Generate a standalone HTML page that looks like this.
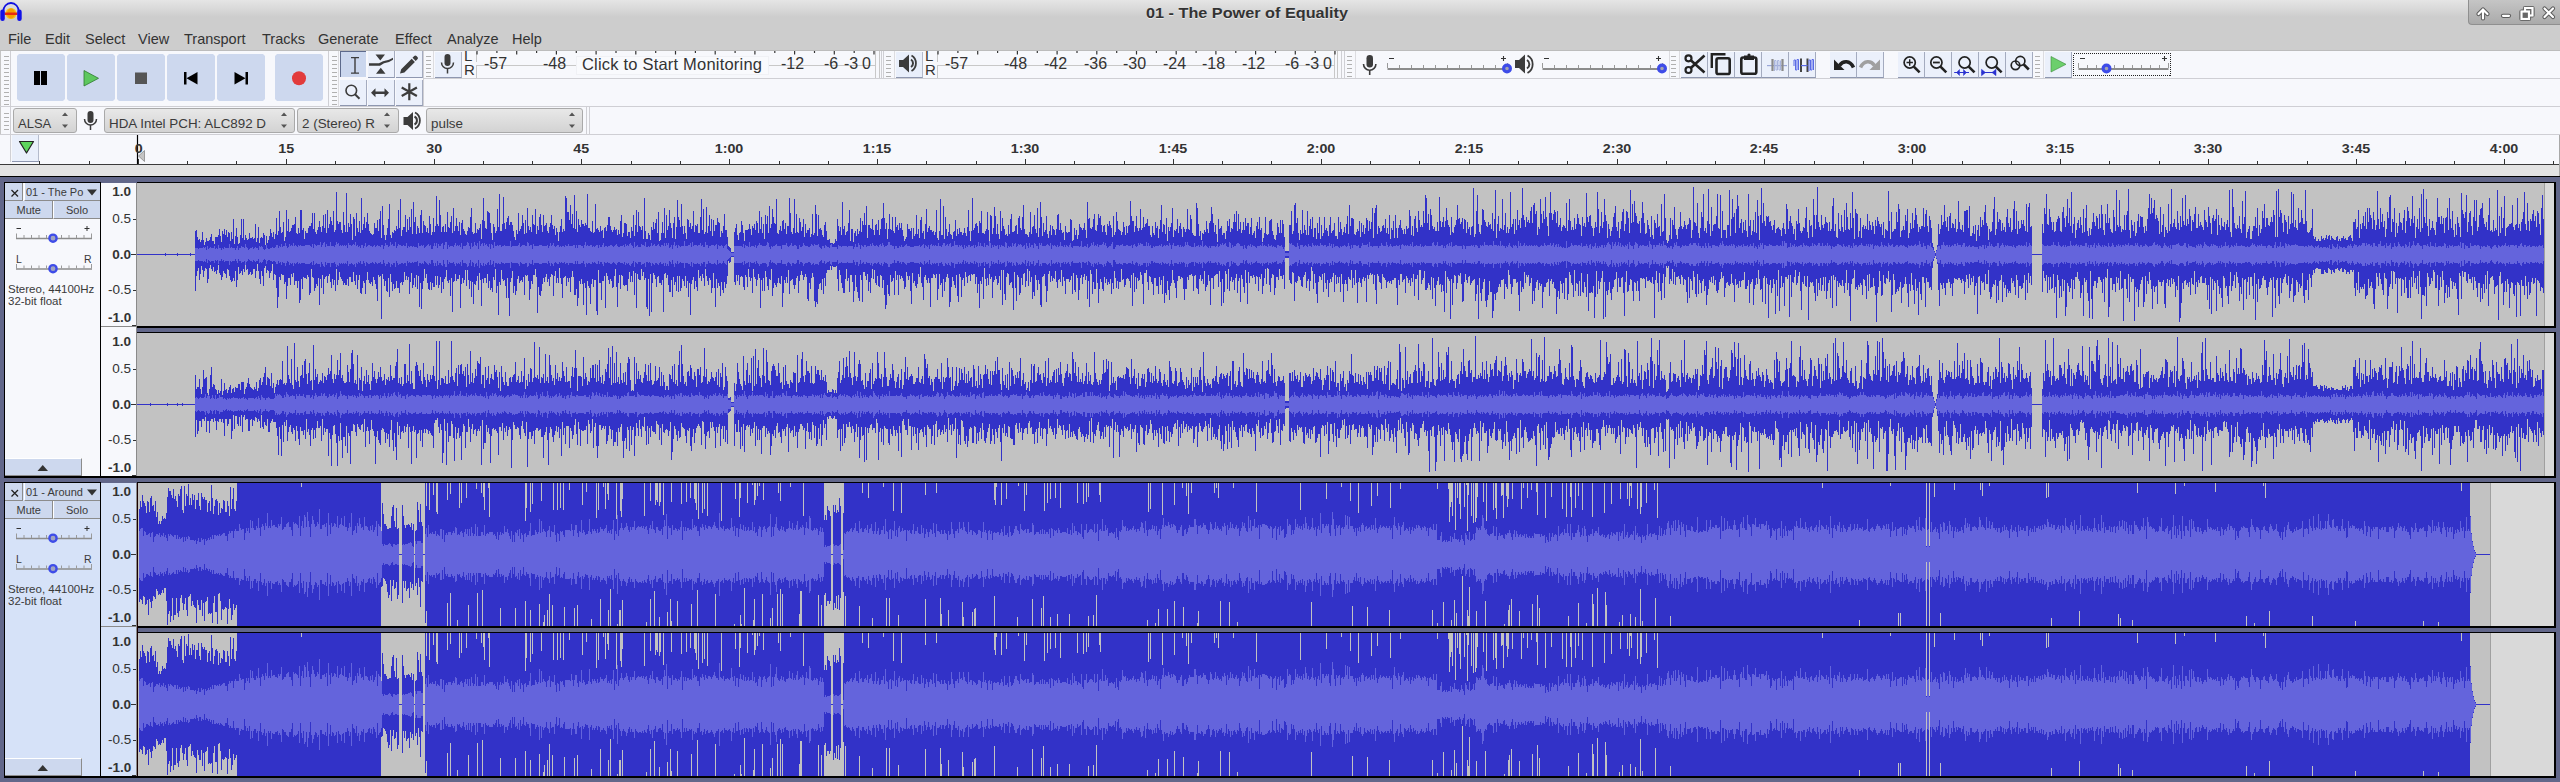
<!DOCTYPE html>
<html><head><meta charset="utf-8">
<style>
*{box-sizing:border-box;margin:0;padding:0}
html,body{width:2560px;height:782px;overflow:hidden;background:#f7f8fc;font-family:"Liberation Sans",sans-serif;color:#333}
.a{position:absolute}
.t{position:absolute;white-space:nowrap;line-height:1}
svg{position:absolute;overflow:visible}
.tb{background:#f7f8fc}
.grip{position:absolute;width:5px;background:repeating-linear-gradient(to bottom,transparent 0,transparent 3px,#b0b0b0 3px,#b0b0b0 4px)}
.btn{position:absolute;background:#cdd8ee;clip-path:polygon(2px 0,calc(100% - 2px) 0,100% 2px,100% calc(100% - 2px),calc(100% - 2px) 100%,2px 100%,0 calc(100% - 2px),0 2px)}
.tbtn{position:absolute;background:#ebf0fb;border-right:1px solid #a4abbf;border-bottom:1px solid #8e97b0}
.combo{position:absolute;height:25px;border:1px solid #a9a9a9;border-radius:3px;background:linear-gradient(#e8e8e8,#d3d3d3);font-size:14px;color:#3a3a3a}
.mi{position:absolute;top:32px;font-size:14.5px;color:#333;line-height:1}
.lbl{position:absolute;font-size:16px;color:#333;line-height:1;white-space:nowrap}
.rl{position:absolute;top:142px;font-size:13px;font-weight:bold;color:#333;line-height:1;white-space:nowrap}
.vr{position:absolute;font-size:12px;color:#333;line-height:1;white-space:nowrap}
.vrb{font-weight:bold}
</style></head><body>
<!-- title + menu -->
<div class="a" style="left:0;top:0;width:2560px;height:51px;background:linear-gradient(#e5e5e5 0px,#dadada 8px,#cdcdcd 17px,#cdcdcd 51px)"></div>
<div class="a" style="left:0;top:50px;width:2560px;height:1px;background:#bcbcbc"></div>
<!-- app icon -->
<svg style="left:0;top:0" width="24" height="24" viewBox="0 0 24 24">
 <circle cx="11" cy="13.5" r="5.5" fill="#f7c21a"/>
 <ellipse cx="11" cy="13.5" rx="4" ry="5" fill="#f5a000"/>
 <rect x="4.5" y="12.5" width="13" height="2.5" fill="#e82a10"/>
 <path d="M3.2 15 V11.5 A7.8 8.5 0 0 1 18.8 11.5 V15" fill="none" stroke="#1010e0" stroke-width="1.8"/>
 <rect x="0.3" y="9.5" width="4.5" height="11.5" rx="2.2" fill="#1212e8"/>
 <rect x="17.2" y="9.5" width="4.5" height="11.5" rx="2.2" fill="#1212e8"/>
</svg>
<div class="t" style="left:1146px;top:6px;font-size:14.4px;font-weight:bold;color:#333;transform:scaleX(1.128);transform-origin:0 0;text-shadow:0 1px 0 rgba(255,255,255,.6)">01 - The Power of Equality</div>
<!-- window controls -->
<div class="a" style="left:2468px;top:0;width:92px;height:25px;background:linear-gradient(#c5c5c5,#aaaaaa);border-left:1px solid #8f8f8f;border-bottom:1px solid #8f8f8f;border-bottom-left-radius:4px"></div>
<svg style="left:2470px;top:4px" width="90" height="18" viewBox="0 0 90 18">
 <g stroke="#5a5a5a" stroke-width="4.2" fill="none" stroke-linejoin="round" stroke-linecap="round">
  <path d="M13 14.5V5.5M8.5 10L13 5.5L17.5 10"/>
  <path d="M33 11.8h6"/>
  <rect x="55" y="4" width="7.5" height="7.5"/><rect x="51.5" y="7.5" width="7.5" height="7.5"/>
  <path d="M74.5 4.5L83 13M83 4.5L74.5 13"/>
 </g>
 <g stroke="#ffffff" stroke-width="2.2" fill="none" stroke-linecap="round">
  <path d="M13 14.5V5.5M8.5 10L13 5.5L17.5 10"/>
  <path d="M33 11.8h6"/>
  <rect x="55" y="4" width="7.5" height="7.5"/><rect x="51.5" y="7.5" width="7.5" height="7.5" fill="#666"/>
  <path d="M74.5 4.5L83 13M83 4.5L74.5 13"/>
 </g>
</svg>
<div class="mi" style="left:8px">File</div>
<div class="mi" style="left:45px">Edit</div>
<div class="mi" style="left:85px">Select</div>
<div class="mi" style="left:138px">View</div>
<div class="mi" style="left:184px">Transport</div>
<div class="mi" style="left:262px">Tracks</div>
<div class="mi" style="left:318px">Generate</div>
<div class="mi" style="left:395px">Effect</div>
<div class="mi" style="left:447px">Analyze</div>
<div class="mi" style="left:512px">Help</div>
<!-- toolbar rows -->
<div class="a" style="left:0;top:51px;width:2560px;height:84px;background:#f7f8fc"></div>
<div class="a" style="left:0;top:51px;width:1px;height:84px;background:#c4c4c4"></div>
<div class="a" style="left:0;top:106px;width:2560px;height:1px;background:#cfcfd4"></div>
<div class="a" style="left:0;top:134px;width:2560px;height:1px;background:#cfcfd4"></div>
<div class="a" style="left:423px;top:78px;width:2137px;height:1px;background:#cfcfd4"></div>
<!-- transport toolbar -->
<div class="a" style="left:10px;top:51px;width:1px;height:55px;background:#cfcfd4"></div>
<div class="grip" style="left:4px;top:53px;height:52px"></div>
<div class="btn" style="left:17px;top:54px;width:48px;height:47px"></div>
<div class="btn" style="left:67px;top:54px;width:48px;height:47px"></div>
<div class="btn" style="left:117px;top:54px;width:48px;height:47px"></div>
<div class="btn" style="left:167px;top:54px;width:48px;height:47px"></div>
<div class="btn" style="left:217px;top:54px;width:48px;height:47px"></div>
<div class="btn" style="left:275px;top:54px;width:48px;height:47px"></div>
<svg style="left:0;top:0" width="330" height="106">
 <rect x="34" y="71" width="6" height="14" fill="#000"/><rect x="41" y="71" width="6" height="14" fill="#000"/>
 <path d="M84 70.5L98.5 78.3L84 86Z" fill="#5ec85e" stroke="#2f7a2f" stroke-width="0.8"/>
 <rect x="135" y="72.5" width="12" height="11.5" fill="#555"/>
 <rect x="184" y="72" width="2.5" height="12.5" fill="#000"/><path d="M186.5 78.2L197.5 72V84.5Z" fill="#000"/>
 <rect x="245.5" y="72" width="2.5" height="12.5" fill="#000"/><path d="M245.5 78.2L234.5 72V84.5Z" fill="#000"/>
 <circle cx="299" cy="78.3" r="7" fill="#e23b3b"/>
</svg>
<div class="a" style="left:328px;top:51px;width:1px;height:55px;background:#cfcfd4"></div>
<!-- tools toolbar -->
<div class="grip" style="left:332px;top:53px;height:52px"></div>
<div class="a" style="left:338px;top:51px;width:1px;height:55px;background:#dcdce0"></div>
<div class="a" style="left:340px;top:51px;width:26px;height:26px;background:#cbd7ee;border-top:1px solid #5d6a8c;border-left:1px solid #5d6a8c"></div>
<div class="tbtn" style="left:368px;top:51px;width:27px;height:27px"></div>
<div class="tbtn" style="left:396px;top:51px;width:27px;height:27px"></div>
<div class="tbtn" style="left:340px;top:80px;width:27px;height:26px"></div>
<div class="tbtn" style="left:368px;top:80px;width:27px;height:26px"></div>
<div class="tbtn" style="left:396px;top:80px;width:27px;height:26px"></div>
<svg style="left:0;top:0" width="430" height="106">
 <g fill="#3c3c3c" stroke="none">
  <path d="M351 57h8v1.3h-3.3v14.2h3.3v1.3h-8v-1.3h3.3V58.3H351Z"/>
  <path d="M375.5 54.5h9.5l-4.7 6Z M376 73.7h9.5l-4.7-6Z M369 63.3h10l4-2 6-1.5 4-2v2l-4 2.3-5 1.2-4 2.5h-11Z"/>
  <path d="M400 73.5l1.2-4.3 10.5-10.5 3.2 3.2-10.5 10.5Z M412.5 57.8l1.7-1.7c.7-.7 1.6-.7 2.3 0l.9.9c.7.7.7 1.6 0 2.3l-1.7 1.7Z"/>
 </g>
 <g fill="none" stroke="#3c3c3c" stroke-width="1.6">
  <circle cx="351.3" cy="90.5" r="5.3"/><path d="M355 94.3l4.5 4.5" stroke-width="2"/>
 </g>
 <path d="M371 92.7l4.5-4.5v3.2h9v-3.2l4.5 4.5-4.5 4.5v-3.2h-9v3.2Z" fill="#3c3c3c"/>
 <path d="M409.3 83.3v17M401.7 87.5l15.2 8.5M401.7 96l15.2-8.5" stroke="#3c3c3c" stroke-width="2.2"/>
</svg>
<!-- record meter toolbar -->
<div class="grip" style="left:426px;top:53px;height:24px"></div>
<div class="a" style="left:433px;top:51px;width:1px;height:27px;background:#dcdce0"></div>
<div class="a" style="left:423px;top:51px;width:1px;height:55px;background:#cfcfd4"></div>
<div class="a" style="left:435px;top:52px;width:27px;height:26px;background:#e9effb;border-right:1px solid #b4bbcc;border-bottom:1px solid #8e97b0"></div>
<svg style="left:0;top:0" width="900" height="80">
 <rect x="444.5" y="54" width="6" height="12" rx="3" fill="#3c3c3c"/>
 <path d="M441.5 62.5a6 6 0 0 0 12 0" fill="none" stroke="#3c3c3c" stroke-width="1.5"/>
 <path d="M447.5 68.5v5" stroke="#3c3c3c" stroke-width="1.5"/>
</svg>
<div class="t" style="left:464px;top:49px;font-size:15px;color:#333;line-height:13.5px">L<br>R</div>
<div class="a" style="left:476px;top:52px;width:1px;height:10px;background:#c8c8c8"></div>
<div class="a" style="left:476px;top:65px;width:1px;height:13px;background:#c8c8c8"></div>
<div class="a" style="left:476px;top:65px;width:400px;height:1px;background:#c8c8c8"></div>
<div class="a" style="left:576px;top:56px;width:193px;height:19px;background:#f9fafd;border:1px solid #f0f1f5"></div>
<div class="lbl" style="left:484px;top:56px">-57</div>
<div class="lbl" style="left:543px;top:56px">-48</div>
<div class="lbl" style="left:582px;top:56px;font-size:16.5px;letter-spacing:0.2px">Click to Start Monitoring</div>
<div class="lbl" style="left:781px;top:56px">-12</div>
<div class="lbl" style="left:824px;top:56px">-6</div>
<div class="lbl" style="left:844px;top:56px">-3</div>
<div class="lbl" style="left:862px;top:56px">0</div>
<div class="a" style="left:875px;top:51px;width:1px;height:27px;background:#c8c8c8"></div>
<div class="a" style="left:879px;top:51px;width:1px;height:27px;background:#c8c8c8"></div>
<div class="a" style="left:881px;top:51px;width:3px;height:27px;border-left:1px solid #cfcfd4;border-right:1px solid #cfcfd4"></div>
<!-- play meter toolbar -->
<div class="grip" style="left:886px;top:53px;height:24px"></div>
<div class="a" style="left:894px;top:51px;width:1px;height:27px;background:#dcdce0"></div>
<div class="a" style="left:896px;top:52px;width:27px;height:26px;background:#e9effb;border-right:1px solid #b4bbcc;border-bottom:1px solid #8e97b0"></div>
<svg style="left:0;top:0" width="1400" height="80">
 <path d="M899 60h4l6-5.5v18l-6-5.5h-4Z" fill="#3c3c3c"/>
 <path d="M911 59.5a4.5 4.5 0 0 1 0 7.5" fill="none" stroke="#3c3c3c" stroke-width="2"/>
 <path d="M911.5 55.5a9 9 0 0 1 0 15.5" fill="none" stroke="#3c3c3c" stroke-width="1.8"/>
</svg>
<div class="t" style="left:925px;top:49px;font-size:15px;color:#333;line-height:13.5px">L<br>R</div>
<div class="a" style="left:937px;top:52px;width:1px;height:10px;background:#c8c8c8"></div>
<div class="a" style="left:937px;top:65px;width:1px;height:13px;background:#c8c8c8"></div>
<div class="a" style="left:937px;top:65px;width:397px;height:1px;background:#c8c8c8"></div>
<div class="lbl" style="left:945px;top:56px">-57</div>
<div class="lbl" style="left:1004px;top:56px">-48</div>
<div class="lbl" style="left:1044px;top:56px">-42</div>
<div class="lbl" style="left:1084px;top:56px">-36</div>
<div class="lbl" style="left:1123px;top:56px">-30</div>
<div class="lbl" style="left:1163px;top:56px">-24</div>
<div class="lbl" style="left:1202px;top:56px">-18</div>
<div class="lbl" style="left:1242px;top:56px">-12</div>
<div class="lbl" style="left:1285px;top:56px">-6</div>
<div class="lbl" style="left:1305px;top:56px">-3</div>
<div class="lbl" style="left:1323px;top:56px">0</div>
<div class="a" style="left:1334px;top:51px;width:1px;height:27px;background:#c8c8c8"></div>
<div class="a" style="left:1337px;top:51px;width:1px;height:27px;background:#c8c8c8"></div>
<div class="a" style="left:1341px;top:51px;width:4px;height:27px;border-left:1px solid #cfcfd4;border-right:1px solid #cfcfd4"></div>
<!-- mixer toolbar -->
<div class="grip" style="left:1347px;top:53px;height:24px"></div>
<div class="a" style="left:1355px;top:51px;width:1px;height:27px;background:#dcdce0"></div>
<svg style="left:0;top:0" width="2200" height="80">
 <rect x="1366.5" y="55" width="6.5" height="12.5" rx="3.2" fill="#3c3c3c"/>
 <path d="M1363.5 64a6.2 6.2 0 0 0 12.4 0" fill="none" stroke="#3c3c3c" stroke-width="1.6"/>
 <path d="M1369.7 70v5" stroke="#3c3c3c" stroke-width="1.6"/>
 <path d="M1515 60h4l6-5.5v19l-6-5.5h-4Z" fill="#3c3c3c"/>
 <path d="M1527 60a5 5 0 0 1 0 8.5" fill="none" stroke="#3c3c3c" stroke-width="2"/>
 <path d="M1527.5 55.5a10 10 0 0 1 0 17.5" fill="none" stroke="#3c3c3c" stroke-width="1.8"/>
<path d="M1387.5 69H1507.5" stroke="#8c8c8c" stroke-width="2"/><path d="M1387.5 65v3M1399.5 65v3M1411.5 65v3M1423.5 65v3M1435.5 65v3M1447.5 65v3M1459.5 65v3M1471.5 65v3M1483.5 65v3M1495.5 65v3M1507.5 65v3M1387.5 63v3M1507.5 63v3" stroke="#9a9a9a" stroke-width="1"/><path d="M1389.0 58.5h5M1501.0 58.5h5M1503.5 56v5" stroke="#333" stroke-width="1.1"/><circle cx="1507" cy="68.5" r="3.4" fill="#a4a4b0" stroke="#3e4ce8" stroke-width="3.2"/><path d="M1542.5 69H1662.5" stroke="#8c8c8c" stroke-width="2"/><path d="M1542.5 65v3M1554.5 65v3M1566.5 65v3M1578.5 65v3M1590.5 65v3M1602.5 65v3M1614.5 65v3M1626.5 65v3M1638.5 65v3M1650.5 65v3M1662.5 65v3M1542.5 63v3M1662.5 63v3" stroke="#9a9a9a" stroke-width="1"/><path d="M1544.0 58.5h5M1656.0 58.5h5M1658.5 56v5" stroke="#333" stroke-width="1.1"/><circle cx="1662" cy="68.5" r="3.4" fill="#a4a4b0" stroke="#3e4ce8" stroke-width="3.2"/>
</svg>
<div class="a" style="left:1669px;top:51px;width:1px;height:27px;background:#dcdce0"></div>
<!-- edit toolbar -->
<div class="grip" style="left:1671px;top:53px;height:24px"></div>
<div class="a" style="left:1679px;top:51px;width:1px;height:27px;background:#dcdce0"></div>
<div class="tbtn" style="left:1681px;top:52px;width:27px;height:26px"></div>
<div class="tbtn" style="left:1708px;top:52px;width:27px;height:26px"></div>
<div class="tbtn" style="left:1735px;top:52px;width:27px;height:26px"></div>
<div class="tbtn" style="left:1762px;top:52px;width:27px;height:26px"></div>
<div class="tbtn" style="left:1789px;top:52px;width:27px;height:26px"></div>
<div class="tbtn" style="left:1830px;top:52px;width:27px;height:26px"></div>
<div class="tbtn" style="left:1857px;top:52px;width:27px;height:26px"></div>
<div class="tbtn" style="left:1898px;top:52px;width:27px;height:26px"></div>
<div class="tbtn" style="left:1925px;top:52px;width:27px;height:26px"></div>
<div class="tbtn" style="left:1952px;top:52px;width:27px;height:26px"></div>
<div class="tbtn" style="left:1979px;top:52px;width:27px;height:26px"></div>
<div class="tbtn" style="left:2006px;top:52px;width:27px;height:26px"></div>
<svg style="left:0;top:0" width="2200" height="80">
 <g fill="none" stroke="#222">
  <circle cx="1688.5" cy="58.3" r="3" stroke-width="2.2"/><circle cx="1688.5" cy="70" r="3" stroke-width="2.2"/>
  <path d="M1690.8 60.3L1704.5 72.5M1690.8 68L1704.5 55.5" stroke-width="2.6"/>
  <path d="M1711.8 68V54.2H1725.5" stroke-width="2.4"/>
  <rect x="1716.5" y="58.2" width="13.2" height="15.8" rx="1.8" stroke-width="2.6"/>
  <rect x="1741.3" y="57.5" width="15" height="16.3" rx="1.8" stroke-width="2.6"/>
 </g>
 <path d="M1744 55.5h10v4.5h-10Z" fill="#222"/><circle cx="1749" cy="55" r="1.6" fill="#222"/>
 <g fill="none">
  <path d="M1767 65.6H1787" stroke="#9aa6d8" stroke-width="1.2"/>
  <path d="M1772.5 59v12M1782.5 59v12" stroke="#8a8a8a" stroke-width="2.2"/>
  <path d="M1774.5 71V60.5h1.5V70h1.5V60.5h1.5V70h1.5V60.5" stroke="#a9b4dc" stroke-width="1"/>
 </g>
 <g fill="none">
  <path d="M1794 66V60h1.5v10h1.5V59.5h1.5V70" stroke="#5a6ae6" stroke-width="1"/>
  <path d="M1801 58.5v13.5M1807.5 58.5v13.5" stroke="#444" stroke-width="2"/>
  <path d="M1801 65.6H1807.5" stroke="#5a6ae6" stroke-width="1.2"/>
  <path d="M1809 71V60h1.5v10h1.5V59.5h1.5V70" stroke="#5a6ae6" stroke-width="1"/>
 </g>
 <path d="M1839.5 65.5C1843 60.5 1850 60 1853.5 67.5" fill="none" stroke="#222" stroke-width="3.6"/>
 <path d="M1834 59.5V70H1844.5Z" fill="#222"/>
 <path d="M1874.5 65.5C1871 60.5 1864 60 1860.5 67.5" fill="none" stroke="#a0a0a0" stroke-width="3.6"/>
 <path d="M1880 59.5V70H1869.5Z" fill="#a0a0a0"/>
 <g fill="none" stroke="#222" stroke-width="1.7">
  <circle cx="1909.7" cy="62.5" r="5.6"/><path d="M1913.8 66.6l5.8 5.8" stroke-width="2.6"/><path d="M1906.5 62.5h6.4M1909.7 59.3v6.4" stroke-width="1.4"/>
  <circle cx="1936.4" cy="62.5" r="5.6"/><path d="M1940.5 66.6l5.8 5.8" stroke-width="2.6"/><path d="M1933 62.5h6.8" stroke-width="1.8"/>
  <circle cx="1964.6" cy="62.5" r="5.6"/><path d="M1968.7 66.6l5.8 5.8" stroke-width="2.6"/>
  <circle cx="1991.7" cy="62.5" r="5.6"/><path d="M1995.8 66.6l5.8 5.8" stroke-width="2.6"/>
  <circle cx="2020.3" cy="61" r="4.6"/><circle cx="2015.5" cy="65.3" r="4.3"/><path d="M2023.8 64.5l5 5" stroke-width="2.6"/>
 </g>
 <g fill="#2a32d0" stroke="#2a32d0">
  <path d="M1954.2 72.5H1969" stroke-width="1"/><path d="M1956.5 72.5l3-3v6Z M1966.5 72.5l-3-3v6Z" stroke-width="0.5"/>
  <path d="M1981.5 72.5H1996" stroke-width="1"/><path d="M1981.5 69.3V75.7L1985.5 72.5Z M1996 69.3V75.7L1992 72.5Z" stroke-width="0.5"/>
 </g>
</svg>
<div class="grip" style="left:2035px;top:53px;height:24px"></div>
<div class="a" style="left:2043px;top:51px;width:1px;height:27px;background:#dcdce0"></div>
<div class="tbtn" style="left:2045px;top:52px;width:27px;height:26px"></div>
<svg style="left:0;top:0" width="2200" height="80">
 <path d="M2051 56.5L2066 64.3L2051 72Z" fill="#6ccf6c" stroke="#3a8a3a" stroke-width="0.6"/>
 <rect x="2073.5" y="53.5" width="97" height="22" fill="none" stroke="#222" stroke-width="1" stroke-dasharray="1 1" shape-rendering="crispEdges"/>
<path d="M2078.5 69H2168.5" stroke="#8c8c8c" stroke-width="2"/><path d="M2078.5 65v3M2087.5 65v3M2096.5 65v3M2105.5 65v3M2114.5 65v3M2123.5 65v3M2132.5 65v3M2141.5 65v3M2150.5 65v3M2159.5 65v3M2168.5 65v3M2078.5 63v3M2168.5 63v3" stroke="#9a9a9a" stroke-width="1"/><path d="M2080.0 58.5h5M2162.0 58.5h5M2164.5 56v5" stroke="#333" stroke-width="1.1"/><circle cx="2106.5" cy="68.5" r="3.4" fill="#a4a4b0" stroke="#3e4ce8" stroke-width="3.2"/>
</svg>
<!-- device toolbar -->
<div class="grip" style="left:4px;top:110px;height:23px"></div>
<div class="a" style="left:10px;top:107px;width:1px;height:27px;background:#cfcfd4"></div>
<div class="combo" style="left:13px;top:108px;width:64px"><span class="t" style="left:4px;top:7.5px;font-size:13px">ALSA</span></div>
<div class="combo" style="left:104px;top:108px;width:191px"><span class="t" style="left:4px;top:7.5px;font-size:13.4px">HDA Intel PCH: ALC892 D</span></div>
<div class="combo" style="left:297px;top:108px;width:102px"><span class="t" style="left:4px;top:7.5px;font-size:13.4px">2 (Stereo) R</span></div>
<div class="combo" style="left:426px;top:108px;width:157px"><span class="t" style="left:4px;top:7.5px;font-size:13.4px">pulse</span></div>
<svg style="left:0;top:0" width="600" height="135">
 <g fill="#555">
  <path d="M62 116l3-3.5 3 3.5Z M62 124.5l3 3.5 3-3.5Z"/>
  <path d="M281 116l3-3.5 3 3.5Z M281 124.5l3 3.5 3-3.5Z"/>
  <path d="M384 116l3-3.5 3 3.5Z M384 124.5l3 3.5 3-3.5Z"/>
  <path d="M569 116l3-3.5 3 3.5Z M569 124.5l3 3.5 3-3.5Z"/>
 </g>
 <rect x="87.5" y="111" width="6" height="12" rx="3" fill="#3c3c3c"/>
 <path d="M84.5 119a6 6 0 0 0 12 0" fill="none" stroke="#3c3c3c" stroke-width="1.5"/>
 <path d="M90.5 125v5" stroke="#3c3c3c" stroke-width="1.5"/>
 <path d="M403.5 117h4l5.5-5v18l-5.5-5h-4Z" fill="#3c3c3c"/>
 <path d="M414.5 116.5a4.5 4.5 0 0 1 0 8" fill="none" stroke="#3c3c3c" stroke-width="2"/>
 <path d="M415 112.5a9 9 0 0 1 0 16" fill="none" stroke="#3c3c3c" stroke-width="1.8"/>
</svg>
<div class="a" style="left:586px;top:107px;width:4px;height:27px;border-left:1px solid #cfcfd4;border-right:1px solid #cfcfd4"></div>
<!-- ruler -->
<div class="a" style="left:0;top:135px;width:2560px;height:30px;background:#f7f8fc"></div>
<div class="a" style="left:10px;top:135px;width:1px;height:27px;background:#d0d0d4"></div>
<div class="a" style="left:12px;top:135px;width:27px;height:27px;background:#e9effb;border-right:1px solid #b4bbcc;border-bottom:1px solid #8e97b0"></div>
<svg style="left:0;top:0" width="200" height="170">
 <path d="M19.5 141.5h14l-7 11.5Z" fill="#5ed45e" stroke="#222" stroke-width="1.2" stroke-linejoin="round"/>
</svg>
<div class="a" style="left:0;top:164px;width:2560px;height:1px;background:#3a3a3a"></div>
<div class="a" style="left:2559px;top:135px;width:1px;height:42px;background:#a8a8a8"></div>
<div class="a" style="left:0;top:165px;width:2559px;height:11px;background:#e3e3e3"></div>
<div class="a" style="left:0;top:176px;width:2560px;height:1px;background:#000"></div>
<svg style="left:0;top:0" width="1400" height="60"><path d="M477.0 51v3.5M496.9 51v2M516.7 51v3.5M536.6 51v2M556.4 51v3.5M576.3 51v2M596.1 51v3.5M616.0 51v2M635.8 51v3.5M655.7 51v2M675.5 51v3.5M695.4 51v2M715.2 51v3.5M735.1 51v2M754.9 51v3.5M774.8 51v2M794.6 51v3.5M814.5 51v2M834.3 51v3.5M854.2 51v2M874.0 51v3.5M938.0 51v3.5M957.9 51v2M977.7 51v3.5M997.6 51v2M1017.4 51v3.5M1037.3 51v2M1057.1 51v3.5M1077.0 51v2M1096.8 51v3.5M1116.7 51v2M1136.5 51v3.5M1156.4 51v2M1176.2 51v3.5M1196.1 51v2M1215.9 51v3.5M1235.8 51v2M1255.6 51v3.5M1275.5 51v2M1295.3 51v3.5M1315.2 51v2M1335.0 51v3.5" stroke="#333" stroke-width="1.2" fill="none"/></svg><svg style="left:0;top:0" width="2560" height="170"><path d="M39.5 161v3M89.5 161v3M138.5 159v5M187.5 161v3M236.5 161v3M286.5 159v5M335.5 161v3M384.5 161v3M434.5 159v5M483.5 161v3M532.5 161v3M581.5 159v5M631.5 161v3M680.5 161v3M729.5 159v5M779.5 161v3M828.5 161v3M877.5 159v5M926.5 161v3M976.5 161v3M1025.5 159v5M1074.5 161v3M1124.5 161v3M1173.5 159v5M1222.5 161v3M1271.5 161v3M1321.5 159v5M1370.5 161v3M1419.5 161v3M1469.5 159v5M1518.5 161v3M1567.5 161v3M1617.5 159v5M1666.5 161v3M1715.5 161v3M1764.5 159v5M1814.5 161v3M1863.5 161v3M1912.5 159v5M1962.5 161v3M2011.5 161v3M2060.5 159v5M2109.5 161v3M2159.5 161v3M2208.5 159v5M2257.5 161v3M2307.5 161v3M2356.5 159v5M2405.5 161v3M2454.5 161v3M2504.5 159v5M2553.5 161v3" stroke="#333" stroke-width="1" fill="none"/><path d="M137.5 135V164" stroke="#000" stroke-width="1.2"/><path d="M144.5 150.5V161.5L138.5 156Z" fill="#c4c4c4" stroke="#8a8a8a" stroke-width="0.8"/></svg><div class="rl" style="left:78.5px;width:120px;text-align:center"><span style="display:inline-block;transform:scaleX(1.1)">0</span></div><div class="rl" style="left:226.5px;width:120px;text-align:center"><span style="display:inline-block;transform:scaleX(1.1)">15</span></div><div class="rl" style="left:374.5px;width:120px;text-align:center"><span style="display:inline-block;transform:scaleX(1.1)">30</span></div><div class="rl" style="left:521.5px;width:120px;text-align:center"><span style="display:inline-block;transform:scaleX(1.1)">45</span></div><div class="rl" style="left:669.5px;width:120px;text-align:center"><span style="display:inline-block;transform:scaleX(1.1)">1:00</span></div><div class="rl" style="left:817.5px;width:120px;text-align:center"><span style="display:inline-block;transform:scaleX(1.1)">1:15</span></div><div class="rl" style="left:965.5px;width:120px;text-align:center"><span style="display:inline-block;transform:scaleX(1.1)">1:30</span></div><div class="rl" style="left:1113.5px;width:120px;text-align:center"><span style="display:inline-block;transform:scaleX(1.1)">1:45</span></div><div class="rl" style="left:1261.5px;width:120px;text-align:center"><span style="display:inline-block;transform:scaleX(1.1)">2:00</span></div><div class="rl" style="left:1409.5px;width:120px;text-align:center"><span style="display:inline-block;transform:scaleX(1.1)">2:15</span></div><div class="rl" style="left:1557.5px;width:120px;text-align:center"><span style="display:inline-block;transform:scaleX(1.1)">2:30</span></div><div class="rl" style="left:1704.5px;width:120px;text-align:center"><span style="display:inline-block;transform:scaleX(1.1)">2:45</span></div><div class="rl" style="left:1852.5px;width:120px;text-align:center"><span style="display:inline-block;transform:scaleX(1.1)">3:00</span></div><div class="rl" style="left:2000.5px;width:120px;text-align:center"><span style="display:inline-block;transform:scaleX(1.1)">3:15</span></div><div class="rl" style="left:2148.5px;width:120px;text-align:center"><span style="display:inline-block;transform:scaleX(1.1)">3:30</span></div><div class="rl" style="left:2296.5px;width:120px;text-align:center"><span style="display:inline-block;transform:scaleX(1.1)">3:45</span></div><div class="rl" style="left:2444.5px;width:120px;text-align:center"><span style="display:inline-block;transform:scaleX(1.1)">4:00</span></div><div class="a" style="left:0;top:177px;width:2560px;height:605px;background:#62678a"></div><div class="a" style="left:4px;top:182px;width:97px;height:295px;background:#000"></div><div class="a" style="left:5px;top:183px;width:95px;height:293px;background:#f7f8fc"></div><div class="a" style="left:5px;top:183px;width:18px;height:18px;background:#cdd8ee;border-right:1px solid #8c8c8c;border-bottom:1px solid #8c8c8c"></div><svg style="left:0;top:182px" width="30" height="20"><path d="M11.5 8L18 14.5M18 8L11.5 14.5" stroke="#222" stroke-width="1.3"/></svg><div class="a" style="left:24px;top:183px;width:76px;height:18px;background:#cdd8ee;border-bottom:1px solid #8c8c8c;border-left:1px solid #fff"></div><div class="t" style="left:26px;top:187px;font-size:11px;color:#3a3a3a;width:62px;overflow:hidden">01 - The Po</div><svg style="left:0;top:182px" width="100" height="20"><path d="M87 7.5h10l-5 6Z" fill="#333"/></svg><div class="a" style="left:5px;top:201px;width:48px;height:18px;background:#cdd8ee;border-right:1px solid #8c8c8c;border-bottom:1px solid #8c8c8c"></div><div class="a" style="left:53px;top:201px;width:47px;height:18px;background:#cdd8ee;border-bottom:1px solid #8c8c8c;border-left:1px solid #fff"></div><div class="t" style="left:16.5px;top:205px;font-size:11px;color:#3a3a3a">Mute</div><div class="t" style="left:66px;top:205px;font-size:11px;color:#3a3a3a">Solo</div><svg style="left:0;top:0" width="100" height="800"><path d="M16.5 228.5h4.5M84.5 228.5h5M87 226v5" stroke="#333" stroke-width="1"/><path d="M16 238.5H92" stroke="#8c8c8c" stroke-width="1.6"/><path d="M16.5 235.0v3M24.0 235.0v3M31.5 235.0v3M39.0 235.0v3M46.5 235.0v3M54.0 235.0v3M61.5 235.0v3M69.0 235.0v3M76.5 235.0v3M84.0 235.0v3M91.5 235.0v3M16.5 233.5v2M91.5 233.5v2" stroke="#9a9a9a" stroke-width="1"/><circle cx="53" cy="238.2" r="3.6" fill="#a0a4c0" stroke="#3e4ce8" stroke-width="2.4"/><path d="M16 269H92" stroke="#8c8c8c" stroke-width="1.6"/><path d="M16.5 265.5v3M24.0 265.5v3M31.5 265.5v3M39.0 265.5v3M46.5 265.5v3M54.0 265.5v3M61.5 265.5v3M69.0 265.5v3M76.5 265.5v3M84.0 265.5v3M91.5 265.5v3M16.5 264v2M91.5 264v2" stroke="#9a9a9a" stroke-width="1"/><circle cx="53" cy="268.7" r="3.6" fill="#a0a4c0" stroke="#3e4ce8" stroke-width="2.4"/></svg><div class="t" style="left:16px;top:254px;font-size:10.5px;color:#3a3a3a">L</div><div class="t" style="left:84px;top:254px;font-size:10.5px;color:#3a3a3a">R</div><div class="t" style="left:8px;top:283px;font-size:11.5px;color:#3a3a3a;line-height:12px">Stereo, 44100Hz<br>32-bit float</div><div class="a" style="left:5px;top:458px;width:77px;height:18px;background:#cdd8ee;border-top:1px solid #fff;border-right:1px solid #8c8c8c;border-bottom:1px solid #8c8c8c"></div><svg style="left:0;top:458px" width="100" height="20"><path d="M37.5 13h10.5l-5.25-6Z" fill="#333"/></svg><div class="a" style="left:101px;top:183px;width:35px;height:293px;background:#f7f8fc"></div><div class="a" style="left:136px;top:183px;width:1px;height:293px;background:#8a8a8a"></div><div class="a" style="left:101px;top:183px;width:35px;height:143px;background:#f7f8fc"></div><div class="a" style="left:136px;top:183px;width:1px;height:143px;background:#8a8a8a"></div><div class="a" style="left:101px;top:326px;width:36px;height:1px;background:#8a8a8a"></div><div class="t" style="left:60px;width:71px;text-align:right;top:185.5px;font-size:12.3px;font-weight:bold;color:#333"><span style="display:inline-block;transform:scaleX(1.1);transform-origin:100% 0">1.0</span></div><div class="t" style="left:60px;width:71px;text-align:right;top:212.8px;font-size:12.3px;font-weight:normal;color:#333"><span style="display:inline-block;transform:scaleX(1.1);transform-origin:100% 0">0.5</span></div><div class="t" style="left:60px;width:71px;text-align:right;top:248.5px;font-size:12.3px;font-weight:bold;color:#333"><span style="display:inline-block;transform:scaleX(1.1);transform-origin:100% 0">0.0</span></div><div class="t" style="left:60px;width:71px;text-align:right;top:284.2px;font-size:12.3px;font-weight:normal;color:#333"><span style="display:inline-block;transform:scaleX(1.1);transform-origin:100% 0">-0.5</span></div><div class="t" style="left:60px;width:71px;text-align:right;top:312.0px;font-size:12.3px;font-weight:bold;color:#333"><span style="display:inline-block;transform:scaleX(1.1);transform-origin:100% 0">-1.0</span></div><svg style="left:0;top:0" width="140" height="800"><path d="M133 219.5H136M131 254.5H136M133 290.5H136M132 325.5h4" stroke="#333" stroke-width="1"/></svg><div class="a" style="left:101px;top:333px;width:35px;height:143px;background:#f7f8fc"></div><div class="a" style="left:136px;top:333px;width:1px;height:143px;background:#8a8a8a"></div><div class="a" style="left:101px;top:476px;width:36px;height:1px;background:#8a8a8a"></div><div class="t" style="left:60px;width:71px;text-align:right;top:335.5px;font-size:12.3px;font-weight:bold;color:#333"><span style="display:inline-block;transform:scaleX(1.1);transform-origin:100% 0">1.0</span></div><div class="t" style="left:60px;width:71px;text-align:right;top:362.8px;font-size:12.3px;font-weight:normal;color:#333"><span style="display:inline-block;transform:scaleX(1.1);transform-origin:100% 0">0.5</span></div><div class="t" style="left:60px;width:71px;text-align:right;top:398.5px;font-size:12.3px;font-weight:bold;color:#333"><span style="display:inline-block;transform:scaleX(1.1);transform-origin:100% 0">0.0</span></div><div class="t" style="left:60px;width:71px;text-align:right;top:434.2px;font-size:12.3px;font-weight:normal;color:#333"><span style="display:inline-block;transform:scaleX(1.1);transform-origin:100% 0">-0.5</span></div><div class="t" style="left:60px;width:71px;text-align:right;top:462.0px;font-size:12.3px;font-weight:bold;color:#333"><span style="display:inline-block;transform:scaleX(1.1);transform-origin:100% 0">-1.0</span></div><svg style="left:0;top:0" width="140" height="800"><path d="M133 369.5H136M131 404.5H136M133 440.5H136M132 475.5h4" stroke="#333" stroke-width="1"/></svg><div class="a" style="left:4px;top:482px;width:97px;height:295px;background:#000"></div><div class="a" style="left:5px;top:483px;width:95px;height:293px;background:#d6e2f8"></div><div class="a" style="left:5px;top:483px;width:18px;height:18px;background:#cdd8ee;border-right:1px solid #8c8c8c;border-bottom:1px solid #8c8c8c"></div><svg style="left:0;top:482px" width="30" height="20"><path d="M11.5 8L18 14.5M18 8L11.5 14.5" stroke="#222" stroke-width="1.3"/></svg><div class="a" style="left:24px;top:483px;width:76px;height:18px;background:#cdd8ee;border-bottom:1px solid #8c8c8c;border-left:1px solid #fff"></div><div class="t" style="left:26px;top:487px;font-size:11px;color:#3a3a3a;width:62px;overflow:hidden">01 - Around</div><svg style="left:0;top:482px" width="100" height="20"><path d="M87 7.5h10l-5 6Z" fill="#333"/></svg><div class="a" style="left:5px;top:501px;width:48px;height:18px;background:#cdd8ee;border-right:1px solid #8c8c8c;border-bottom:1px solid #8c8c8c"></div><div class="a" style="left:53px;top:501px;width:47px;height:18px;background:#cdd8ee;border-bottom:1px solid #8c8c8c;border-left:1px solid #fff"></div><div class="t" style="left:16.5px;top:505px;font-size:11px;color:#3a3a3a">Mute</div><div class="t" style="left:66px;top:505px;font-size:11px;color:#3a3a3a">Solo</div><svg style="left:0;top:0" width="100" height="800"><path d="M16.5 528.5h4.5M84.5 528.5h5M87 526v5" stroke="#333" stroke-width="1"/><path d="M16 538.5H92" stroke="#8c8c8c" stroke-width="1.6"/><path d="M16.5 535.0v3M24.0 535.0v3M31.5 535.0v3M39.0 535.0v3M46.5 535.0v3M54.0 535.0v3M61.5 535.0v3M69.0 535.0v3M76.5 535.0v3M84.0 535.0v3M91.5 535.0v3M16.5 533.5v2M91.5 533.5v2" stroke="#9a9a9a" stroke-width="1"/><circle cx="53" cy="538.2" r="3.6" fill="#a0a4c0" stroke="#3e4ce8" stroke-width="2.4"/><path d="M16 569H92" stroke="#8c8c8c" stroke-width="1.6"/><path d="M16.5 565.5v3M24.0 565.5v3M31.5 565.5v3M39.0 565.5v3M46.5 565.5v3M54.0 565.5v3M61.5 565.5v3M69.0 565.5v3M76.5 565.5v3M84.0 565.5v3M91.5 565.5v3M16.5 564v2M91.5 564v2" stroke="#9a9a9a" stroke-width="1"/><circle cx="53" cy="568.7" r="3.6" fill="#a0a4c0" stroke="#3e4ce8" stroke-width="2.4"/></svg><div class="t" style="left:16px;top:554px;font-size:10.5px;color:#3a3a3a">L</div><div class="t" style="left:84px;top:554px;font-size:10.5px;color:#3a3a3a">R</div><div class="t" style="left:8px;top:583px;font-size:11.5px;color:#3a3a3a;line-height:12px">Stereo, 44100Hz<br>32-bit float</div><div class="a" style="left:5px;top:758px;width:77px;height:18px;background:#cdd8ee;border-top:1px solid #fff;border-right:1px solid #8c8c8c;border-bottom:1px solid #8c8c8c"></div><svg style="left:0;top:758px" width="100" height="20"><path d="M37.5 13h10.5l-5.25-6Z" fill="#333"/></svg><div class="a" style="left:101px;top:483px;width:35px;height:293px;background:#d6e2f8"></div><div class="a" style="left:136px;top:483px;width:1px;height:293px;background:#8a8a8a"></div><div class="a" style="left:101px;top:483px;width:35px;height:143px;background:#d6e2f8"></div><div class="a" style="left:136px;top:483px;width:1px;height:143px;background:#8a8a8a"></div><div class="a" style="left:101px;top:626px;width:36px;height:1px;background:#8a8a8a"></div><div class="t" style="left:60px;width:71px;text-align:right;top:485.5px;font-size:12.3px;font-weight:bold;color:#333"><span style="display:inline-block;transform:scaleX(1.1);transform-origin:100% 0">1.0</span></div><div class="t" style="left:60px;width:71px;text-align:right;top:512.8px;font-size:12.3px;font-weight:normal;color:#333"><span style="display:inline-block;transform:scaleX(1.1);transform-origin:100% 0">0.5</span></div><div class="t" style="left:60px;width:71px;text-align:right;top:548.5px;font-size:12.3px;font-weight:bold;color:#333"><span style="display:inline-block;transform:scaleX(1.1);transform-origin:100% 0">0.0</span></div><div class="t" style="left:60px;width:71px;text-align:right;top:584.2px;font-size:12.3px;font-weight:normal;color:#333"><span style="display:inline-block;transform:scaleX(1.1);transform-origin:100% 0">-0.5</span></div><div class="t" style="left:60px;width:71px;text-align:right;top:612.0px;font-size:12.3px;font-weight:bold;color:#333"><span style="display:inline-block;transform:scaleX(1.1);transform-origin:100% 0">-1.0</span></div><svg style="left:0;top:0" width="140" height="800"><path d="M133 519.5H136M131 554.5H136M133 590.5H136M132 625.5h4" stroke="#333" stroke-width="1"/></svg><div class="a" style="left:101px;top:633px;width:35px;height:143px;background:#d6e2f8"></div><div class="a" style="left:136px;top:633px;width:1px;height:143px;background:#8a8a8a"></div><div class="a" style="left:101px;top:776px;width:36px;height:1px;background:#8a8a8a"></div><div class="t" style="left:60px;width:71px;text-align:right;top:635.5px;font-size:12.3px;font-weight:bold;color:#333"><span style="display:inline-block;transform:scaleX(1.1);transform-origin:100% 0">1.0</span></div><div class="t" style="left:60px;width:71px;text-align:right;top:662.8px;font-size:12.3px;font-weight:normal;color:#333"><span style="display:inline-block;transform:scaleX(1.1);transform-origin:100% 0">0.5</span></div><div class="t" style="left:60px;width:71px;text-align:right;top:698.5px;font-size:12.3px;font-weight:bold;color:#333"><span style="display:inline-block;transform:scaleX(1.1);transform-origin:100% 0">0.0</span></div><div class="t" style="left:60px;width:71px;text-align:right;top:734.2px;font-size:12.3px;font-weight:normal;color:#333"><span style="display:inline-block;transform:scaleX(1.1);transform-origin:100% 0">-0.5</span></div><div class="t" style="left:60px;width:71px;text-align:right;top:762.0px;font-size:12.3px;font-weight:bold;color:#333"><span style="display:inline-block;transform:scaleX(1.1);transform-origin:100% 0">-1.0</span></div><svg style="left:0;top:0" width="140" height="800"><path d="M133 669.5H136M131 704.5H136M133 740.5H136M132 775.5h4" stroke="#333" stroke-width="1"/></svg><div class="a" style="left:137px;top:182px;width:2419px;height:146px;background:#000"></div><div class="a" style="left:137px;top:183px;width:2417px;height:143px;background:#c2c2c2"></div><div class="a" style="left:137px;top:332px;width:2419px;height:146px;background:#000"></div><div class="a" style="left:137px;top:333px;width:2417px;height:143px;background:#c2c2c2"></div><div class="a" style="left:137px;top:482px;width:2419px;height:146px;background:#000"></div><div class="a" style="left:137px;top:483px;width:2417px;height:143px;background:#c2c2c2"></div><div class="a" style="left:137px;top:632px;width:2419px;height:146px;background:#000"></div><div class="a" style="left:137px;top:633px;width:2417px;height:143px;background:#c2c2c2"></div><div class="a" style="left:4px;top:476px;width:2552px;height:2px;background:#000"></div><div class="a" style="left:4px;top:776px;width:2552px;height:2px;background:#000"></div><svg style="left:0;top:0" width="200" height="800"><path d="M137.5 483V776" stroke="#1a0000" stroke-width="1"/></svg><svg style="left:0;top:0" width="2560" height="782" shape-rendering="crispEdges"><rect x="2545" y="183" width="9" height="143" fill="#d9d9d9"/><rect x="2544" y="183" width="1" height="143" fill="#a0a0a0"/><rect x="2545" y="333" width="9" height="143" fill="#d9d9d9"/><rect x="2544" y="333" width="1" height="143" fill="#a0a0a0"/><rect x="2491" y="483" width="63" height="143" fill="#d9d9d9"/><rect x="2490" y="483" width="1" height="143" fill="#a0a0a0"/><rect x="2491" y="633" width="63" height="143" fill="#d9d9d9"/><rect x="2490" y="633" width="1" height="143" fill="#a0a0a0"/><path d="M137.5 254v1m1 -1v1m1 -1v1m1 -1v1m1 -1v1m1 -1v1m1 -1v1m1 -1v1m1 -1v1m1 -1v1m1 -1v1m1 -1v1m1 -1v1m1 -1v1m1 -1v1m1 -1v1m1 -1v1m1 -1v1m1 -1v1m1 -1v1m1 -1v1m1 -1v1m1 -1v1m1 -1v1m1 -1v1m1 -1v1m1 -1v1m1 -1v1m1 -2v3m1 -2v1m1 -1v1m1 -1v1m1 -1v1m1 -1v1m1 -1v1m1 -1v1m1 -1v1m1 -1v1m1 -1v1m1 -1v1m1 -2v3m1 -2v1m1 -1v1m1 -1v1m1 -1v1m1 -1v1m1 -1v1m1 -1v1m1 -1v1m1 -1v1m1 -1v1m1 -1v1m1 -1v1m1 -2v3m1 -2v1m1 -1v1m1 -1v1m1 -1v1m1 -24v60m1 -61v46m1 -39v34m1 -31v28m1 -29v41m1 -38v32m1 -34v26m1 -34v38m1 -30v37m1 -32v26m1 -29v26m1 -30v31m1 -28v42m1 -42v38m1 -39v28m1 -31v28m1 -31v35m1 -28v30m1 -30v26m1 -23v28m1 -35v34m1 -34v37m1 -37v33m1 -35v30m1 -36v44m1 -37v39m1 -33v38m1 -49v46m1 -43v37m1 -42v44m1 -38v39m1 -44v48m1 -41v32m1 -37v38m1 -37v43m1 -35v39m1 -48v50m1 -43v42m1 -62v59m1 -34v37m1 -45v35m1 -43v59m1 -50v43m1 -36v23m1 -24v31m1 -39v38m1 -54v52m1 -33v37m1 -56v50m1 -29v32m1 -37v30m1 -27v32m1 -30v29m1 -30v36m1 -42v41m1 -36v34m1 -34v37m1 -38v37m1 -35v30m1 -31v31m1 -45v54m1 -36v29m1 -33v26m1 -37v44m1 -28v36m1 -41v46m1 -47v34m1 -33v38m1 -43v53m1 -51v33m1 -23v21m1 -30v37m1 -30v27m1 -30v31m1 -35v42m1 -49v44m1 -40v38m1 -34v27m1 -32v48m1 -41v35m1 -40v41m1 -57v70m1 -53v73m1 -77v66m1 -86v66m1 -50v53m1 -47v41m1 -42v43m1 -53v53m1 -34v43m1 -47v45m1 -72v89m1 -68v55m1 -67v59m1 -46v46m1 -47v54m1 -57v46m1 -49v52m1 -52v48m1 -49v61m1 -68v64m1 -48v48m1 -47v54m1 -60v53m1 -48v70m1 -93v90m1 -90v69m1 -49v59m1 -61v49m1 -38v39m1 -47v47m1 -45v46m1 -46v42m1 -47v49m1 -51v69m1 -69v67m1 -70v46m1 -56v64m1 -48v49m1 -65v78m1 -59v56m1 -54v50m1 -54v56m1 -59v51m1 -57v84m1 -78v52m1 -47v56m1 -62v49m1 -60v79m1 -66v51m1 -65v63m1 -44v43m1 -66v73m1 -55v48m1 -52v50m1 -57v65m1 -61v67m1 -63v54m1 -68v74m1 -53v48m1 -50v61m1 -99v77m1 -48v64m1 -61v56m1 -58v50m1 -50v55m1 -47v49m1 -46v48m1 -69v73m1 -60v58m1 -51v53m1 -92v92m1 -53v47m1 -56v63m1 -59v50m1 -63v63m1 -53v58m1 -42v42m1 -65v55m1 -53v62m1 -45v49m1 -72v62m1 -47v61m1 -57v48m1 -59v54m1 -42v60m1 -95v96m1 -64v58m1 -64v57m1 -64v66m1 -55v66m1 -72v58m1 -67v59m1 -48v56m1 -49v52m1 -50v51m1 -50v48m1 -47v51m1 -52v43m1 -54v57m1 -52v56m1 -56v61m1 -69v81m1 -70v44m1 -56v58m1 -66v65m1 -38v81m1 -113v68m1 -49v54m1 -44v51m1 -46v41m1 -46v56m1 -63v64m1 -73v59m1 -74v93m1 -62v39m1 -36v44m1 -50v59m1 -58v51m1 -54v59m1 -58v57m1 -62v55m1 -52v59m1 -78v78m1 -60v65m1 -94v84m1 -47v46m1 -52v55m1 -58v55m1 -55v45m1 -57v65m1 -48v44m1 -57v61m1 -50v47m1 -60v77m1 -67v55m1 -73v64m1 -39v54m1 -86v83m1 -63v56m1 -61v70m1 -53v41m1 -49v63m1 -61v48m1 -43v74m1 -92v68m1 -73v99m1 -76v56m1 -68v60m1 -56v44m1 -43v52m1 -46v42m1 -46v55m1 -50v56m1 -73v74m1 -66v58m1 -47v55m1 -58v51m1 -65v69m1 -55v55m1 -61v50m1 -80v89m1 -61v52m1 -50v62m1 -88v85m1 -70v62m1 -45v61m1 -66v55m1 -56v63m1 -57v47m1 -55v53m1 -45v38m1 -58v69m1 -54v56m1 -55v52m1 -58v74m1 -80v62m1 -45v79m1 -104v74m1 -51v50m1 -55v48m1 -56v63m1 -55v53m1 -48v48m1 -57v53m1 -40v73m1 -85v61m1 -64v58m1 -49v54m1 -52v49m1 -46v36m1 -35v51m1 -55v39m1 -43v53m1 -52v61m1 -72v64m1 -73v89m1 -65v50m1 -48v70m1 -71v51m1 -61v62m1 -52v48m1 -52v47m1 -46v60m1 -62v45m1 -49v56m1 -41v67m1 -86v59m1 -81v85m1 -62v57m1 -50v50m1 -49v54m1 -72v63m1 -62v76m1 -75v68m1 -58v67m1 -57v55m1 -48v52m1 -68v53m1 -50v53m1 -47v36m1 -38v62m1 -84v77m1 -59v88m1 -121v88m1 -51v54m1 -54v39m1 -46v55m1 -82v84m1 -58v57m1 -51v57m1 -64v76m1 -80v60m1 -62v82m1 -73v91m1 -94v60m1 -60v56m1 -53v46m1 -40v62m1 -56v49m1 -46v55m1 -65v61m1 -57v45m1 -66v63m1 -45v52m1 -54v52m1 -55v54m1 -65v67m1 -59v54m1 -43v61m1 -75v55m1 -42v43m1 -68v67m1 -49v55m1 -51v70m1 -73v62m1 -57v49m1 -66v69m1 -60v51m1 -50v50m1 -66v60m1 -35v43m1 -51v87m1 -83v57m1 -70v78m1 -81v82m1 -71v66m1 -59v52m1 -69v63m1 -52v56m1 -57v52m1 -54v51m1 -43v51m1 -49v46m1 -52v59m1 -63v54m1 -62v59m1 -49v50m1 -46v67m1 -70v50m1 -41v36m1 -43v55m1 -51v46m1 -37v42m1 -51v36m1 -42v52m1 -59v65m1 -52v66m1 -69v49m1 -47v46m1 -81v80m1 -78v88m1 -74v66m1 -66v70m1 -62v58m1 -73v87m1 -68v53m1 -63v57m1 -43v49m1 -82v100m1 -66v66m1 -84v78m1 -57v74m1 -87v79m1 -73v56m1 -54v57m1 -64v59m1 -55v60m1 -60v81m1 -79v57m1 -60v65m1 -63v90m1 -121v87m1 -53v58m1 -58v60m1 -57v73m1 -72v52m1 -63v58m1 -46v54m1 -55v48m1 -76v76m1 -51v82m1 -83v87m1 -85v40m1 -38v51m1 -57v57m1 -52v69m1 -70v51m1 -43v43m1 -53v48m1 -49v81m1 -77v42m1 -48v51m1 -59v63m1 -63v67m1 -58v53m1 -49v51m1 -49v56m1 -58v57m1 -60v49m1 -46v39m1 -40v58m1 -52v72m1 -77v53m1 -49v41m1 -54v68m1 -74v60m1 -38v39m1 -43v52m1 -62v63m1 -63v62m1 -61v61m1 -49v55m1 -59v47m1 -47v40m1 -34v44m1 -55v49m1 -45v51m1 -67v56m1 -35v59m1 -70v48m1 -63v98m1 -76v42m1 -62v67m1 -53v54m1 -53v53m1 -50v39m1 -43v50m1 -37v33m1 -74v82m1 -49v47m1 -39v68m1 -68v70m1 -76v46m1 -44v81m1 -76v34m1 -47v85m1 -82v53m1 -61v51m1 -44v46m1 -52v56m1 -60v68m1 -54v44m1 -65v64m1 -35v42m1 -43v43m1 -50v52m1 -63v58m1 -47v79m1 -104v66m1 -36v35m1 -58v63m1 -48v45m1 -49v59m1 -75v82m1 -69v69m1 -64v52m1 -42v59m1 -74v54m1 -60v68m1 -46v43m1 -55v64m1 -91v76m1 -59v75m1 -72v56m1 -49v64m1 -87v84m1 -62v53m1 -45v47m1 -55v60m1 -53v43m1 -37v49m1 -69v62m1 -61v77m1 -70v56m1 -60v92m1 -86v55m1 -58v54m1 -69v66m1 -45v57m1 -64v56m1 -55v61m1 -63v67m1 -58v37m1 -37v45m1 -61v59m1 -77v82m1 -51v44m1 -65v69m1 -44v52m1 -54v37m1 -62v69m1 -43v48m1 -55v59m1 -70v63m1 -47v49m1 -61v74m1 -57v52m1 -68v53m1 -42v57m1 -63v82m1 -82v54m1 -61v70m1 -66v61m1 -60v63m1 -49v59m1 -65v51m1 -49v57m1 -64v67m1 -79v68m1 -52v58m1 -58v54m1 -47v39m1 -30v15m1 -14v16m1 -15v14m1 -10v5m1 -5v5m1 -5v5m1 -25v50m1 -54v57m1 -61v51m1 -40v46m1 -41v35m1 -42v52m1 -53v45m1 -56v55m1 -51v52m1 -44v54m1 -46v49m1 -60v45m1 -45v47m1 -47v57m1 -58v40m1 -45v53m1 -48v52m1 -46v43m1 -52v67m1 -65v41m1 -45v53m1 -47v49m1 -58v65m1 -63v57m1 -47v41m1 -63v67m1 -49v79m1 -91v63m1 -47v58m1 -67v54m1 -39v52m1 -76v56m1 -47v53m1 -61v70m1 -53v57m1 -84v73m1 -51v52m1 -56v45m1 -60v87m1 -79v71m1 -65v60m1 -59v61m1 -86v88m1 -54v50m1 -49v44m1 -48v53m1 -57v58m1 -53v45m1 -55v86m1 -87v73m1 -64v51m1 -57v60m1 -49v43m1 -51v57m1 -57v44m1 -72v96m1 -81v68m1 -49v48m1 -46v45m1 -51v57m1 -86v90m1 -56v52m1 -71v64m1 -46v44m1 -43v60m1 -75v63m1 -59v53m1 -44v40m1 -44v48m1 -56v61m1 -43v40m1 -53v50m1 -41v44m1 -47v69m1 -69v71m1 -73v55m1 -46v52m1 -55v44m1 -64v59m1 -38v42m1 -44v68m1 -96v102m1 -93v88m1 -66v68m1 -89v74m1 -60v55m1 -56v55m1 -53v60m1 -55v44m1 -42v57m1 -69v53m1 -56v64m1 -55v42m1 -33v30m1 -30v30m1 -31v31m1 -27v23m1 -23v27m1 -27v23m1 -22v23m1 -24v24m1 -28v28m1 -26v25m1 -47v60m1 -53v65m1 -60v39m1 -43v48m1 -40v48m1 -81v86m1 -59v64m1 -67v67m1 -58v44m1 -47v37m1 -38v50m1 -58v55m1 -68v82m1 -51v34m1 -46v46m1 -46v53m1 -40v60m1 -69v58m1 -60v44m1 -39v51m1 -58v63m1 -58v64m1 -67v70m1 -83v57m1 -43v48m1 -59v81m1 -77v47m1 -59v59m1 -47v51m1 -70v74m1 -42v36m1 -49v66m1 -66v57m1 -54v65m1 -64v49m1 -59v50m1 -39v49m1 -44v35m1 -45v58m1 -59v61m1 -55v46m1 -56v66m1 -51v52m1 -58v46m1 -56v57m1 -58v70m1 -85v77m1 -62v77m1 -66v80m1 -86v82m1 -66v46m1 -56v65m1 -80v82m1 -67v46m1 -45v52m1 -65v64m1 -50v47m1 -45v62m1 -78v54m1 -44v53m1 -55v50m1 -45v65m1 -72v52m1 -47v51m1 -56v53m1 -46v48m1 -42v45m1 -40v48m1 -50v48m1 -50v35m1 -48v52m1 -47v51m1 -51v47m1 -45v60m1 -63v76m1 -65v34m1 -45v55m1 -47v45m1 -47v52m1 -71v73m1 -54v50m1 -55v45m1 -36v39m1 -57v47m1 -50v66m1 -50v54m1 -56v69m1 -61v38m1 -53v51m1 -66v71m1 -48v51m1 -55v50m1 -52v57m1 -53v77m1 -77v48m1 -46v46m1 -47v43m1 -39v40m1 -43v46m1 -68v64m1 -36v62m1 -60v49m1 -58v43m1 -75v86m1 -50v48m1 -48v62m1 -91v73m1 -40v52m1 -74v65m1 -53v48m1 -41v38m1 -42v46m1 -54v83m1 -73v68m1 -67v52m1 -48v38m1 -45v49m1 -50v54m1 -65v68m1 -52v39m1 -46v67m1 -62v68m1 -74v46m1 -42v45m1 -45v65m1 -62v45m1 -47v45m1 -50v58m1 -53v39m1 -36v41m1 -50v56m1 -73v66m1 -45v44m1 -34v40m1 -50v43m1 -76v77m1 -45v44m1 -46v46m1 -50v60m1 -61v54m1 -51v67m1 -60v51m1 -63v87m1 -85v58m1 -70v73m1 -51v44m1 -44v66m1 -65v34m1 -37v48m1 -50v57m1 -74v66m1 -48v55m1 -44v33m1 -59v64m1 -63v61m1 -43v64m1 -70v54m1 -75v73m1 -64v60m1 -42v45m1 -55v61m1 -51v49m1 -44v37m1 -65v79m1 -59v39m1 -52v87m1 -79v44m1 -41v65m1 -59v65m1 -66v43m1 -41v37m1 -48v49m1 -40v51m1 -66v64m1 -69v68m1 -50v56m1 -56v78m1 -79v41m1 -46v62m1 -63v76m1 -67v41m1 -57v59m1 -61v79m1 -67v65m1 -63v48m1 -61v68m1 -80v69m1 -45v44m1 -39v53m1 -53v47m1 -46v34m1 -32v49m1 -54v39m1 -59v70m1 -48v43m1 -50v72m1 -73v66m1 -77v81m1 -67v46m1 -42v47m1 -72v82m1 -53v43m1 -52v56m1 -82v103m1 -88v90m1 -71v41m1 -54v53m1 -44v42m1 -44v56m1 -70v86m1 -68v57m1 -53v36m1 -43v40m1 -46v57m1 -47v41m1 -50v55m1 -52v49m1 -48v49m1 -44v36m1 -42v53m1 -67v73m1 -74v66m1 -50v49m1 -56v59m1 -52v40m1 -37v53m1 -54v45m1 -37v41m1 -55v68m1 -62v47m1 -46v46m1 -47v47m1 -47v50m1 -63v61m1 -60v56m1 -35v53m1 -54v33m1 -45v62m1 -55v57m1 -62v45m1 -36v39m1 -43v65m1 -76v66m1 -63v51m1 -50v47m1 -45v54m1 -56v49m1 -54v51m1 -44v50m1 -42v38m1 -74v97m1 -80v62m1 -63v89m1 -79v42m1 -41v45m1 -47v67m1 -75v63m1 -68v75m1 -59v59m1 -58v38m1 -44v58m1 -69v89m1 -85v71m1 -73v63m1 -54v57m1 -50v57m1 -63v65m1 -66v52m1 -45v51m1 -48v44m1 -55v61m1 -59v56m1 -61v63m1 -59v54m1 -51v66m1 -57v46m1 -67v73m1 -54v36m1 -39v46m1 -66v76m1 -67v60m1 -52v60m1 -59v52m1 -51v51m1 -47v34m1 -37v48m1 -58v57m1 -52v60m1 -52v50m1 -59v53m1 -46v45m1 -52v53m1 -54v56m1 -80v87m1 -72v59m1 -54v85m1 -85v52m1 -41v60m1 -66v51m1 -61v73m1 -61v50m1 -47v50m1 -53v52m1 -71v63m1 -42v45m1 -47v56m1 -67v87m1 -77v46m1 -49v49m1 -50v47m1 -51v63m1 -56v64m1 -64v50m1 -41v42m1 -40v45m1 -56v58m1 -51v62m1 -60v43m1 -56v56m1 -50v58m1 -60v60m1 -48v56m1 -65v48m1 -57v65m1 -80v75m1 -48v62m1 -70v52m1 -51v78m1 -69v59m1 -75v77m1 -54v40m1 -54v63m1 -59v69m1 -73v59m1 -63v60m1 -75v62m1 -33v43m1 -50v53m1 -52v57m1 -59v69m1 -79v62m1 -48v43m1 -50v50m1 -53v56m1 -50v48m1 -40v41m1 -51v62m1 -60v71m1 -68v57m1 -60v60m1 -80v68m1 -48v51m1 -50v45m1 -60v60m1 -56v55m1 -41v43m1 -41v56m1 -55v40m1 -40v39m1 -72v85m1 -80v81m1 -65v70m1 -58v43m1 -48v44m1 -35v41m1 -48v46m1 -45v50m1 -54v41m1 -39v59m1 -70v66m1 -58v56m1 -52v42m1 -52v58m1 -60v84m1 -98v71m1 -64v64m1 -55v66m1 -57v44m1 -51v50m1 -41v40m1 -32v32m1 -55v68m1 -58v42m1 -43v54m1 -56v80m1 -71v44m1 -46v70m1 -70v59m1 -53v32m1 -40v43m1 -53v68m1 -63v43m1 -50v72m1 -59v49m1 -53v49m1 -48v53m1 -60v58m1 -66v76m1 -68v56m1 -67v63m1 -43v62m1 -79v67m1 -52v49m1 -56v80m1 -69v42m1 -45v49m1 -57v65m1 -57v63m1 -75v52m1 -44v57m1 -60v81m1 -81v49m1 -38v49m1 -56v49m1 -58v58m1 -41v43m1 -45v42m1 -44v46m1 -39v46m1 -58v50m1 -54v55m1 -48v62m1 -74v60m1 -47v49m1 -51v46m1 -32v52m1 -56v48m1 -53v45m1 -61v52m1 -35v50m1 -49v33m1 -34v35m1 -48v64m1 -65v72m1 -73v59m1 -47v43m1 -39v40m1 -36v56m1 -55v48m1 -53v42m1 -54v54m1 -50v53m1 -47v36m1 -49v56m1 -43v43m1 -56v59m1 -55v51m1 -38v52m1 -38v7m1 -7v7m1 -7v7m1 -7v7m1 -33v55m1 -55v58m1 -72v73m1 -50v38m1 -41v42m1 -68v96m1 -98v79m1 -59v60m1 -65v63m1 -48v43m1 -36v37m1 -47v50m1 -46v52m1 -76v77m1 -54v44m1 -52v50m1 -45v42m1 -37v53m1 -77v70m1 -46v44m1 -53v65m1 -72v62m1 -52v38m1 -50v54m1 -34v52m1 -61v46m1 -46v55m1 -44v55m1 -71v80m1 -70v49m1 -65v59m1 -37v38m1 -52v55m1 -44v38m1 -41v59m1 -75v56m1 -43v53m1 -55v61m1 -58v49m1 -44v61m1 -72v58m1 -66v62m1 -46v49m1 -51v46m1 -47v43m1 -50v69m1 -56v39m1 -39v48m1 -45v38m1 -60v66m1 -51v45m1 -55v70m1 -63v45m1 -39v49m1 -52v70m1 -75v57m1 -51v47m1 -56v60m1 -68v75m1 -57v43m1 -72v74m1 -53v54m1 -62v52m1 -52v70m1 -69v59m1 -44v51m1 -50v35m1 -38v51m1 -54v74m1 -72v51m1 -61v57m1 -41v46m1 -60v64m1 -55v47m1 -54v52m1 -43v47m1 -53v50m1 -60v84m1 -82v55m1 -44v48m1 -58v54m1 -46v44m1 -51v53m1 -67v66m1 -36v46m1 -71v62m1 -67v82m1 -85v99m1 -70v40m1 -48v50m1 -48v54m1 -50v51m1 -52v58m1 -63v48m1 -49v52m1 -49v50m1 -59v61m1 -47v55m1 -60v54m1 -48v47m1 -66v68m1 -44v42m1 -53v56m1 -54v50m1 -59v59m1 -42v40m1 -63v63m1 -50v60m1 -50v67m1 -77v52m1 -55v60m1 -65v54m1 -46v46m1 -44v52m1 -48v46m1 -51v50m1 -45v59m1 -67v50m1 -47v49m1 -50v55m1 -73v70m1 -64v70m1 -51v43m1 -52v56m1 -46v38m1 -55v77m1 -80v63m1 -51v51m1 -47v43m1 -64v89m1 -80v50m1 -43v43m1 -45v59m1 -57v53m1 -69v67m1 -55v48m1 -76v95m1 -92v92m1 -67v65m1 -74v69m1 -53v55m1 -76v81m1 -75v62m1 -51v73m1 -70v49m1 -51v61m1 -57v75m1 -75v54m1 -63v59m1 -50v46m1 -80v88m1 -64v63m1 -57v65m1 -70v63m1 -68v74m1 -64v85m1 -91v50m1 -63v85m1 -73v57m1 -52v54m1 -52v54m1 -46v84m1 -102v62m1 -47v73m1 -72v50m1 -56v48m1 -50v51m1 -56v69m1 -84v78m1 -64v56m1 -57v58m1 -52v49m1 -51v62m1 -66v84m1 -73v72m1 -82v63m1 -62v54m1 -41v47m1 -58v61m1 -54v48m1 -50v49m1 -41v50m1 -58v56m1 -57v55m1 -93v92m1 -43v42m1 -45v67m1 -90v83m1 -99v90m1 -61v95m1 -87v46m1 -44v59m1 -68v76m1 -92v80m1 -79v72m1 -62v59m1 -57v79m1 -75v81m1 -80v73m1 -78v73m1 -70v56m1 -57v68m1 -63v63m1 -79v105m1 -87v80m1 -92v75m1 -104v110m1 -62v55m1 -69v68m1 -76v71m1 -56v53m1 -56v59m1 -58v51m1 -81v81m1 -50v49m1 -54v74m1 -86v71m1 -51v54m1 -60v62m1 -56v37m1 -41v46m1 -83v92m1 -57v67m1 -70v63m1 -68v60m1 -45v45m1 -60v60m1 -49v53m1 -73v72m1 -57v70m1 -75v91m1 -83v53m1 -63v74m1 -104v99m1 -72v74m1 -69v52m1 -45v56m1 -66v58m1 -53v55m1 -57v55m1 -52v63m1 -75v72m1 -76v71m1 -55v81m1 -99v86m1 -88v98m1 -87v74m1 -77v71m1 -47v45m1 -53v63m1 -61v54m1 -84v87m1 -72v70m1 -61v85m1 -97v81m1 -73v68m1 -90v90m1 -70v66m1 -57v56m1 -46v43m1 -66v83m1 -104v89m1 -68v66m1 -59v64m1 -70v68m1 -72v78m1 -76v77m1 -66v91m1 -103v86m1 -70v64m1 -66v74m1 -81v63m1 -50v53m1 -57v66m1 -68v58m1 -57v73m1 -71v50m1 -75v75m1 -47v69m1 -80v74m1 -95v73m1 -51v54m1 -45v53m1 -56v58m1 -55v67m1 -79v52m1 -41v62m1 -67v59m1 -69v70m1 -66v78m1 -72v57m1 -56v71m1 -60v37m1 -56v75m1 -66v67m1 -70v59m1 -55v60m1 -94v104m1 -80v57m1 -52v89m1 -95v77m1 -78v78m1 -67v66m1 -64v65m1 -57v50m1 -58v90m1 -96v75m1 -70v44m1 -79v102m1 -85v72m1 -48v56m1 -63v56m1 -70v66m1 -50v43m1 -49v97m1 -120v83m1 -67v102m1 -96v70m1 -53v57m1 -71v66m1 -61v53m1 -46v57m1 -62v69m1 -73v62m1 -72v70m1 -74v67m1 -74v73m1 -52v45m1 -41v61m1 -70v56m1 -40v49m1 -58v58m1 -66v57m1 -66v65m1 -68v84m1 -62v85m1 -92v58m1 -71v60m1 -59v80m1 -74v73m1 -58v52m1 -95v89m1 -56v57m1 -76v87m1 -69v79m1 -100v81m1 -69v70m1 -67v75m1 -68v58m1 -57v67m1 -70v80m1 -68v45m1 -60v60m1 -76v77m1 -66v65m1 -55v56m1 -45v54m1 -55v44m1 -57v61m1 -56v56m1 -52v51m1 -43v45m1 -66v67m1 -48v42m1 -38v45m1 -64v98m1 -95v57m1 -52v43m1 -57v69m1 -56v65m1 -66v47m1 -37v55m1 -87v96m1 -68v51m1 -52v43m1 -80v104m1 -80v59m1 -37v26m1 -23v25m1 -27v25m1 -31v49m1 -66v61m1 -40v42m1 -61v49m1 -44v59m1 -77v65m1 -43v56m1 -50v42m1 -38v38m1 -48v47m1 -49v52m1 -67v72m1 -58v49m1 -46v48m1 -50v58m1 -64v58m1 -54v55m1 -51v63m1 -67v78m1 -79v53m1 -59v80m1 -78v59m1 -41v43m1 -51v60m1 -103v84m1 -49v55m1 -54v71m1 -68v71m1 -94v71m1 -41v61m1 -56v42m1 -52v55m1 -71v81m1 -76v64m1 -87v85m1 -48v60m1 -63v58m1 -53v72m1 -84v74m1 -106v100m1 -65v56m1 -44v46m1 -75v70m1 -46v52m1 -58v51m1 -52v61m1 -61v56m1 -64v75m1 -97v99m1 -65v62m1 -61v53m1 -87v84m1 -41v34m1 -61v67m1 -48v46m1 -46v67m1 -67v58m1 -50v45m1 -58v57m1 -57v60m1 -95v96m1 -50v48m1 -65v55m1 -75v84m1 -66v68m1 -72v89m1 -69v46m1 -70v76m1 -90v89m1 -78v82m1 -60v53m1 -58v64m1 -68v62m1 -48v47m1 -58v58m1 -50v42m1 -52v69m1 -58v58m1 -52v49m1 -92v86m1 -54v77m1 -83v64m1 -49v47m1 -51v48m1 -59v85m1 -73v57m1 -77v73m1 -52v45m1 -78v84m1 -68v54m1 -30v39m1 -64v75m1 -102v101m1 -66v79m1 -99v75m1 -57v55m1 -50v78m1 -88v62m1 -61v67m1 -68v102m1 -96v63m1 -64v59m1 -54v67m1 -63v58m1 -63v54m1 -59v64m1 -51v81m1 -85v51m1 -52v68m1 -69v43m1 -41v82m1 -81v58m1 -52v40m1 -48v59m1 -64v60m1 -54v77m1 -72v43m1 -73v73m1 -68v70m1 -50v46m1 -54v96m1 -101v59m1 -52v74m1 -71v56m1 -48v49m1 -54v48m1 -37v30m1 -49v64m1 -61v59m1 -74v67m1 -53v49m1 -41v60m1 -58v77m1 -79v51m1 -55v57m1 -56v48m1 -58v68m1 -79v80m1 -55v44m1 -38v82m1 -100v67m1 -61v56m1 -57v58m1 -46v45m1 -83v87m1 -71v78m1 -64v72m1 -86v64m1 -92v109m1 -74v61m1 -56v63m1 -60v48m1 -63v76m1 -66v60m1 -57v49m1 -53v67m1 -74v60m1 -55v77m1 -76v68m1 -60v52m1 -61v58m1 -49v67m1 -69v47m1 -70v102m1 -110v77m1 -44v49m1 -56v53m1 -40v69m1 -68v43m1 -68v74m1 -58v54m1 -52v54m1 -70v71m1 -59v53m1 -48v54m1 -76v83m1 -63v53m1 -80v67m1 -53v73m1 -61v54m1 -53v66m1 -83v108m1 -93v56m1 -92v87m1 -61v60m1 -39v31m1 -61v80m1 -76v74m1 -73v76m1 -53v48m1 -54v56m1 -69v65m1 -45v47m1 -58v68m1 -70v54m1 -50v51m1 -54v60m1 -57v70m1 -85v61m1 -45v61m1 -70v53m1 -49v63m1 -58v57m1 -65v65m1 -61v52m1 -44v52m1 -66v75m1 -69v96m1 -105v76m1 -72v66m1 -63v47m1 -44v54m1 -57v72m1 -61v60m1 -73v53m1 -37v45m1 -54v55m1 -54v48m1 -47v48m1 -88v80m1 -50v61m1 -43v41m1 -68v100m1 -80v63m1 -64v43m1 -45v51m1 -51v65m1 -82v80m1 -70v67m1 -85v87m1 -82v78m1 -50v45m1 -51v72m1 -73v58m1 -62v61m1 -57v54m1 -69v62m1 -56v63m1 -75v84m1 -55v69m1 -74v51m1 -61v68m1 -62v44m1 -60v72m1 -57v62m1 -70v84m1 -96v71m1 -64v76m1 -67v64m1 -56v83m1 -88v55m1 -53v65m1 -68v74m1 -74v51m1 -69v69m1 -50v56m1 -69v93m1 -97v68m1 -52v56m1 -50v50m1 -66v72m1 -68v67m1 -59v62m1 -47v25m1 -21v14m1 -10v7m1 -5v3m1 -6v9m1 -14v19m1 -40v66m1 -56v72m1 -77v54m1 -68v70m1 -60v64m1 -67v61m1 -78v83m1 -67v74m1 -68v56m1 -66v66m1 -52v48m1 -63v66m1 -69v75m1 -60v56m1 -61v73m1 -72v59m1 -55v50m1 -59v60m1 -47v47m1 -50v51m1 -79v77m1 -56v56m1 -49v51m1 -50v53m1 -58v54m1 -47v49m1 -70v83m1 -83v71m1 -72v65m1 -65v69m1 -51v60m1 -82v68m1 -38v49m1 -49v42m1 -45v49m1 -56v50m1 -42v61m1 -70v61m1 -45v42m1 -53v84m1 -89v52m1 -41v40m1 -59v78m1 -68v54m1 -61v63m1 -58v57m1 -70v78m1 -85v69m1 -51v61m1 -58v58m1 -44v30m1 -41v63m1 -60v67m1 -68v66m1 -75v65m1 -78v75m1 -87v88m1 -50v45m1 -51v74m1 -91v74m1 -64v78m1 -81v62m1 -61v60m1 -49v44m1 -52v79m1 -72v52m1 -55v61m1 -56v53m1 -68v80m1 -88v80m1 -66v70m1 -66v64m1 -73v75m1 -61v46m1 -48v53m1 -74v72m1 -80v86m1 -58v66m1 -84v64m1 -41v46m1 -59v77m1 -69v57m1 -58v58m1 -66v69m1 -65v64m1 -68v63m1 -57v49m1 -44v69m1 -96v76m1 -48v61m1 -86v66m1 -70v80m1 -56v49m1 -50v59m1 -31v1m1 -1v1m1 -1v1m1 -1v1m1 -1v1m1 -1v1m1 -1v1m1 -1v1m1 -1v1m1 -1v1m1 -31v68m1 -59v38m1 -63v70m1 -64v67m1 -87v81m1 -51v69m1 -68v52m1 -68v81m1 -73v60m1 -55v67m1 -59v58m1 -66v52m1 -42v61m1 -62v56m1 -65v96m1 -99v56m1 -59v64m1 -62v80m1 -67v55m1 -54v65m1 -85v67m1 -72v84m1 -73v62m1 -53v89m1 -100v91m1 -108v84m1 -60v63m1 -78v84m1 -66v62m1 -96v87m1 -46v66m1 -75v56m1 -63v72m1 -51v39m1 -47v47m1 -54v49m1 -52v59m1 -51v53m1 -64v81m1 -73v68m1 -60v52m1 -76v107m1 -84v46m1 -60v64m1 -77v75m1 -49v62m1 -57v65m1 -73v90m1 -83v36m1 -42v70m1 -77v97m1 -106v73m1 -64v59m1 -55v55m1 -65v72m1 -70v65m1 -54v48m1 -63v63m1 -49v52m1 -75v77m1 -68v79m1 -63v49m1 -44v67m1 -88v63m1 -54v55m1 -74v65m1 -46v94m1 -99v89m1 -78v49m1 -46v46m1 -45v57m1 -80v74m1 -67v67m1 -53v61m1 -102v87m1 -52v58m1 -56v51m1 -78v90m1 -64v45m1 -39v57m1 -60v59m1 -58v91m1 -106v64m1 -49v49m1 -64v74m1 -78v87m1 -109v85m1 -44v72m1 -64v39m1 -57v62m1 -57v54m1 -48v48m1 -57v99m1 -85v51m1 -54v59m1 -71v68m1 -75v93m1 -80v63m1 -74v68m1 -67v63m1 -63v60m1 -50v80m1 -74v69m1 -76v50m1 -45v63m1 -75v62m1 -73v76m1 -90v78m1 -58v66m1 -82v91m1 -76v96m1 -101v78m1 -86v92m1 -73v68m1 -72v71m1 -68v86m1 -83v59m1 -46v48m1 -75v75m1 -50v54m1 -61v57m1 -68v66m1 -43v67m1 -77v81m1 -78v53m1 -50v46m1 -75v82m1 -55v49m1 -56v63m1 -98v89m1 -51v57m1 -61v56m1 -60v63m1 -55v70m1 -68v57m1 -75v79m1 -67v53m1 -46v92m1 -106v102m1 -91v76m1 -105v85m1 -62v68m1 -64v56m1 -86v85m1 -54v59m1 -66v64m1 -59v63m1 -78v73m1 -66v79m1 -64v47m1 -58v64m1 -62v63m1 -71v57m1 -64v87m1 -66v54m1 -54v59m1 -73v66m1 -54v57m1 -61v55m1 -52v51m1 -49v56m1 -53v53m1 -73v73m1 -63v58m1 -56v63m1 -58v73m1 -93v78m1 -69v93m1 -86v54m1 -43v80m1 -96v61m1 -64v75m1 -69v60m1 -62v64m1 -74v102m1 -76v45m1 -65v71m1 -61v69m1 -64v58m1 -70v80m1 -72v81m1 -80v49m1 -54v56m1 -48v58m1 -64v62m1 -66v76m1 -69v77m1 -114v96m1 -54v40m1 -35v54m1 -102v97m1 -79v74m1 -58v52m1 -47v60m1 -59v43m1 -47v52m1 -49v55m1 -67v85m1 -72v58m1 -54v61m1 -93v77m1 -54v86m1 -93v63m1 -89v88m1 -41v61m1 -67v50m1 -53v48m1 -51v69m1 -56v38m1 -38v38m1 -46v55m1 -60v73m1 -73v47m1 -56v103m1 -92v56m1 -76v94m1 -66v43m1 -54v64m1 -56v55m1 -59v56m1 -74v67m1 -60v58m1 -72v76m1 -53v53m1 -62v70m1 -70v77m1 -70v62m1 -61v56m1 -60v56m1 -61v63m1 -58v95m1 -107v67m1 -62v73m1 -51v71m1 -117v89m1 -43v41m1 -89v107m1 -79v87m1 -94v68m1 -65v80m1 -70v60m1 -51v47m1 -64v62m1 -57v54m1 -52v61m1 -49v51m1 -69v60m1 -47v69m1 -74v67m1 -99v92m1 -61v55m1 -84v108m1 -75v69m1 -76v75m1 -67v52m1 -50v52m1 -74v84m1 -69v61m1 -62v66m1 -78v76m1 -68v55m1 -49v72m1 -72v79m1 -113v100m1 -69v69m1 -58v48m1 -47v67m1 -68v42m1 -44v48m1 -50v59m1 -78v66m1 -39v34m1 -31v34m1 -36v32m1 -28v27m1 -27v27m1 -29v30m1 -28v28m1 -28v28m1 -33v38m1 -35v35m1 -36v36m1 -34v30m1 -32v34m1 -37v38m1 -34v34m1 -37v32m1 -33v34m1 -29v30m1 -34v38m1 -36v32m1 -31v33m1 -32v33m1 -33v29m1 -32v32m1 -33v32m1 -27v29m1 -31v32m1 -30v28m1 -31v30m1 -30v34m1 -36v36m1 -33v30m1 -31v32m1 -30v34m1 -34v32m1 -35v35m1 -36v38m1 -39v35m1 -32v32m1 -29v31m1 -50v48m1 -48v66m1 -69v77m1 -67v54m1 -56v63m1 -80v62m1 -34v55m1 -69v63m1 -58v60m1 -66v64m1 -71v73m1 -63v58m1 -72v87m1 -70v67m1 -88v87m1 -73v57m1 -71v80m1 -73v71m1 -68v64m1 -53v59m1 -76v92m1 -84v89m1 -79v59m1 -64v48m1 -82v86m1 -58v67m1 -57v44m1 -65v71m1 -57v62m1 -70v76m1 -63v68m1 -74v52m1 -36v41m1 -49v50m1 -67v97m1 -91v78m1 -99v90m1 -92v89m1 -52v39m1 -52v70m1 -67v49m1 -63v64m1 -35v47m1 -61v55m1 -45v80m1 -87v52m1 -65v66m1 -57v56m1 -55v73m1 -66v49m1 -61v62m1 -70v83m1 -60v44m1 -56v67m1 -81v91m1 -87v87m1 -80v62m1 -54v72m1 -79v58m1 -81v91m1 -64v48m1 -55v67m1 -45v40m1 -51v62m1 -70v57m1 -47v65m1 -86v63m1 -39v55m1 -93v125m1 -91v67m1 -106v106m1 -78v79m1 -73v64m1 -88v107m1 -80v47m1 -37v41m1 -58v67m1 -56v54m1 -56v50m1 -57v60m1 -53v42m1 -40v42m1 -37v53m1 -66v66m1 -90v77m1 -58v89m1 -89v73m1 -66v53m1 -61v71m1 -63v47m1 -53v62m1 -47v70m1 -85v75m1 -76v68m1 -77v90m1 -68v57m1 -89v99m1 -78v59m1 -50v53m1 -70v78m1 -59v52m1 -45v49m1 -62v59m1 -48v54m1 -72v82m1 -76v92m1 -88v46m1 -36v39m1 -83v106m1 -89v61m1 -57v63m1 -59v54m1 -60v60m1 -77v86m1 -49v51m1 -61v52m1 -61v66m1 -68v68m1 -53v57m1 -48v42m1 -60v73m1 -90v77m1 -56v60m1 -81v88m1 -57v66m1 -70v56m1 -68v68m1 -74v93m1 -94v80m1 -85v96m1 -81v66m1 -60v69m1 -66v48m1 -53v67m1 -59v41m1 -56v91m1 -108v86m1 -53v47m1 -48v47m1 -45v44m1 -56v60m1 -49v63m1 -66v59m1 -57v56m1 -96v95m1 -49v84m1 -104v60m1 -43v39m1 -65v77m1 -56v55m1 -65v87m1 -109v96m1 -56v45m1 -53v64m1 -65v52m1 -53v58m1 -60v84m1 -84v64m1 -65v59m1 -77v78m1 -56v67m1 -64v66m1 -71v60m1 -61v93m1 -119v84m1 -54v55m1 -59v61m1 -54v85m1 -94v58m1 -61v67m1 -74v74m1 -94v103m1 -71v52m1 -46v56m1 -83v96m1 -78v61m1 -51v64m1 -76v74m1 -72v61m1 -68v64m1 -68v74m1 -63v62m1 -67v62m1 -51v89m1 -105v69m1 -67v68m1 -57v59m1 -48v56m1 -83v79m1 -92v93m1 -69v74" stroke="#3232c8" stroke-width="1" fill="none"/><path d="M195.5 248v13m1 -13v13m1 -13v13m1 -12v11m1 -12v13m1 -13v13m1 -13v13m1 -13v13m1 -14v15m1 -14v13m1 -14v15m1 -12v9m1 -13v17m1 -14v11m1 -12v13m1 -14v15m1 -14v13m1 -13v13m1 -13v13m1 -15v17m1 -14v11m1 -12v13m1 -12v11m1 -15v19m1 -16v13m1 -13v13m1 -11v9m1 -11v13m1 -12v11m1 -13v15m1 -14v13m1 -13v13m1 -13v13m1 -13v13m1 -17v21m1 -17v13m1 -14v15m1 -14v13m1 -13v13m1 -13v13m1 -11v9m1 -11v13m1 -15v17m1 -13v9m1 -11v13m1 -13v13m1 -15v17m1 -16v15m1 -15v15m1 -14v13m1 -17v21m1 -18v15m1 -14v13m1 -11v9m1 -10v11m1 -12v13m1 -13v13m1 -14v15m1 -13v11m1 -12v13m1 -14v15m1 -14v13m1 -13v13m1 -11v9m1 -13v17m1 -16v15m1 -16v17m1 -16v15m1 -13v11m1 -10v9m1 -10v11m1 -15v19m1 -16v13m1 -12v11m1 -11v11m1 -12v13m1 -13v13m1 -14v15m1 -14v13m1 -13v13m1 -14v15m1 -17v19m1 -19v19m1 -16v13m1 -15v17m1 -16v15m1 -18v21m1 -18v15m1 -16v17m1 -17v17m1 -20v23m1 -20v17m1 -15v13m1 -14v15m1 -18v21m1 -19v17m1 -18v19m1 -18v17m1 -20v23m1 -20v17m1 -18v19m1 -18v17m1 -16v15m1 -17v19m1 -18v17m1 -18v19m1 -18v17m1 -17v17m1 -17v17m1 -17v17m1 -18v19m1 -19v19m1 -19v19m1 -19v19m1 -19v19m1 -18v17m1 -16v15m1 -18v21m1 -17v13m1 -17v21m1 -20v19m1 -18v17m1 -18v19m1 -19v19m1 -19v19m1 -22v25m1 -20v15m1 -17v19m1 -21v23m1 -24v25m1 -20v15m1 -18v21m1 -19v17m1 -17v17m1 -17v17m1 -21v25m1 -21v17m1 -17v17m1 -17v17m1 -16v15m1 -17v19m1 -22v25m1 -23v21m1 -22v23m1 -20v17m1 -18v19m1 -18v17m1 -18v19m1 -18v17m1 -18v19m1 -18v17m1 -18v19m1 -16v13m1 -18v23m1 -21v19m1 -19v19m1 -18v17m1 -18v19m1 -20v21m1 -20v19m1 -22v25m1 -21v17m1 -18v19m1 -17v15m1 -16v17m1 -15v13m1 -16v19m1 -19v19m1 -16v13m1 -15v17m1 -20v23m1 -19v15m1 -16v17m1 -18v19m1 -19v19m1 -18v17m1 -17v17m1 -16v15m1 -16v17m1 -18v19m1 -17v15m1 -16v17m1 -18v19m1 -18v17m1 -17v17m1 -16v15m1 -17v19m1 -19v19m1 -15v11m1 -14v17m1 -20v23m1 -21v19m1 -19v19m1 -17v15m1 -16v17m1 -21v25m1 -22v19m1 -20v21m1 -19v17m1 -17v17m1 -21v25m1 -19v13m1 -15v17m1 -19v21m1 -20v19m1 -19v19m1 -18v17m1 -17v17m1 -18v19m1 -18v17m1 -17v17m1 -20v23m1 -18v13m1 -15v17m1 -16v15m1 -16v17m1 -17v17m1 -16v15m1 -16v17m1 -16v15m1 -15v15m1 -15v15m1 -14v13m1 -18v23m1 -20v17m1 -17v17m1 -18v19m1 -18v17m1 -18v19m1 -16v13m1 -14v15m1 -16v17m1 -18v19m1 -20v21m1 -19v17m1 -18v19m1 -15v11m1 -11v11m1 -14v17m1 -20v23m1 -20v17m1 -20v23m1 -18v13m1 -17v21m1 -19v17m1 -17v17m1 -19v21m1 -22v23m1 -17v11m1 -15v19m1 -22v25m1 -25v25m1 -18v11m1 -15v19m1 -17v15m1 -16v17m1 -17v17m1 -17v17m1 -16v15m1 -17v19m1 -21v23m1 -20v17m1 -18v19m1 -18v17m1 -18v19m1 -17v15m1 -19v23m1 -17v11m1 -14v17m1 -17v17m1 -17v17m1 -18v19m1 -22v25m1 -24v23m1 -20v17m1 -14v11m1 -17v23m1 -19v15m1 -16v17m1 -21v25m1 -22v19m1 -18v17m1 -20v23m1 -17v11m1 -19v27m1 -22v17m1 -19v21m1 -22v23m1 -20v17m1 -20v23m1 -21v19m1 -20v21m1 -19v17m1 -16v15m1 -18v21m1 -16v11m1 -16v21m1 -20v19m1 -16v13m1 -19v25m1 -21v17m1 -17v17m1 -18v19m1 -18v17m1 -18v19m1 -19v19m1 -17v15m1 -16v17m1 -17v17m1 -18v19m1 -18v17m1 -17v17m1 -17v17m1 -17v17m1 -17v17m1 -22v27m1 -21v15m1 -16v17m1 -17v17m1 -17v17m1 -17v17m1 -17v17m1 -17v17m1 -18v19m1 -21v23m1 -19v15m1 -16v17m1 -18v19m1 -19v19m1 -19v19m1 -18v17m1 -17v17m1 -21v25m1 -24v23m1 -20v17m1 -18v19m1 -19v19m1 -15v11m1 -16v21m1 -19v17m1 -17v17m1 -17v17m1 -17v17m1 -17v17m1 -18v19m1 -19v19m1 -19v19m1 -18v17m1 -17v17m1 -17v17m1 -17v17m1 -17v17m1 -18v19m1 -16v13m1 -15v17m1 -20v23m1 -20v17m1 -18v19m1 -21v23m1 -20v17m1 -16v15m1 -16v17m1 -18v19m1 -19v19m1 -17v15m1 -16v17m1 -16v15m1 -16v17m1 -17v17m1 -16v15m1 -17v19m1 -18v17m1 -17v17m1 -19v21m1 -19v17m1 -17v17m1 -17v17m1 -17v17m1 -18v19m1 -19v19m1 -16v13m1 -16v19m1 -16v13m1 -16v19m1 -19v19m1 -19v19m1 -18v17m1 -17v17m1 -15v13m1 -16v19m1 -22v25m1 -21v17m1 -18v19m1 -18v17m1 -17v17m1 -18v19m1 -19v19m1 -17v15m1 -16v17m1 -16v15m1 -16v17m1 -18v19m1 -19v19m1 -16v13m1 -16v19m1 -17v15m1 -15v15m1 -17v19m1 -21v23m1 -19v15m1 -16v17m1 -17v17m1 -16v15m1 -16v17m1 -17v17m1 -18v19m1 -19v19m1 -18v17m1 -16v15m1 -16v17m1 -18v19m1 -20v21m1 -19v17m1 -16v15m1 -15v15m1 -16v17m1 -17v17m1 -17v17m1 -18v19m1 -17v15m1 -18v21m1 -19v17m1 -18v19m1 -18v17m1 -19v21m1 -22v23m1 -21v19m1 -18v17m1 -15v13m1 -19v25m1 -20v15m1 -16v17m1 -18v19m1 -17v15m1 -15v15m1 -15v15m1 -18v21m1 -20v19m1 -19v19m1 -18v17m1 -21v25m1 -20v15m1 -15v15m1 -16v17m1 -16v15m1 -16v17m1 -20v23m1 -20v17m1 -18v19m1 -20v21m1 -19v17m1 -17v17m1 -18v19m1 -20v21m1 -19v17m1 -16v15m1 -17v19m1 -19v19m1 -18v17m1 -20v23m1 -20v17m1 -20v23m1 -21v19m1 -21v23m1 -18v13m1 -14v15m1 -17v19m1 -15v11m1 -15v19m1 -22v25m1 -21v17m1 -18v19m1 -16v13m1 -16v19m1 -18v17m1 -16v15m1 -16v17m1 -17v17m1 -17v17m1 -22v27m1 -22v17m1 -17v17m1 -17v17m1 -18v19m1 -19v19m1 -21v23m1 -19v15m1 -20v25m1 -21v17m1 -18v19m1 -19v19m1 -19v19m1 -18v17m1 -18v19m1 -19v19m1 -21v23m1 -20v17m1 -18v19m1 -17v15m1 -15v15m1 -20v25m1 -22v19m1 -19v19m1 -16v13m1 -15v17m1 -17v17m1 -18v19m1 -19v19m1 -19v19m1 -18v17m1 -18v19m1 -20v21m1 -16v11m1 -15v19m1 -18v17m1 -17v17m1 -18v19m1 -18v17m1 -15v13m1 -15v17m1 -18v19m1 -20v21m1 -16v11m1 -10v9m1 -8v7m1 -6v5m1 -4v3m1 -3v3m1 -3v3m1 -10v17m1 -17v17m1 -17v17m1 -17v17m1 -17v17m1 -17v17m1 -17v17m1 -17v17m1 -16v15m1 -18v21m1 -17v13m1 -16v19m1 -18v17m1 -17v17m1 -16v15m1 -20v25m1 -20v15m1 -16v17m1 -17v17m1 -17v17m1 -16v15m1 -17v19m1 -16v13m1 -15v17m1 -18v19m1 -21v23m1 -21v19m1 -19v19m1 -18v17m1 -17v17m1 -17v17m1 -17v17m1 -18v19m1 -22v25m1 -24v23m1 -19v15m1 -13v11m1 -14v17m1 -16v15m1 -16v17m1 -17v17m1 -18v19m1 -20v21m1 -19v17m1 -17v17m1 -17v17m1 -17v17m1 -14v11m1 -15v19m1 -19v19m1 -19v19m1 -19v19m1 -21v23m1 -20v17m1 -16v15m1 -16v17m1 -18v19m1 -21v23m1 -20v17m1 -17v17m1 -18v19m1 -19v19m1 -18v17m1 -14v11m1 -11v11m1 -15v19m1 -17v15m1 -15v15m1 -16v17m1 -20v23m1 -21v19m1 -18v17m1 -17v17m1 -17v17m1 -16v15m1 -15v15m1 -16v17m1 -19v21m1 -20v19m1 -18v17m1 -19v21m1 -20v19m1 -19v19m1 -19v19m1 -20v21m1 -18v15m1 -14v13m1 -12v11m1 -14v17m1 -17v17m1 -15v13m1 -16v19m1 -18v17m1 -16v15m1 -15v15m1 -14v13m1 -16v19m1 -20v21m1 -18v15m1 -15v15m1 -15v15m1 -15v15m1 -15v15m1 -13v11m1 -15v19m1 -18v17m1 -17v17m1 -16v15m1 -16v17m1 -17v17m1 -17v17m1 -17v17m1 -17v17m1 -16v15m1 -16v17m1 -17v17m1 -17v17m1 -17v17m1 -17v17m1 -14v11m1 -13v15m1 -18v21m1 -18v15m1 -15v15m1 -19v23m1 -21v19m1 -15v11m1 -15v19m1 -18v17m1 -16v15m1 -17v19m1 -19v19m1 -17v15m1 -16v17m1 -17v17m1 -17v17m1 -19v21m1 -19v17m1 -20v23m1 -21v19m1 -18v17m1 -17v17m1 -18v19m1 -18v17m1 -16v15m1 -17v19m1 -20v21m1 -19v17m1 -20v23m1 -21v19m1 -17v15m1 -16v17m1 -17v17m1 -18v19m1 -22v25m1 -25v25m1 -22v19m1 -19v19m1 -18v17m1 -17v17m1 -14v11m1 -14v17m1 -17v17m1 -15v13m1 -13v13m1 -15v17m1 -16v15m1 -17v19m1 -17v15m1 -15v15m1 -16v17m1 -18v19m1 -20v21m1 -19v17m1 -17v17m1 -17v17m1 -16v15m1 -15v15m1 -15v15m1 -15v15m1 -16v17m1 -17v17m1 -17v17m1 -17v17m1 -17v17m1 -18v19m1 -17v15m1 -16v17m1 -18v19m1 -20v21m1 -17v13m1 -16v19m1 -18v17m1 -16v15m1 -17v19m1 -15v11m1 -15v19m1 -20v21m1 -19v17m1 -18v19m1 -18v17m1 -18v19m1 -18v17m1 -17v17m1 -20v23m1 -20v17m1 -17v17m1 -16v15m1 -17v19m1 -21v23m1 -23v23m1 -20v17m1 -18v19m1 -20v21m1 -19v17m1 -19v21m1 -22v23m1 -19v15m1 -16v17m1 -17v17m1 -22v27m1 -23v19m1 -19v19m1 -19v19m1 -17v15m1 -17v19m1 -18v17m1 -18v19m1 -17v15m1 -13v11m1 -15v19m1 -16v13m1 -15v17m1 -16v15m1 -17v19m1 -19v19m1 -17v15m1 -16v17m1 -17v17m1 -18v19m1 -16v13m1 -16v19m1 -17v15m1 -16v17m1 -21v25m1 -21v17m1 -20v23m1 -20v17m1 -17v17m1 -16v15m1 -19v23m1 -19v15m1 -17v19m1 -19v19m1 -18v17m1 -22v27m1 -25v23m1 -18v13m1 -16v19m1 -17v15m1 -17v19m1 -18v17m1 -17v17m1 -18v19m1 -15v11m1 -15v19m1 -17v15m1 -17v19m1 -18v17m1 -17v17m1 -16v15m1 -20v25m1 -24v23m1 -18v13m1 -15v17m1 -16v15m1 -16v17m1 -16v15m1 -19v23m1 -20v17m1 -19v21m1 -22v23m1 -19v15m1 -16v17m1 -19v21m1 -20v19m1 -20v21m1 -20v19m1 -17v15m1 -16v17m1 -18v19m1 -15v11m1 -17v23m1 -20v17m1 -15v13m1 -18v23m1 -19v15m1 -17v19m1 -19v19m1 -16v13m1 -18v23m1 -22v21m1 -19v17m1 -17v17m1 -14v11m1 -17v23m1 -21v19m1 -21v23m1 -20v17m1 -17v17m1 -17v17m1 -17v17m1 -18v19m1 -20v21m1 -20v19m1 -18v17m1 -20v23m1 -17v11m1 -15v19m1 -18v17m1 -18v19m1 -18v17m1 -16v15m1 -17v19m1 -17v15m1 -16v17m1 -21v25m1 -21v17m1 -17v17m1 -16v15m1 -17v19m1 -17v15m1 -17v19m1 -18v17m1 -16v15m1 -17v19m1 -21v23m1 -19v15m1 -14v13m1 -15v17m1 -17v17m1 -17v17m1 -17v17m1 -17v17m1 -17v17m1 -16v15m1 -16v17m1 -22v27m1 -21v15m1 -15v15m1 -16v17m1 -17v17m1 -16v15m1 -18v21m1 -17v13m1 -14v15m1 -16v17m1 -20v23m1 -21v19m1 -22v25m1 -21v17m1 -18v19m1 -18v17m1 -19v21m1 -18v15m1 -17v19m1 -19v19m1 -19v19m1 -20v21m1 -23v25m1 -22v19m1 -21v23m1 -20v17m1 -15v13m1 -14v15m1 -16v17m1 -17v17m1 -19v21m1 -23v25m1 -18v11m1 -11v11m1 -13v15m1 -17v19m1 -19v19m1 -19v19m1 -18v17m1 -18v19m1 -19v19m1 -20v21m1 -19v17m1 -17v17m1 -17v17m1 -18v19m1 -19v19m1 -18v17m1 -17v17m1 -17v17m1 -18v19m1 -16v13m1 -16v19m1 -20v21m1 -19v17m1 -16v15m1 -16v17m1 -20v23m1 -21v19m1 -21v23m1 -22v21m1 -21v21m1 -19v17m1 -17v17m1 -17v17m1 -21v25m1 -21v17m1 -20v23m1 -20v17m1 -18v19m1 -16v13m1 -13v13m1 -15v17m1 -16v15m1 -16v17m1 -17v17m1 -17v17m1 -17v17m1 -18v19m1 -18v17m1 -19v21m1 -18v15m1 -16v17m1 -18v19m1 -18v17m1 -18v19m1 -19v19m1 -18v17m1 -20v23m1 -21v19m1 -15v11m1 -15v19m1 -21v23m1 -20v17m1 -17v17m1 -17v17m1 -18v19m1 -19v19m1 -17v15m1 -17v19m1 -17v15m1 -16v17m1 -16v15m1 -16v17m1 -21v25m1 -22v19m1 -22v25m1 -22v19m1 -18v17m1 -17v17m1 -16v15m1 -15v15m1 -15v15m1 -19v23m1 -19v15m1 -16v17m1 -17v17m1 -18v19m1 -17v15m1 -17v19m1 -18v17m1 -22v27m1 -21v15m1 -16v17m1 -18v19m1 -18v17m1 -16v15m1 -14v13m1 -15v17m1 -15v13m1 -15v17m1 -17v17m1 -17v17m1 -17v17m1 -16v15m1 -16v17m1 -19v21m1 -18v15m1 -16v17m1 -19v21m1 -20v19m1 -21v23m1 -21v19m1 -20v21m1 -22v23m1 -20v17m1 -16v15m1 -15v15m1 -20v25m1 -24v23m1 -18v13m1 -16v19m1 -17v15m1 -16v17m1 -17v17m1 -19v21m1 -22v23m1 -23v23m1 -22v21m1 -19v17m1 -17v17m1 -17v17m1 -14v11m1 -15v19m1 -16v13m1 -12v11m1 -14v17m1 -18v19m1 -18v17m1 -19v21m1 -18v15m1 -17v19m1 -18v17m1 -17v17m1 -16v15m1 -14v13m1 -15v17m1 -17v17m1 -17v17m1 -18v19m1 -18v17m1 -20v23m1 -20v17m1 -18v19m1 -18v17m1 -17v17m1 -16v15m1 -18v21m1 -19v17m1 -17v17m1 -18v19m1 -17v15m1 -16v17m1 -16v15m1 -15v15m1 -14v13m1 -16v19m1 -19v19m1 -18v17m1 -17v17m1 -18v19m1 -17v15m1 -13v11m1 -13v15m1 -9v3m1 -3v3m1 -3v3m1 -3v3m1 -13v23m1 -22v21m1 -22v23m1 -21v19m1 -19v19m1 -18v17m1 -16v15m1 -15v15m1 -19v23m1 -20v17m1 -14v11m1 -15v19m1 -19v19m1 -19v19m1 -17v15m1 -16v17m1 -18v19m1 -18v17m1 -16v15m1 -18v21m1 -19v17m1 -17v17m1 -16v15m1 -19v23m1 -21v19m1 -18v17m1 -18v19m1 -18v17m1 -18v19m1 -18v17m1 -17v17m1 -20v23m1 -21v19m1 -19v19m1 -18v17m1 -18v19m1 -19v19m1 -17v15m1 -16v17m1 -17v17m1 -20v23m1 -20v17m1 -19v21m1 -17v13m1 -17v21m1 -18v15m1 -16v17m1 -17v17m1 -17v17m1 -16v15m1 -14v13m1 -15v17m1 -16v15m1 -16v17m1 -17v17m1 -18v19m1 -18v17m1 -16v15m1 -16v17m1 -20v23m1 -20v17m1 -14v11m1 -15v19m1 -16v13m1 -16v19m1 -19v19m1 -19v19m1 -18v17m1 -17v17m1 -18v19m1 -16v13m1 -13v13m1 -15v17m1 -20v23m1 -21v19m1 -19v19m1 -19v19m1 -19v19m1 -20v21m1 -18v15m1 -20v25m1 -21v17m1 -17v17m1 -16v15m1 -16v17m1 -17v17m1 -17v17m1 -17v17m1 -17v17m1 -15v13m1 -15v17m1 -17v17m1 -20v23m1 -21v19m1 -18v17m1 -17v17m1 -17v17m1 -21v25m1 -22v19m1 -17v15m1 -16v17m1 -19v21m1 -19v17m1 -16v15m1 -16v17m1 -17v17m1 -17v17m1 -18v19m1 -18v17m1 -17v17m1 -18v19m1 -15v11m1 -15v19m1 -20v21m1 -20v19m1 -18v17m1 -18v19m1 -18v17m1 -18v19m1 -18v17m1 -17v17m1 -19v21m1 -19v17m1 -21v25m1 -20v15m1 -16v17m1 -17v17m1 -18v19m1 -18v17m1 -17v17m1 -17v17m1 -19v21m1 -18v15m1 -16v17m1 -16v15m1 -16v17m1 -18v19m1 -18v17m1 -17v17m1 -17v17m1 -17v17m1 -17v17m1 -17v17m1 -20v23m1 -24v25m1 -22v19m1 -18v17m1 -18v19m1 -22v25m1 -21v17m1 -17v17m1 -17v17m1 -18v19m1 -19v19m1 -16v13m1 -15v17m1 -15v13m1 -16v19m1 -20v21m1 -19v17m1 -20v23m1 -20v17m1 -21v25m1 -20v15m1 -16v17m1 -17v17m1 -18v19m1 -19v19m1 -18v17m1 -17v17m1 -17v17m1 -17v17m1 -17v17m1 -14v11m1 -15v19m1 -18v17m1 -14v11m1 -14v17m1 -17v17m1 -17v17m1 -17v17m1 -17v17m1 -18v19m1 -18v17m1 -18v19m1 -17v15m1 -17v19m1 -19v19m1 -18v17m1 -15v13m1 -13v13m1 -16v19m1 -18v17m1 -18v19m1 -18v17m1 -21v25m1 -22v19m1 -19v19m1 -19v19m1 -18v17m1 -18v19m1 -19v19m1 -19v19m1 -18v17m1 -22v27m1 -23v19m1 -19v19m1 -19v19m1 -18v17m1 -18v19m1 -18v17m1 -22v27m1 -22v17m1 -18v19m1 -18v17m1 -17v17m1 -15v13m1 -15v17m1 -16v15m1 -17v19m1 -21v23m1 -20v17m1 -16v15m1 -14v13m1 -16v19m1 -18v17m1 -18v19m1 -18v17m1 -15v13m1 -20v27m1 -22v17m1 -20v23m1 -20v17m1 -17v17m1 -18v19m1 -21v23m1 -20v17m1 -18v19m1 -18v17m1 -17v17m1 -18v19m1 -18v17m1 -18v19m1 -18v17m1 -17v17m1 -18v19m1 -18v17m1 -18v19m1 -18v17m1 -16v15m1 -15v15m1 -16v17m1 -18v19m1 -18v17m1 -17v17m1 -20v23m1 -21v19m1 -18v17m1 -18v19m1 -19v19m1 -19v19m1 -21v23m1 -20v17m1 -18v19m1 -21v23m1 -19v15m1 -17v19m1 -20v21m1 -18v15m1 -18v21m1 -18v15m1 -16v17m1 -16v15m1 -14v13m1 -14v15m1 -14v13m1 -13v13m1 -20v27m1 -20v13m1 -14v15m1 -15v15m1 -16v17m1 -20v23m1 -21v19m1 -18v17m1 -18v19m1 -19v19m1 -19v19m1 -18v17m1 -18v19m1 -19v19m1 -18v17m1 -20v23m1 -19v15m1 -16v17m1 -17v17m1 -17v17m1 -19v21m1 -19v17m1 -15v13m1 -16v19m1 -20v21m1 -16v11m1 -14v17m1 -16v15m1 -16v17m1 -20v23m1 -18v13m1 -15v17m1 -15v13m1 -15v17m1 -16v15m1 -17v19m1 -19v19m1 -16v13m1 -16v19m1 -17v15m1 -17v19m1 -21v23m1 -24v25m1 -23v21m1 -20v19m1 -15v11m1 -18v25m1 -21v17m1 -19v21m1 -23v25m1 -21v17m1 -18v19m1 -22v25m1 -21v17m1 -20v23m1 -19v15m1 -17v19m1 -18v17m1 -16v15m1 -17v19m1 -18v17m1 -19v21m1 -16v11m1 -18v25m1 -22v19m1 -18v17m1 -17v17m1 -14v11m1 -15v19m1 -22v25m1 -24v23m1 -22v21m1 -17v13m1 -15v17m1 -18v19m1 -18v17m1 -18v19m1 -19v19m1 -18v17m1 -17v17m1 -17v17m1 -18v19m1 -17v15m1 -21v27m1 -24v21m1 -20v19m1 -15v11m1 -15v19m1 -19v19m1 -17v15m1 -17v19m1 -19v19m1 -19v19m1 -21v23m1 -20v17m1 -19v21m1 -19v17m1 -22v27m1 -23v19m1 -19v19m1 -18v17m1 -15v13m1 -14v15m1 -14v13m1 -15v17m1 -17v17m1 -14v11m1 -13v15m1 -19v23m1 -21v19m1 -22v25m1 -21v17m1 -17v17m1 -17v17m1 -15v13m1 -14v15m1 -17v19m1 -18v17m1 -17v17m1 -18v19m1 -18v17m1 -17v17m1 -17v17m1 -19v21m1 -22v23m1 -21v19m1 -19v19m1 -21v23m1 -23v23m1 -23v23m1 -21v19m1 -18v17m1 -20v23m1 -20v17m1 -17v17m1 -15v13m1 -15v17m1 -17v17m1 -15v13m1 -18v23m1 -20v17m1 -15v13m1 -18v23m1 -20v17m1 -17v17m1 -15v13m1 -16v19m1 -19v19m1 -19v19m1 -18v17m1 -17v17m1 -17v17m1 -16v15m1 -17v19m1 -21v23m1 -21v19m1 -23v27m1 -24v21m1 -19v17m1 -17v17m1 -18v19m1 -18v17m1 -17v17m1 -18v19m1 -18v17m1 -19v21m1 -19v17m1 -19v21m1 -20v19m1 -16v13m1 -15v17m1 -16v15m1 -17v19m1 -18v17m1 -17v17m1 -18v19m1 -17v15m1 -18v21m1 -19v17m1 -17v17m1 -17v17m1 -18v19m1 -17v15m1 -16v17m1 -19v21m1 -19v17m1 -17v17m1 -20v23m1 -18v13m1 -15v17m1 -16v15m1 -13v11m1 -15v19m1 -17v15m1 -19v23m1 -21v19m1 -21v23m1 -17v11m1 -15v19m1 -19v19m1 -18v17m1 -17v17m1 -17v17m1 -19v21m1 -20v19m1 -19v19m1 -18v17m1 -17v17m1 -17v17m1 -17v17m1 -18v19m1 -19v19m1 -18v17m1 -17v17m1 -18v19m1 -18v17m1 -22v27m1 -22v17m1 -22v27m1 -25v23m1 -23v23m1 -18v13m1 -14v15m1 -15v15m1 -19v23m1 -19v15m1 -17v19m1 -18v17m1 -19v21m1 -18v15m1 -16v17m1 -16v15m1 -16v17m1 -17v17m1 -18v19m1 -19v19m1 -17v15m1 -19v23m1 -21v19m1 -18v17m1 -18v19m1 -18v17m1 -17v17m1 -16v15m1 -16v17m1 -17v17m1 -20v23m1 -20v17m1 -19v21m1 -20v19m1 -18v17m1 -18v19m1 -21v23m1 -23v23m1 -20v17m1 -17v17m1 -20v23m1 -20v17m1 -17v17m1 -18v19m1 -18v17m1 -20v23m1 -20v17m1 -18v19m1 -18v17m1 -14v11m1 -14v17m1 -16v15m1 -15v15m1 -16v17m1 -17v17m1 -19v21m1 -21v21m1 -20v19m1 -19v19m1 -18v17m1 -16v15m1 -18v21m1 -19v17m1 -16v15m1 -16v17m1 -16v15m1 -17v19m1 -19v19m1 -16v13m1 -15v17m1 -15v13m1 -18v23m1 -20v17m1 -18v19m1 -19v19m1 -17v15m1 -16v17m1 -18v19m1 -19v19m1 -21v23m1 -21v19m1 -18v17m1 -17v17m1 -17v17m1 -19v21m1 -19v17m1 -19v21m1 -18v15m1 -18v21m1 -20v19m1 -20v21m1 -16v11m1 -14v17m1 -18v19m1 -18v17m1 -18v19m1 -18v17m1 -16v15m1 -16v17m1 -21v25m1 -22v19m1 -17v15m1 -17v19m1 -18v17m1 -17v17m1 -16v15m1 -19v23m1 -21v19m1 -18v17m1 -18v19m1 -20v21m1 -18v15m1 -15v15m1 -16v17m1 -18v19m1 -19v19m1 -17v15m1 -16v17m1 -18v19m1 -19v19m1 -18v17m1 -18v19m1 -18v17m1 -16v15m1 -15v15m1 -14v13m1 -16v19m1 -18v17m1 -17v17m1 -18v19m1 -18v17m1 -17v17m1 -18v19m1 -20v21m1 -19v17m1 -18v19m1 -19v19m1 -23v27m1 -24v21m1 -18v15m1 -15v15m1 -19v23m1 -20v17m1 -17v17m1 -14v11m1 -15v19m1 -19v19m1 -18v17m1 -20v23m1 -19v15m1 -14v13m1 -11v9m1 -7v5m2 -6v7m1 -11v15m1 -16v17m1 -17v17m1 -14v11m1 -15v19m1 -19v19m1 -22v25m1 -22v19m1 -18v17m1 -18v19m1 -19v19m1 -17v15m1 -17v19m1 -17v15m1 -16v17m1 -18v19m1 -18v17m1 -19v21m1 -21v21m1 -19v17m1 -20v23m1 -21v19m1 -19v19m1 -19v19m1 -17v15m1 -17v19m1 -21v23m1 -23v23m1 -19v15m1 -16v17m1 -16v15m1 -16v17m1 -18v19m1 -17v15m1 -15v15m1 -16v17m1 -17v17m1 -16v15m1 -15v15m1 -15v15m1 -15v15m1 -13v11m1 -14v17m1 -17v17m1 -16v15m1 -17v19m1 -19v19m1 -15v11m1 -15v19m1 -16v13m1 -15v17m1 -17v17m1 -21v25m1 -21v17m1 -19v21m1 -19v17m1 -16v15m1 -15v15m1 -16v17m1 -17v17m1 -20v23m1 -23v23m1 -18v13m1 -15v17m1 -18v19m1 -21v23m1 -21v19m1 -17v15m1 -17v19m1 -18v17m1 -18v19m1 -18v17m1 -17v17m1 -17v17m1 -17v17m1 -16v15m1 -17v19m1 -17v15m1 -14v13m1 -15v17m1 -17v17m1 -18v19m1 -19v19m1 -18v17m1 -18v19m1 -18v17m1 -17v17m1 -18v19m1 -18v17m1 -21v25m1 -20v15m1 -16v17m1 -20v23m1 -21v19m1 -18v17m11 -19v21m1 -20v19m1 -18v17m1 -17v17m1 -17v17m1 -18v19m1 -18v17m1 -17v17m1 -17v17m1 -18v19m1 -19v19m1 -22v25m1 -22v19m1 -19v19m1 -18v17m1 -17v17m1 -21v25m1 -22v19m1 -18v17m1 -16v15m1 -16v17m1 -18v19m1 -17v15m1 -17v19m1 -17v15m1 -16v17m1 -17v17m1 -17v17m1 -22v27m1 -23v19m1 -18v17m1 -18v19m1 -18v17m1 -18v19m1 -20v21m1 -19v17m1 -18v19m1 -17v15m1 -17v19m1 -19v19m1 -18v17m1 -17v17m1 -17v17m1 -20v23m1 -23v23m1 -19v15m1 -17v19m1 -16v13m1 -16v19m1 -19v19m1 -17v15m1 -17v19m1 -21v23m1 -18v13m1 -16v19m1 -18v17m1 -20v23m1 -21v19m1 -18v17m1 -16v15m1 -17v19m1 -17v15m1 -17v19m1 -18v17m1 -17v17m1 -16v15m1 -19v23m1 -20v17m1 -16v15m1 -16v17m1 -20v23m1 -21v19m1 -17v15m1 -15v15m1 -17v19m1 -18v17m1 -19v21m1 -19v17m1 -18v19m1 -17v15m1 -17v19m1 -19v19m1 -18v17m1 -19v21m1 -20v19m1 -19v19m1 -21v23m1 -20v17m1 -18v19m1 -19v19m1 -19v19m1 -18v17m1 -17v17m1 -20v23m1 -21v19m1 -21v23m1 -20v17m1 -16v15m1 -17v19m1 -19v19m1 -17v15m1 -16v17m1 -17v17m1 -19v21m1 -20v19m1 -18v17m1 -16v15m1 -16v17m1 -17v17m1 -17v17m1 -18v19m1 -21v23m1 -24v25m1 -22v19m1 -19v19m1 -20v21m1 -19v17m1 -18v19m1 -18v17m1 -15v13m1 -13v13m1 -15v17m1 -20v23m1 -21v19m1 -18v17m1 -16v15m1 -16v17m1 -15v13m1 -16v19m1 -15v11m1 -15v19m1 -19v19m1 -19v19m1 -19v19m1 -20v21m1 -21v21m1 -22v23m1 -21v19m1 -18v17m1 -17v17m1 -17v17m1 -18v19m1 -21v23m1 -23v23m1 -19v15m1 -14v13m1 -17v21m1 -19v17m1 -17v17m1 -17v17m1 -16v15m1 -15v15m1 -15v15m1 -14v13m1 -16v19m1 -18v17m1 -19v21m1 -19v17m1 -19v21m1 -20v19m1 -16v13m1 -15v17m1 -21v25m1 -23v21m1 -20v19m1 -18v17m1 -17v17m1 -16v15m1 -16v17m1 -19v21m1 -19v17m1 -19v21m1 -20v19m1 -19v19m1 -18v17m1 -17v17m1 -15v13m1 -15v17m1 -15v13m1 -16v19m1 -17v15m1 -16v17m1 -17v17m1 -21v25m1 -21v17m1 -17v17m1 -18v19m1 -16v13m1 -14v15m1 -17v19m1 -18v17m1 -16v15m1 -17v19m1 -18v17m1 -20v23m1 -20v17m1 -17v17m1 -17v17m1 -17v17m1 -18v19m1 -18v17m1 -17v17m1 -17v17m1 -16v15m1 -15v15m1 -16v17m1 -16v15m1 -15v15m1 -16v17m1 -18v19m1 -21v23m1 -21v19m1 -20v21m1 -19v17m1 -16v15m1 -17v19m1 -18v17m1 -18v19m1 -18v17m1 -19v21m1 -19v17m1 -17v17m1 -17v17m1 -17v17m1 -15v13m1 -15v17m1 -18v19m1 -19v19m1 -18v17m1 -17v17m1 -15v13m1 -13v13m1 -16v19m1 -22v25m1 -19v13m1 -15v17m1 -16v15m1 -16v17m1 -21v25m1 -20v15m1 -16v17m1 -17v17m1 -15v13m1 -18v23m1 -22v21m1 -19v17m1 -19v21m1 -20v19m1 -18v17m1 -18v19m1 -19v19m1 -19v19m1 -19v19m1 -20v21m1 -20v19m1 -19v19m1 -18v17m1 -17v17m1 -17v17m1 -17v17m1 -17v17m1 -17v17m1 -16v15m1 -16v17m1 -17v17m1 -16v15m1 -17v19m1 -18v17m1 -17v17m1 -18v19m1 -18v17m1 -16v15m1 -14v13m1 -15v17m1 -16v15m1 -16v17m1 -18v19m1 -16v13m1 -14v15m1 -15v15m1 -14v13m1 -14v15m1 -15v15m1 -15v15m1 -14v13m1 -14v15m1 -14v13m1 -16v19m1 -15v11m1 -11v11m1 -16v21m1 -19v17m1 -16v15m1 -14v13m1 -14v15m1 -18v21m1 -16v11m1 -14v17m1 -16v15m1 -15v15m1 -14v13m1 -14v15m1 -15v15m1 -14v13m1 -13v13m1 -15v17m1 -18v19m1 -18v17m1 -19v21m1 -19v17m1 -15v13m1 -15v17m1 -19v21m1 -20v19m1 -19v19m1 -17v15m1 -16v17m1 -18v19m1 -18v17m1 -18v19m1 -21v23m1 -23v23m1 -23v23m1 -20v17m1 -20v23m1 -21v19m1 -20v21m1 -21v21m1 -19v17m1 -18v19m1 -17v15m1 -19v23m1 -23v23m1 -20v17m1 -17v17m1 -16v15m1 -18v21m1 -21v21m1 -24v27m1 -22v17m1 -17v17m1 -17v17m1 -18v19m1 -16v13m1 -18v23m1 -20v17m1 -17v17m1 -18v19m1 -21v23m1 -17v11m1 -13v15m1 -15v15m1 -19v23m1 -20v17m1 -16v15m1 -16v17m1 -21v25m1 -23v21m1 -19v17m1 -16v15m1 -16v17m1 -17v17m1 -15v13m1 -17v21m1 -20v19m1 -17v15m1 -16v17m1 -21v25m1 -19v13m1 -15v17m1 -18v19m1 -23v27m1 -23v19m1 -18v17m1 -18v19m1 -21v23m1 -23v23m1 -21v19m1 -18v17m1 -17v17m1 -14v11m1 -15v19m1 -19v19m1 -19v19m1 -18v17m1 -19v21m1 -19v17m1 -16v15m1 -20v25m1 -21v17m1 -17v17m1 -17v17m1 -16v15m1 -19v23m1 -19v15m1 -15v15m1 -16v17m1 -17v17m1 -17v17m1 -16v15m1 -16v17m1 -17v17m1 -20v23m1 -22v21m1 -17v13m1 -15v17m1 -15v13m1 -16v19m1 -18v17m1 -17v17m1 -18v19m1 -17v15m1 -16v17m1 -17v17m1 -17v17m1 -17v17m1 -18v19m1 -18v17m1 -21v25m1 -19v13m1 -18v23m1 -23v23m1 -17v11m1 -15v19m1 -18v17m1 -17v17m1 -15v13m1 -13v13m1 -18v23m1 -20v17m1 -17v17m1 -17v17m1 -18v19m1 -19v19m1 -18v17m1 -18v19m1 -19v19m1 -18v17m1 -14v11m1 -14v17m1 -16v15m1 -16v17m1 -17v17m1 -16v15m1 -15v15m1 -17v19m1 -18v17m1 -17v17m1 -15v13m1 -12v11m1 -13v15m1 -16v17m1 -18v19m1 -19v19m1 -17v15m1 -14v13m1 -16v19m1 -18v17m1 -16v15m1 -16v17m1 -18v19m1 -18v17m1 -18v19m1 -21v23m1 -20v17m1 -17v17m1 -18v19m1 -17v15m1 -17v19m1 -19v19m1 -19v19m1 -19v19m1 -18v17m1 -18v19m1 -19v19m1 -16v13m1 -15v17m1 -17v17m1 -19v21m1 -22v23m1 -20v17m1 -16v15m1 -17v19m1 -19v19m1 -17v15m1 -16v17m1 -17v17m1 -18v19m1 -17v15m1 -15v15m1 -16v17m1 -17v17m1 -17v17m1 -16v15m1 -16v17m1 -16v15m1 -16v17m1 -18v19m1 -18v17m1 -17v17m1 -18v19m1 -16v13" stroke="#6464dc" stroke-width="1" fill="none"/><path d="M137.5 404v1m1 -1v1m1 -1v1m1 -1v1m1 -1v1m1 -1v1m1 -1v1m1 -1v1m1 -1v1m1 -1v1m1 -1v1m1 -1v1m1 -1v1m1 -2v3m1 -2v1m1 -1v1m1 -1v1m1 -1v1m1 -1v1m1 -1v1m1 -1v1m1 -1v1m1 -1v1m1 -1v1m1 -1v1m1 -1v1m1 -1v1m1 -1v1m1 -1v1m1 -1v1m1 -2v3m1 -2v1m1 -1v1m1 -1v1m1 -1v1m1 -1v1m1 -1v1m1 -1v1m1 -1v1m1 -1v1m1 -2v3m1 -2v1m1 -1v1m1 -1v1m1 -1v1m1 -2v3m1 -2v1m1 -1v1m1 -1v1m1 -1v1m1 -1v1m1 -1v1m1 -1v1m1 -1v1m1 -1v1m1 -1v1m1 -1v1m1 -1v1m1 -30v62m1 -48v31m1 -33v47m1 -47v44m1 -52v42m1 -32v32m1 -27v33m1 -40v32m1 -49v49m1 -40v42m1 -43v39m1 -40v55m1 -39v28m1 -26v26m1 -32v44m1 -58v46m1 -54v52m1 -32v32m1 -35v38m1 -37v33m1 -29v32m1 -31v40m1 -36v27m1 -31v32m1 -29v26m1 -28v28m1 -40v43m1 -27v24m1 -28v32m1 -40v53m1 -46v29m1 -30v30m1 -26v33m1 -36v34m1 -37v32m1 -34v34m1 -26v46m1 -50v42m1 -43v27m1 -23v37m1 -42v29m1 -28v28m1 -28v36m1 -40v42m1 -42v33m1 -27v36m1 -44v33m1 -33v50m1 -50v35m1 -23v21m1 -26v31m1 -33v32m1 -36v36m1 -41v53m1 -47v47m1 -44v33m1 -32v31m1 -30v37m1 -36v30m1 -33v34m1 -32v28m1 -35v36m1 -27v31m1 -34v31m1 -39v41m1 -43v50m1 -43v30m1 -33v45m1 -50v52m1 -56v49m1 -55v58m1 -40v41m1 -49v42m1 -41v54m1 -53v53m1 -46v37m1 -50v48m1 -33v31m1 -36v39m1 -29v29m1 -35v35m1 -38v44m1 -48v56m1 -51v70m1 -75v47m1 -48v60m1 -59v76m1 -95v64m1 -41v58m1 -59v39m1 -37v41m1 -43v37m1 -74v95m1 -66v57m1 -53v48m1 -44v42m1 -66v73m1 -47v49m1 -45v39m1 -85v87m1 -50v61m1 -59v44m1 -59v64m1 -50v58m1 -52v58m1 -69v51m1 -52v56m1 -66v66m1 -53v57m1 -74v69m1 -71v80m1 -65v45m1 -35v48m1 -59v56m1 -66v72m1 -54v65m1 -66v50m1 -40v38m1 -83v94m1 -59v50m1 -61v69m1 -61v51m1 -54v47m1 -37v44m1 -46v46m1 -48v46m1 -45v60m1 -68v46m1 -36v52m1 -59v52m1 -51v55m1 -52v49m1 -54v54m1 -61v88m1 -82v59m1 -62v68m1 -84v111m1 -87v56m1 -52v43m1 -52v51m1 -46v55m1 -59v68m1 -83v106m1 -91v61m1 -66v71m1 -88v70m1 -45v62m1 -65v83m1 -77v56m1 -54v54m1 -54v63m1 -64v44m1 -61v88m1 -81v61m1 -51v54m1 -67v95m1 -111v78m1 -81v81m1 -67v60m1 -41v42m1 -45v52m1 -48v52m1 -81v69m1 -34v37m1 -49v51m1 -49v50m1 -63v58m1 -34v33m1 -43v51m1 -56v43m1 -35v63m1 -77v61m1 -49v45m1 -52v56m1 -47v60m1 -54v40m1 -49v39m1 -57v66m1 -52v54m1 -60v65m1 -57v85m1 -81v54m1 -58v52m1 -59v68m1 -63v66m1 -76v78m1 -68v53m1 -49v47m1 -48v49m1 -55v58m1 -47v58m1 -64v54m1 -53v59m1 -62v57m1 -53v66m1 -82v65m1 -54v44m1 -40v60m1 -62v73m1 -73v55m1 -67v81m1 -85v98m1 -111v73m1 -39v52m1 -57v48m1 -42v55m1 -62v55m1 -46v45m1 -47v49m1 -69v62m1 -62v68m1 -49v44m1 -52v49m1 -43v67m1 -104v83m1 -43v48m1 -61v93m1 -81v48m1 -42v37m1 -37v43m1 -66v64m1 -68v96m1 -93v69m1 -63v62m1 -57v54m1 -60v71m1 -60v49m1 -46v63m1 -84v70m1 -56v52m1 -49v53m1 -46v42m1 -55v56m1 -50v54m1 -52v49m1 -56v58m1 -54v56m1 -60v61m1 -70v82m1 -72v47m1 -42v39m1 -79v79m1 -31v29m1 -38v47m1 -86v92m1 -48v39m1 -46v52m1 -52v85m1 -84v74m1 -70v36m1 -43v55m1 -47v81m1 -81v39m1 -53v72m1 -59v53m1 -59v59m1 -95v80m1 -45v48m1 -44v58m1 -56v79m1 -88v54m1 -59v71m1 -53v47m1 -68v63m1 -54v64m1 -73v71m1 -72v96m1 -86v58m1 -61v53m1 -48v50m1 -59v81m1 -61v45m1 -68v68m1 -57v44m1 -35v43m1 -76v91m1 -60v47m1 -56v51m1 -41v51m1 -56v52m1 -61v60m1 -53v60m1 -75v70m1 -68v66m1 -65v67m1 -74v69m1 -42v81m1 -90v45m1 -45v74m1 -61v55m1 -76v76m1 -63v45m1 -47v54m1 -66v62m1 -44v50m1 -56v85m1 -89v62m1 -57v50m1 -49v48m1 -63v65m1 -58v57m1 -59v61m1 -54v56m1 -45v67m1 -83v55m1 -36v36m1 -61v65m1 -54v46m1 -41v58m1 -55v43m1 -56v60m1 -50v44m1 -40v50m1 -50v44m1 -52v49m1 -50v52m1 -47v86m1 -91v63m1 -65v47m1 -48v51m1 -63v67m1 -47v47m1 -49v47m1 -51v52m1 -45v52m1 -53v57m1 -68v55m1 -44v39m1 -45v53m1 -71v75m1 -44v47m1 -56v42m1 -36v81m1 -93v65m1 -57v50m1 -64v64m1 -63v70m1 -57v54m1 -58v53m1 -89v102m1 -67v53m1 -52v50m1 -53v53m1 -49v52m1 -84v83m1 -47v46m1 -52v60m1 -59v59m1 -63v84m1 -75v52m1 -81v78m1 -51v46m1 -50v63m1 -57v82m1 -110v78m1 -68v62m1 -52v54m1 -48v56m1 -59v64m1 -57v50m1 -70v66m1 -52v47m1 -53v59m1 -51v46m1 -50v61m1 -57v48m1 -51v78m1 -94v60m1 -51v64m1 -59v52m1 -46v62m1 -77v59m1 -44v44m1 -45v45m1 -45v67m1 -60v40m1 -52v55m1 -64v72m1 -62v58m1 -67v57m1 -75v69m1 -51v66m1 -43v54m1 -69v46m1 -46v53m1 -53v70m1 -69v53m1 -44v45m1 -74v74m1 -52v51m1 -57v57m1 -53v49m1 -41v59m1 -63v39m1 -38v42m1 -56v65m1 -55v53m1 -66v54m1 -54v83m1 -70v49m1 -63v59m1 -41v64m1 -81v93m1 -77v65m1 -86v65m1 -48v48m1 -42v47m1 -55v53m1 -44v42m1 -45v48m1 -60v57m1 -54v72m1 -80v77m1 -93v87m1 -57v48m1 -69v72m1 -44v54m1 -93v84m1 -47v63m1 -83v79m1 -59v59m1 -90v80m1 -50v64m1 -69v51m1 -44v48m1 -69v64m1 -47v44m1 -41v58m1 -68v85m1 -76v59m1 -69v66m1 -53v64m1 -86v64m1 -70v73m1 -71v92m1 -71v46m1 -35v54m1 -55v40m1 -39v36m1 -70v99m1 -72v52m1 -73v60m1 -44v49m1 -57v65m1 -57v41m1 -45v54m1 -47v55m1 -54v43m1 -48v49m1 -55v45m1 -53v67m1 -56v70m1 -64v45m1 -61v79m1 -63v47m1 -65v74m1 -57v46m1 -41v46m1 -47v48m1 -51v51m1 -66v68m1 -53v40m1 -41v44m1 -46v47m1 -58v73m1 -54v42m1 -56v73m1 -59v38m1 -49v57m1 -50v51m1 -43v40m1 -44v43m1 -43v44m1 -40v46m1 -62v57m1 -56v47m1 -43v81m1 -94v86m1 -70v57m1 -75v62m1 -42v45m1 -49v55m1 -49v55m1 -76v66m1 -80v87m1 -56v55m1 -92v78m1 -59v63m1 -51v52m1 -44v45m1 -47v54m1 -50v57m1 -71v58m1 -59v60m1 -55v52m1 -63v81m1 -78v83m1 -72v58m1 -57v49m1 -57v71m1 -67v57m1 -46v41m1 -59v57m1 -57v55m1 -49v51m1 -59v61m1 -45v62m1 -63v39m1 -45v46m1 -74v86m1 -57v72m1 -80v67m1 -52v48m1 -51v50m1 -49v56m1 -59v43m1 -50v56m1 -51v45m1 -44v49m1 -46v50m1 -54v71m1 -76v55m1 -42v48m1 -64v58m1 -40v37m1 -51v73m1 -69v52m1 -66v63m1 -36v49m1 -52v39m1 -59v75m1 -66v54m1 -49v63m1 -46v15m1 -15v14m1 -15v14m1 -9v5m1 -5v5m1 -5v5m1 -24v63m1 -55v33m1 -40v48m1 -69v69m1 -60v48m1 -41v53m1 -48v65m1 -63v41m1 -37v56m1 -90v68m1 -43v71m1 -67v45m1 -60v56m1 -63v62m1 -42v44m1 -52v50m1 -42v53m1 -78v71m1 -38v42m1 -77v72m1 -42v36m1 -73v97m1 -62v42m1 -58v72m1 -80v69m1 -53v64m1 -62v52m1 -43v67m1 -79v53m1 -80v78m1 -50v50m1 -43v54m1 -87v78m1 -66v72m1 -54v51m1 -50v52m1 -48v70m1 -84v75m1 -80v68m1 -70v72m1 -70v64m1 -60v68m1 -62v50m1 -50v47m1 -60v70m1 -60v59m1 -49v54m1 -55v61m1 -54v40m1 -62v64m1 -46v44m1 -64v71m1 -55v46m1 -43v40m1 -40v68m1 -64v40m1 -48v53m1 -51v49m1 -48v47m1 -58v65m1 -64v53m1 -53v63m1 -44v40m1 -77v93m1 -65v49m1 -50v47m1 -51v46m1 -65v65m1 -72v74m1 -50v54m1 -48v46m1 -53v74m1 -88v70m1 -60v52m1 -52v61m1 -59v66m1 -56v49m1 -66v74m1 -57v39m1 -38v41m1 -42v55m1 -72v60m1 -52v72m1 -76v74m1 -74v58m1 -53v64m1 -59v44m1 -54v76m1 -66v55m1 -58v43m1 -39v47m1 -53v49m1 -42v58m1 -47v24m1 -27v29m1 -27v24m1 -24v24m1 -24v26m1 -29v30m1 -29v28m1 -25v23m1 -26v29m1 -26v26m1 -41v60m1 -66v58m1 -69v68m1 -46v68m1 -71v49m1 -54v71m1 -88v66m1 -46v65m1 -76v71m1 -81v67m1 -58v61m1 -50v50m1 -76v71m1 -49v54m1 -49v55m1 -48v41m1 -49v52m1 -77v90m1 -66v56m1 -51v43m1 -47v60m1 -73v63m1 -67v98m1 -94v76m1 -59v46m1 -47v56m1 -51v50m1 -46v73m1 -89v54m1 -40v73m1 -79v47m1 -47v52m1 -60v55m1 -59v56m1 -36v35m1 -61v67m1 -46v44m1 -47v47m1 -50v55m1 -54v40m1 -67v71m1 -60v97m1 -82v54m1 -53v49m1 -54v68m1 -55v42m1 -52v68m1 -93v74m1 -58v60m1 -51v52m1 -43v43m1 -43v57m1 -63v65m1 -71v55m1 -51v56m1 -70v72m1 -66v56m1 -45v49m1 -42v48m1 -54v48m1 -53v56m1 -59v77m1 -63v38m1 -46v53m1 -64v88m1 -68v32m1 -36v34m1 -47v53m1 -68v73m1 -51v51m1 -63v68m1 -55v39m1 -42v49m1 -50v50m1 -52v76m1 -74v51m1 -43v52m1 -52v43m1 -45v52m1 -56v65m1 -65v50m1 -61v83m1 -68v51m1 -50v47m1 -51v50m1 -53v56m1 -48v53m1 -83v73m1 -68v76m1 -67v79m1 -83v61m1 -47v49m1 -51v53m1 -44v44m1 -50v65m1 -62v54m1 -45v34m1 -46v66m1 -68v47m1 -47v44m1 -52v68m1 -58v51m1 -51v50m1 -47v53m1 -72v69m1 -43v41m1 -53v57m1 -52v43m1 -47v54m1 -55v52m1 -71v84m1 -75v51m1 -40v52m1 -53v48m1 -34v44m1 -68v57m1 -34v41m1 -45v43m1 -48v37m1 -51v91m1 -72v43m1 -46v61m1 -76v67m1 -55v65m1 -76v51m1 -47v48m1 -41v47m1 -60v74m1 -58v61m1 -70v62m1 -53v64m1 -76v70m1 -60v48m1 -51v49m1 -50v51m1 -41v56m1 -78v78m1 -74v57m1 -40v41m1 -46v63m1 -56v45m1 -67v75m1 -56v47m1 -58v54m1 -49v60m1 -51v35m1 -48v55m1 -56v67m1 -76v78m1 -69v64m1 -69v63m1 -53v49m1 -44v40m1 -53v73m1 -59v56m1 -70v58m1 -54v60m1 -64v73m1 -83v68m1 -55v58m1 -75v81m1 -68v58m1 -58v55m1 -41v58m1 -52v71m1 -93v60m1 -47v52m1 -48v39m1 -49v61m1 -48v45m1 -59v63m1 -47v36m1 -64v65m1 -41v52m1 -70v71m1 -69v69m1 -63v69m1 -61v61m1 -70v50m1 -47v45m1 -51v57m1 -51v55m1 -62v52m1 -65v74m1 -46v42m1 -48v60m1 -67v60m1 -49v45m1 -47v46m1 -38v38m1 -40v46m1 -52v41m1 -32v30m1 -41v48m1 -64v63m1 -44v51m1 -68v68m1 -70v80m1 -62v50m1 -51v48m1 -56v70m1 -76v61m1 -53v47m1 -48v62m1 -56v48m1 -45v56m1 -66v56m1 -52v51m1 -67v68m1 -43v60m1 -68v56m1 -76v61m1 -36v45m1 -48v46m1 -44v47m1 -53v56m1 -60v63m1 -65v58m1 -45v56m1 -70v65m1 -52v37m1 -51v60m1 -53v50m1 -63v64m1 -52v56m1 -47v52m1 -49v39m1 -47v52m1 -57v66m1 -68v60m1 -67v66m1 -53v61m1 -65v51m1 -50v63m1 -56v51m1 -80v85m1 -78v72m1 -58v61m1 -72v74m1 -60v63m1 -57v58m1 -73v62m1 -47v45m1 -48v53m1 -50v55m1 -64v61m1 -50v52m1 -55v61m1 -66v61m1 -74v71m1 -50v55m1 -67v63m1 -54v40m1 -46v67m1 -58v34m1 -33v47m1 -50v61m1 -91v82m1 -61v63m1 -57v51m1 -48v43m1 -40v37m1 -42v51m1 -47v55m1 -59v56m1 -62v58m1 -72v79m1 -66v54m1 -55v65m1 -78v66m1 -56v58m1 -66v65m1 -35v56m1 -62v41m1 -64v66m1 -45v36m1 -42v81m1 -75v47m1 -49v41m1 -32v42m1 -55v48m1 -49v56m1 -54v79m1 -80v58m1 -57v51m1 -51v53m1 -56v62m1 -58v47m1 -52v54m1 -61v62m1 -61v59m1 -58v62m1 -54v53m1 -46v40m1 -65v80m1 -61v51m1 -53v56m1 -63v60m1 -45v41m1 -47v74m1 -63v44m1 -60v70m1 -57v59m1 -59v39m1 -47v49m1 -53v54m1 -49v65m1 -70v71m1 -58v44m1 -49v43m1 -56v66m1 -67v65m1 -61v57m1 -47v38m1 -47v51m1 -41v50m1 -57v64m1 -59v49m1 -64v70m1 -57v51m1 -47v50m1 -52v66m1 -78v59m1 -56v62m1 -51v56m1 -53v40m1 -46v63m1 -69v70m1 -62v45m1 -42v56m1 -61v46m1 -39v44m1 -70v81m1 -75v65m1 -61v66m1 -54v51m1 -50v43m1 -46v43m1 -56v55m1 -52v58m1 -43v34m1 -37v63m1 -64v45m1 -59v70m1 -66v52m1 -44v53m1 -51v39m1 -36v44m1 -40v38m1 -50v47m1 -36v44m1 -52v46m1 -41v45m1 -47v45m1 -60v61m1 -38v35m1 -49v66m1 -56v52m1 -62v50m1 -44v43m1 -49v70m1 -62v47m1 -62v53m1 -56v59m1 -46v51m1 -39v40m1 -80v77m1 -53v51m1 -44v38m1 -35v40m1 -47v62m1 -58v41m1 -39v43m1 -44v34m1 -30v52m1 -61v48m1 -49v59m1 -56v53m1 -58v63m1 -73v71m1 -55v58m1 -56v45m1 -52v48m1 -51v67m1 -68v76m1 -70v56m1 -61v77m1 -75v68m1 -66v48m1 -51v56m1 -58v76m1 -63v38m1 -48v66m1 -71v56m1 -37v58m1 -87v60m1 -60v69m1 -46v43m1 -46v51m1 -45v50m1 -52v55m1 -69v76m1 -80v61m1 -46v49m1 -45v39m1 -38v50m1 -84v74m1 -55v59m1 -56v50m1 -57v56m1 -55v63m1 -53v54m1 -64v60m1 -51v56m1 -64v67m1 -59v50m1 -56v59m1 -52v55m1 -51v68m1 -76v49m1 -52v54m1 -51v45m1 -38v50m1 -48v54m1 -59v49m1 -67v75m1 -54v53m1 -54v45m1 -43v46m1 -58v51m1 -52v69m1 -79v73m1 -59v49m1 -47v43m1 -66v80m1 -68v78m1 -60v59m1 -73v63m1 -50v49m1 -45v34m1 -39v45m1 -50v57m1 -56v42m1 -38v64m1 -64v49m1 -50v51m1 -55v48m1 -41v43m1 -25v8m1 -8v7m1 -7v7m1 -7v7m1 -35v68m1 -68v69m1 -61v47m1 -56v60m1 -51v59m1 -70v60m1 -54v57m1 -54v57m1 -61v50m1 -43v48m1 -50v47m1 -55v56m1 -41v40m1 -40v45m1 -56v67m1 -62v63m1 -71v54m1 -52v60m1 -58v56m1 -57v62m1 -64v55m1 -52v62m1 -55v46m1 -49v53m1 -66v59m1 -47v46m1 -50v67m1 -71v70m1 -69v65m1 -61v57m1 -55v55m1 -65v88m1 -77v48m1 -38v35m1 -40v41m1 -48v58m1 -56v45m1 -50v59m1 -68v56m1 -47v79m1 -64v51m1 -73v56m1 -43v43m1 -54v64m1 -62v70m1 -60v41m1 -62v75m1 -49v60m1 -64v46m1 -46v55m1 -47v47m1 -64v56m1 -49v47m1 -50v42m1 -49v54m1 -38v32m1 -35v55m1 -48v35m1 -46v58m1 -55v52m1 -64v54m1 -51v70m1 -90v76m1 -55v50m1 -49v48m1 -41v47m1 -57v56m1 -47v47m1 -47v55m1 -63v59m1 -49v41m1 -50v62m1 -56v47m1 -43v41m1 -49v51m1 -46v55m1 -53v52m1 -64v65m1 -48v59m1 -76v52m1 -49v52m1 -55v57m1 -54v50m1 -44v74m1 -74v66m1 -81v69m1 -57v64m1 -72v57m1 -61v76m1 -62v49m1 -61v62m1 -58v67m1 -71v56m1 -43v44m1 -41v46m1 -64v75m1 -57v35m1 -44v53m1 -60v64m1 -71v63m1 -34v51m1 -79v76m1 -53v45m1 -47v51m1 -51v59m1 -58v44m1 -43v52m1 -58v74m1 -83v61m1 -42v31m1 -76v86m1 -78v66m1 -27v42m1 -55v46m1 -44v49m1 -41v50m1 -91v99m1 -66v42m1 -51v61m1 -48v71m1 -78v76m1 -79v54m1 -45v48m1 -48v40m1 -51v53m1 -55v69m1 -74v68m1 -62v63m1 -51v57m1 -96v102m1 -78v70m1 -56v46m1 -57v57m1 -52v48m1 -62v59m1 -57v68m1 -45v43m1 -49v55m1 -55v50m1 -60v80m1 -63v84m1 -90v48m1 -48v54m1 -98v89m1 -48v47m1 -41v52m1 -51v85m1 -91v82m1 -83v56m1 -83v73m1 -58v64m1 -50v65m1 -83v65m1 -48v55m1 -65v57m1 -48v82m1 -84v53m1 -78v79m1 -76v79m1 -87v76m1 -40v46m1 -49v55m1 -74v81m1 -63v71m1 -69v61m1 -61v81m1 -74v44m1 -53v55m1 -59v64m1 -65v68m1 -58v45m1 -58v88m1 -97v100m1 -88v82m1 -107v105m1 -88v76m1 -71v65m1 -59v77m1 -77v83m1 -99v80m1 -81v74m1 -61v56m1 -59v91m1 -79v55m1 -60v51m1 -51v46m1 -87v92m1 -49v55m1 -55v52m1 -56v58m1 -55v83m1 -88v48m1 -45v65m1 -79v65m1 -48v44m1 -53v63m1 -54v54m1 -72v70m1 -57v79m1 -71v64m1 -69v52m1 -65v72m1 -66v68m1 -69v64m1 -57v53m1 -66v59m1 -62v80m1 -84v85m1 -65v64m1 -70v59m1 -58v60m1 -59v57m1 -68v79m1 -59v68m1 -73v66m1 -76v68m1 -77v89m1 -81v56m1 -46v57m1 -51v61m1 -69v87m1 -83v64m1 -70v80m1 -76v64m1 -50v47m1 -56v53m1 -53v58m1 -79v95m1 -81v55m1 -46v46m1 -53v77m1 -79v47m1 -44v62m1 -79v78m1 -75v86m1 -77v59m1 -59v56m1 -49v54m1 -58v64m1 -66v70m1 -73v72m1 -70v69m1 -101v99m1 -62v63m1 -68v60m1 -51v56m1 -58v67m1 -92v113m1 -90v50m1 -69v67m1 -69v78m1 -51v68m1 -71v49m1 -68v71m1 -50v64m1 -108v88m1 -43v67m1 -68v41m1 -46v62m1 -62v84m1 -94v91m1 -85v76m1 -76v72m1 -65v58m1 -63v64m1 -72v71m1 -66v51m1 -45v55m1 -56v54m1 -66v70m1 -85v85m1 -74v68m1 -55v63m1 -52v44m1 -43v49m1 -55v61m1 -72v62m1 -53v49m1 -47v53m1 -52v39m1 -56v66m1 -52v73m1 -105v112m1 -110v81m1 -52v64m1 -60v52m1 -45v40m1 -48v55m1 -55v58m1 -57v53m1 -62v70m1 -81v92m1 -85v60m1 -45v55m1 -51v36m1 -34v62m1 -73v53m1 -57v55m1 -56v64m1 -59v46m1 -44v51m1 -55v65m1 -64v54m1 -51v69m1 -66v61m1 -60v58m1 -68v68m1 -59v47m1 -51v51m1 -52v56m1 -58v70m1 -105v110m1 -70v49m1 -49v47m1 -50v43m1 -48v55m1 -53v62m1 -94v83m1 -68v76m1 -69v64m1 -66v63m1 -71v74m1 -43v49m1 -49v43m1 -50v56m1 -51v45m1 -47v62m1 -66v62m1 -64v62m1 -75v64m1 -49v58m1 -54v73m1 -95v61m1 -36v48m1 -50v45m1 -78v79m1 -78v94m1 -68v61m1 -50v41m1 -75v84m1 -75v67m1 -46v47m1 -51v54m1 -64v65m1 -51v42m1 -45v48m1 -45v54m1 -51v82m1 -127v83m1 -48v54m1 -57v54m1 -47v42m1 -57v63m1 -39v47m1 -56v48m1 -57v72m1 -71v75m1 -68v51m1 -67v84m1 -77v67m1 -51v58m1 -87v98m1 -117v91m1 -68v67m1 -40v40m1 -64v79m1 -63v58m1 -62v51m1 -77v82m1 -67v91m1 -116v87m1 -47v43m1 -52v61m1 -54v61m1 -60v73m1 -77v54m1 -49v71m1 -59v27m1 -28v29m1 -31v30m1 -46v95m1 -106v65m1 -45v48m1 -49v48m1 -56v58m1 -57v85m1 -85v65m1 -57v45m1 -49v67m1 -69v48m1 -44v58m1 -51v34m1 -61v77m1 -64v55m1 -51v65m1 -102v109m1 -67v52m1 -59v47m1 -49v68m1 -62v47m1 -49v57m1 -56v51m1 -46v48m1 -53v45m1 -48v53m1 -49v48m1 -58v67m1 -62v75m1 -80v77m1 -56v52m1 -56v45m1 -56v61m1 -60v50m1 -61v62m1 -53v67m1 -91v90m1 -85v83m1 -97v88m1 -49v85m1 -81v52m1 -61v57m1 -63v64m1 -66v85m1 -94v71m1 -51v61m1 -63v55m1 -84v84m1 -69v72m1 -65v73m1 -94v88m1 -49v51m1 -72v86m1 -92v81m1 -52v45m1 -56v53m1 -62v65m1 -67v60m1 -60v60m1 -50v59m1 -55v56m1 -59v57m1 -65v93m1 -113v117m1 -114v83m1 -69v73m1 -98v93m1 -78v75m1 -56v94m1 -111v87m1 -103v97m1 -55v50m1 -77v65m1 -46v75m1 -67v42m1 -49v50m1 -73v86m1 -71v67m1 -61v67m1 -64v63m1 -62v92m1 -108v58m1 -61v65m1 -46v63m1 -70v58m1 -52v53m1 -46v41m1 -48v53m1 -61v61m1 -56v65m1 -73v63m1 -56v94m1 -92v56m1 -52v54m1 -63v61m1 -58v60m1 -48v42m1 -48v53m1 -65v69m1 -63v62m1 -58v60m1 -56v53m1 -56v60m1 -58v52m1 -51v57m1 -51v56m1 -85v80m1 -62v43m1 -69v76m1 -69v70m1 -57v60m1 -71v99m1 -79v77m1 -72v81m1 -84v63m1 -64v53m1 -54v69m1 -80v72m1 -84v84m1 -73v66m1 -48v67m1 -86v64m1 -69v67m1 -89v116m1 -81v54m1 -55v57m1 -56v53m1 -52v59m1 -49v41m1 -47v57m1 -56v66m1 -91v99m1 -110v76m1 -46v63m1 -79v72m1 -52v54m1 -64v65m1 -56v69m1 -67v43m1 -38v41m1 -48v70m1 -75v79m1 -95v75m1 -73v62m1 -36v52m1 -62v64m1 -74v83m1 -79v55m1 -49v86m1 -83v76m1 -97v84m1 -78v81m1 -57v47m1 -71v65m1 -48v68m1 -78v82m1 -73v61m1 -83v71m1 -63v64m1 -76v117m1 -92v42m1 -48v63m1 -59v71m1 -64v53m1 -58v58m1 -94v91m1 -53v50m1 -93v93m1 -51v50m1 -77v79m1 -76v79m1 -67v52m1 -41v60m1 -62v57m1 -68v68m1 -92v85m1 -55v59m1 -58v59m1 -72v71m1 -53v52m1 -50v41m1 -38v54m1 -66v69m1 -72v58m1 -43v65m1 -65v51m1 -48v35m1 -55v86m1 -71v42m1 -34v75m1 -76v44m1 -49v67m1 -74v64m1 -80v69m1 -40v43m1 -55v51m1 -50v44m1 -43v62m1 -78v60m1 -82v118m1 -114v75m1 -46v58m1 -56v52m1 -48v54m1 -53v61m1 -72v99m1 -95v62m1 -80v86m1 -67v65m1 -99v97m1 -68v51m1 -79v110m1 -71v47m1 -51v52m1 -91v89m1 -75v87m1 -71v65m1 -74v72m1 -51v91m1 -105v105m1 -89v72m1 -90v63m1 -51v43m1 -44v56m1 -60v63m1 -68v63m1 -64v91m1 -80v94m1 -109v75m1 -54v49m1 -59v51m1 -48v66m1 -68v55m1 -66v90m1 -91v66m1 -75v80m1 -74v85m1 -66v93m1 -96v82m1 -90v76m1 -57v53m1 -58v58m1 -63v68m1 -63v55m1 -69v83m1 -72v63m1 -62v71m1 -65v57m1 -73v59m1 -60v85m1 -86v74m1 -85v82m1 -61v62m1 -55v54m1 -56v62m1 -78v63m1 -46v47m1 -56v70m1 -65v47m1 -56v69m1 -70v75m1 -67v66m1 -57v58m1 -67v70m1 -54v25m1 -20v16m1 -12v7m1 -5v3m1 -7v10m1 -15v22m1 -36v51m1 -71v93m1 -81v62m1 -56v66m1 -81v77m1 -60v75m1 -72v44m1 -50v59m1 -66v51m1 -46v60m1 -64v66m1 -65v73m1 -68v74m1 -79v83m1 -76v57m1 -57v42m1 -60v64m1 -46v49m1 -51v66m1 -100v89m1 -56v68m1 -79v73m1 -60v46m1 -51v69m1 -81v81m1 -73v68m1 -84v81m1 -55v63m1 -64v72m1 -90v78m1 -58v66m1 -62v53m1 -77v99m1 -92v64m1 -55v74m1 -72v70m1 -63v45m1 -47v43m1 -43v51m1 -70v66m1 -54v69m1 -62v51m1 -76v75m1 -71v74m1 -73v70m1 -51v50m1 -47v49m1 -52v39m1 -39v46m1 -56v71m1 -76v86m1 -67v44m1 -54v58m1 -45v72m1 -81v60m1 -68v60m1 -53v51m1 -63v60m1 -58v78m1 -70v60m1 -65v74m1 -108v104m1 -59v38m1 -59v89m1 -84v83m1 -72v87m1 -92v74m1 -65v51m1 -57v66m1 -64v48m1 -63v71m1 -70v77m1 -67v64m1 -58v39m1 -30v52m1 -74v63m1 -51v51m1 -55v54m1 -52v68m1 -84v63m1 -54v61m1 -84v94m1 -59v55m1 -73v75m1 -69v53m1 -45v50m1 -49v55m1 -56v71m1 -76v55m1 -50v64m1 -60v56m1 -62v52m1 -56v77m1 -61v39m1 -23v1m1 -1v1m1 -1v1m1 -1v1m1 -1v1m1 -1v1m1 -1v1m1 -1v1m1 -1v1m1 -1v1m1 -16v48m1 -64v56m1 -48v49m1 -90v117m1 -86v61m1 -68v77m1 -71v67m1 -60v43m1 -49v70m1 -56v44m1 -53v63m1 -101v99m1 -61v65m1 -60v67m1 -69v54m1 -55v61m1 -59v57m1 -72v68m1 -68v68m1 -65v67m1 -59v55m1 -57v64m1 -76v89m1 -73v66m1 -60v53m1 -68v92m1 -112v87m1 -71v94m1 -73v38m1 -55v59m1 -42v44m1 -57v63m1 -61v61m1 -57v64m1 -71v58m1 -65v64m1 -66v72m1 -65v61m1 -56v47m1 -46v44m1 -74v77m1 -52v51m1 -40v46m1 -53v65m1 -60v53m1 -57v70m1 -61v75m1 -113v100m1 -58v40m1 -68v66m1 -66v68m1 -65v68m1 -61v62m1 -61v59m1 -85v106m1 -112v92m1 -72v79m1 -84v80m1 -56v49m1 -45v85m1 -83v51m1 -58v54m1 -57v52m1 -63v62m1 -50v54m1 -43v52m1 -101v82m1 -44v45m1 -54v67m1 -51v58m1 -99v87m1 -48v43m1 -44v50m1 -51v64m1 -59v40m1 -79v75m1 -56v85m1 -72v53m1 -72v75m1 -54v57m1 -57v52m1 -63v57m1 -43v46m1 -56v59m1 -60v55m1 -60v61m1 -55v74m1 -71v61m1 -70v69m1 -71v59m1 -52v84m1 -85v63m1 -51v48m1 -48v49m1 -71v63m1 -58v57m1 -38v57m1 -52v41m1 -81v82m1 -43v39m1 -40v50m1 -63v76m1 -73v56m1 -59v61m1 -63v58m1 -58v55m1 -56v67m1 -50v73m1 -83v47m1 -50v53m1 -46v58m1 -65v68m1 -64v53m1 -52v49m1 -51v51m1 -47v46m1 -49v64m1 -65v71m1 -74v65m1 -69v65m1 -69v67m1 -56v54m1 -58v64m1 -79v107m1 -106v72m1 -70v70m1 -45v60m1 -70v57m1 -64v61m1 -59v54m1 -55v56m1 -44v42m1 -59v96m1 -75v44m1 -60v58m1 -92v96m1 -54v48m1 -46v60m1 -65v62m1 -63v59m1 -76v80m1 -77v88m1 -80v92m1 -78v53m1 -47v50m1 -62v52m1 -50v51m1 -53v62m1 -57v38m1 -58v77m1 -58v50m1 -52v75m1 -78v48m1 -44v46m1 -51v60m1 -47v49m1 -65v56m1 -48v56m1 -55v56m1 -84v82m1 -93v129m1 -101v67m1 -56v46m1 -89v103m1 -72v65m1 -59v46m1 -42v51m1 -51v53m1 -70v67m1 -49v85m1 -87v53m1 -53v60m1 -56v46m1 -46v45m1 -71v71m1 -54v60m1 -58v61m1 -55v49m1 -62v62m1 -52v53m1 -59v59m1 -55v46m1 -41v40m1 -57v63m1 -54v49m1 -42v49m1 -47v50m1 -82v107m1 -80v75m1 -71v44m1 -44v71m1 -83v74m1 -71v65m1 -54v44m1 -69v84m1 -68v48m1 -54v68m1 -62v63m1 -89v96m1 -95v98m1 -74v66m1 -71v92m1 -90v85m1 -80v67m1 -68v55m1 -44v42m1 -51v57m1 -54v63m1 -63v54m1 -49v83m1 -95v89m1 -83v60m1 -56v59m1 -61v67m1 -74v91m1 -85v72m1 -75v63m1 -60v58m1 -54v57m1 -58v48m1 -65v71m1 -61v48m1 -83v97m1 -77v88m1 -97v86m1 -55v56m1 -62v53m1 -62v67m1 -59v62m1 -57v56m1 -56v56m1 -82v105m1 -81v55m1 -48v52m1 -64v74m1 -68v50m1 -55v56m1 -61v55m1 -71v90m1 -73v59m1 -45v52m1 -49v56m1 -66v52m1 -56v58m1 -53v53m1 -75v75m1 -48v54m1 -98v90m1 -57v59m1 -56v53m1 -51v63m1 -73v63m1 -50v64m1 -69v51m1 -61v64m1 -50v58m1 -71v68m1 -69v76m1 -62v49m1 -61v61m1 -83v88m1 -71v79m1 -98v100m1 -63v49m1 -54v60m1 -56v64m1 -94v91m1 -77v82m1 -77v84m1 -75v51m1 -56v65m1 -51v36m1 -36v38m1 -38v35m1 -36v37m1 -35v32m1 -30v33m1 -33v33m1 -37v35m1 -34v34m1 -34v33m1 -28v30m1 -36v38m1 -35v34m1 -36v35m1 -32v34m1 -35v32m1 -32v33m1 -31v28m1 -31v33m1 -32v34m1 -34v32m1 -30v33m1 -33v34m1 -35v31m1 -31v35m1 -34v28m1 -28v31m1 -31v33m1 -33v33m1 -37v34m1 -32v31m1 -31v32m1 -35v38m1 -33v30m1 -33v32m1 -28v32m1 -34v32m1 -35v34m1 -34v32m1 -29v31m1 -53v65m1 -65v84m1 -91v68m1 -52v62m1 -65v65m1 -59v43m1 -64v73m1 -44v44m1 -58v65m1 -58v55m1 -61v62m1 -52v42m1 -66v70m1 -54v55m1 -55v57m1 -51v57m1 -64v45m1 -60v90m1 -71v50m1 -60v69m1 -61v57m1 -66v61m1 -58v72m1 -70v67m1 -60v55m1 -63v90m1 -95v69m1 -68v73m1 -76v80m1 -70v58m1 -53v66m1 -67v52m1 -73v96m1 -76v62m1 -52v43m1 -52v52m1 -64v80m1 -80v68m1 -68v60m1 -65v67m1 -46v38m1 -39v60m1 -70v58m1 -64v58m1 -40v66m1 -74v69m1 -79v64m1 -59v49m1 -73v82m1 -61v62m1 -60v76m1 -68v43m1 -37v68m1 -83v80m1 -85v64m1 -62v89m1 -75v60m1 -84v78m1 -50v59m1 -102v97m1 -60v59m1 -73v87m1 -73v81m1 -82v64m1 -63v55m1 -55v54m1 -60v58m1 -82v88m1 -58v93m1 -89v66m1 -66v44m1 -51v68m1 -80v74m1 -79v70m1 -56v62m1 -62v69m1 -60v60m1 -65v62m1 -60v51m1 -62v88m1 -78v51m1 -50v70m1 -74v57m1 -53v56m1 -52v52m1 -54v49m1 -52v87m1 -88v52m1 -47v64m1 -64v44m1 -45v53m1 -73v80m1 -63v51m1 -57v56m1 -41v52m1 -52v42m1 -47v62m1 -70v92m1 -79v63m1 -77v68m1 -50v46m1 -62v52m1 -46v46m1 -60v66m1 -65v65m1 -45v39m1 -48v54m1 -50v64m1 -59v49m1 -67v74m1 -77v78m1 -63v61m1 -72v62m1 -59v63m1 -76v102m1 -101v69m1 -51v57m1 -81v86m1 -72v71m1 -73v65m1 -52v68m1 -79v59m1 -57v49m1 -62v62m1 -39v48m1 -49v49m1 -80v77m1 -84v100m1 -81v81m1 -78v66m1 -58v54m1 -43v66m1 -78v69m1 -56v70m1 -66v41m1 -49v68m1 -77v54m1 -48v58m1 -54v52m1 -73v67m1 -62v84m1 -71v57m1 -47v62m1 -88v86m1 -76v61m1 -59v62m1 -62v68m1 -61v57m1 -71v69m1 -57v77m1 -74v54m1 -77v75m1 -76v93m1 -86v71m1 -73v82m1 -66v55m1 -64v68m1 -65v59m1 -88v82m1 -42v49m1 -63v61m1 -73v94m1 -80v86m1 -70v39m1 -88v123m1 -79v41m1 -58v71m1 -59v93m1 -102v59m1 -55v65m1 -83v78m1 -55v61m1 -64v64m1 -59v55m1 -74v58m1 -48v71m1 -82v67m1 -58v60m1 -52v54m1 -61v63m1 -46v55m1 -56v44m1 -52v57m1 -54v61m1 -67v47m1 -42v66m1 -66v48m1 -49v54m1 -44v48m1 -67v61m1 -61v65" stroke="#3232c8" stroke-width="1" fill="none"/><path d="M195.5 398v13m1 -14v15m1 -14v13m1 -12v11m1 -12v13m1 -14v15m1 -14v13m1 -13v13m1 -13v13m1 -14v15m1 -18v21m1 -17v13m1 -15v17m1 -18v19m1 -18v17m1 -14v11m1 -12v13m1 -16v19m1 -16v13m1 -12v11m1 -15v19m1 -15v11m1 -12v13m1 -13v13m1 -16v19m1 -17v15m1 -15v15m1 -15v15m1 -13v11m1 -12v13m1 -12v11m1 -10v9m1 -11v13m1 -12v11m1 -12v13m1 -12v11m1 -12v13m1 -13v13m1 -14v15m1 -14v13m1 -13v13m1 -13v13m1 -13v13m1 -12v11m1 -12v13m1 -12v11m1 -12v13m1 -13v13m1 -14v15m1 -13v11m1 -12v13m1 -12v11m1 -10v9m1 -11v13m1 -13v13m1 -13v13m1 -13v13m1 -13v13m1 -13v13m1 -12v11m1 -12v13m1 -14v15m1 -13v11m1 -14v17m1 -15v13m1 -11v9m1 -14v19m1 -17v15m1 -14v13m1 -13v13m1 -11v9m1 -11v13m1 -13v13m1 -14v15m1 -14v13m1 -12v11m1 -11v11m1 -11v11m1 -11v11m1 -12v13m1 -17v21m1 -19v17m1 -19v21m1 -20v19m1 -20v21m1 -20v19m1 -18v17m1 -15v13m1 -13v13m1 -16v19m1 -17v15m1 -20v25m1 -23v21m1 -20v19m1 -17v15m1 -16v17m1 -17v17m1 -18v19m1 -18v17m1 -17v17m1 -14v11m1 -16v21m1 -19v17m1 -17v17m1 -19v21m1 -19v17m1 -17v17m1 -17v17m1 -19v21m1 -18v15m1 -14v13m1 -16v19m1 -19v19m1 -19v19m1 -19v19m1 -16v13m1 -14v15m1 -17v19m1 -15v11m1 -14v17m1 -20v23m1 -21v19m1 -17v15m1 -16v17m1 -17v17m1 -17v17m1 -20v23m1 -20v17m1 -19v21m1 -22v23m1 -20v17m1 -17v17m1 -15v13m1 -14v15m1 -18v21m1 -19v17m1 -17v17m1 -18v19m1 -20v21m1 -18v15m1 -17v19m1 -21v23m1 -17v11m1 -13v15m1 -16v17m1 -22v27m1 -24v21m1 -19v17m1 -18v19m1 -19v19m1 -18v17m1 -17v17m1 -14v11m1 -15v19m1 -18v17m1 -17v17m1 -17v17m1 -18v19m1 -17v15m1 -17v19m1 -18v17m1 -15v13m1 -15v17m1 -16v15m1 -19v23m1 -20v17m1 -19v21m1 -20v19m1 -18v17m1 -15v13m1 -15v17m1 -17v17m1 -17v17m1 -15v13m1 -16v19m1 -19v19m1 -16v13m1 -15v17m1 -17v17m1 -18v19m1 -18v17m1 -18v19m1 -19v19m1 -18v17m1 -14v11m1 -15v19m1 -16v13m1 -15v17m1 -17v17m1 -20v23m1 -20v17m1 -15v13m1 -15v17m1 -20v23m1 -19v15m1 -16v17m1 -19v21m1 -19v17m1 -20v23m1 -24v25m1 -22v19m1 -18v17m1 -16v15m1 -20v25m1 -22v19m1 -20v21m1 -17v13m1 -15v17m1 -17v17m1 -17v17m1 -14v11m1 -15v19m1 -20v21m1 -18v15m1 -16v17m1 -17v17m1 -18v19m1 -19v19m1 -18v17m1 -17v17m1 -16v15m1 -17v19m1 -19v19m1 -19v19m1 -18v17m1 -17v17m1 -16v15m1 -17v19m1 -19v19m1 -19v19m1 -19v19m1 -18v17m1 -18v19m1 -19v19m1 -19v19m1 -19v19m1 -18v17m1 -14v11m1 -14v17m1 -18v19m1 -16v13m1 -15v17m1 -17v17m1 -16v15m1 -17v19m1 -18v17m1 -17v17m1 -15v13m1 -15v17m1 -18v19m1 -18v17m1 -18v19m1 -18v17m1 -18v19m1 -16v13m1 -15v17m1 -18v19m1 -18v17m1 -18v19m1 -23v27m1 -22v17m1 -17v17m1 -18v19m1 -18v17m1 -19v21m1 -24v27m1 -22v17m1 -18v19m1 -18v17m1 -17v17m1 -17v17m1 -20v23m1 -19v15m1 -17v19m1 -18v17m1 -18v19m1 -20v21m1 -19v17m1 -18v19m1 -18v17m1 -20v23m1 -21v19m1 -18v17m1 -17v17m1 -17v17m1 -19v21m1 -19v17m1 -17v17m1 -16v15m1 -16v17m1 -15v13m1 -19v25m1 -21v17m1 -14v11m1 -14v17m1 -18v19m1 -18v17m1 -20v23m1 -20v17m1 -19v21m1 -22v23m1 -21v19m1 -17v15m1 -16v17m1 -18v19m1 -18v17m1 -18v19m1 -17v15m1 -16v17m1 -15v13m1 -14v15m1 -16v17m1 -18v19m1 -19v19m1 -17v15m1 -16v17m1 -17v17m1 -19v21m1 -20v19m1 -20v21m1 -20v19m1 -19v19m1 -19v19m1 -18v17m1 -17v17m1 -15v13m1 -15v17m1 -15v13m1 -16v19m1 -22v25m1 -19v13m1 -16v19m1 -16v13m1 -14v15m1 -16v17m1 -18v19m1 -18v17m1 -17v17m1 -17v17m1 -18v19m1 -18v17m1 -21v25m1 -22v19m1 -15v11m1 -12v13m1 -17v21m1 -19v17m1 -21v25m1 -21v17m1 -17v17m1 -16v15m1 -16v17m1 -22v27m1 -23v19m1 -16v13m1 -15v17m1 -15v13m1 -15v17m1 -16v15m1 -16v17m1 -18v19m1 -20v21m1 -18v15m1 -16v17m1 -20v23m1 -20v17m1 -18v19m1 -16v13m1 -13v13m1 -15v17m1 -14v11m1 -14v17m1 -18v19m1 -19v19m1 -16v13m1 -16v19m1 -22v25m1 -21v17m1 -17v17m1 -17v17m1 -16v15m1 -17v19m1 -19v19m1 -18v17m1 -17v17m1 -17v17m1 -17v17m1 -17v17m1 -17v17m1 -18v19m1 -19v19m1 -17v15m1 -15v15m1 -15v15m1 -17v19m1 -15v11m1 -14v17m1 -21v25m1 -24v23m1 -20v17m1 -18v19m1 -22v25m1 -22v19m1 -18v17m1 -20v23m1 -20v17m1 -16v15m1 -18v21m1 -18v15m1 -17v19m1 -19v19m1 -17v15m1 -20v25m1 -20v15m1 -16v17m1 -16v15m1 -15v15m1 -15v15m1 -17v19m1 -18v17m1 -18v19m1 -18v17m1 -14v11m1 -14v17m1 -14v11m1 -12v13m1 -15v17m1 -17v17m1 -16v15m1 -17v19m1 -18v17m1 -17v17m1 -20v23m1 -24v25m1 -21v17m1 -17v17m1 -17v17m1 -17v17m1 -17v17m1 -18v19m1 -17v15m1 -15v15m1 -20v25m1 -23v21m1 -20v19m1 -18v17m1 -18v19m1 -19v19m1 -19v19m1 -18v17m1 -17v17m1 -17v17m1 -17v17m1 -18v19m1 -18v17m1 -16v15m1 -16v17m1 -18v19m1 -19v19m1 -18v17m1 -17v17m1 -17v17m1 -17v17m1 -17v17m1 -16v15m1 -15v15m1 -16v17m1 -16v15m1 -14v13m1 -16v19m1 -17v15m1 -16v17m1 -18v19m1 -19v19m1 -17v15m1 -16v17m1 -14v11m1 -14v17m1 -17v17m1 -14v11m1 -16v21m1 -20v19m1 -18v17m1 -19v21m1 -19v17m1 -20v23m1 -23v23m1 -19v15m1 -17v19m1 -18v17m1 -18v19m1 -18v17m1 -17v17m1 -18v19m1 -17v15m1 -15v15m1 -19v23m1 -21v19m1 -18v17m1 -17v17m1 -18v19m1 -19v19m1 -19v19m1 -18v17m1 -21v25m1 -22v19m1 -19v19m1 -18v17m1 -17v17m1 -14v11m1 -13v15m1 -14v13m1 -16v19m1 -15v11m1 -14v17m1 -18v19m1 -18v17m1 -17v17m1 -19v21m1 -20v19m1 -21v23m1 -20v17m1 -17v17m1 -18v19m1 -21v23m1 -21v19m1 -18v17m1 -19v21m1 -17v13m1 -15v17m1 -17v17m1 -17v17m1 -19v21m1 -15v9m1 -9v9m1 -9v9m1 -6v3m1 -3v3m1 -3v3m1 -11v19m1 -18v17m1 -14v11m1 -15v19m1 -17v15m1 -17v19m1 -18v17m1 -17v17m1 -19v21m1 -19v17m1 -22v27m1 -23v19m1 -17v15m1 -13v11m1 -14v17m1 -18v19m1 -18v17m1 -18v19m1 -22v25m1 -21v17m1 -18v19m1 -18v17m1 -18v19m1 -19v19m1 -18v17m1 -18v19m1 -19v19m1 -19v19m1 -19v19m1 -18v17m1 -16v15m1 -20v25m1 -21v17m1 -19v21m1 -17v13m1 -13v13m1 -15v17m1 -17v17m1 -22v27m1 -20v13m1 -13v13m1 -15v17m1 -18v19m1 -18v17m1 -18v19m1 -18v17m1 -18v19m1 -17v15m1 -19v23m1 -23v23m1 -21v19m1 -18v17m1 -22v27m1 -22v17m1 -17v17m1 -17v17m1 -17v17m1 -15v13m1 -15v17m1 -18v19m1 -19v19m1 -18v17m1 -17v17m1 -18v19m1 -17v15m1 -16v17m1 -16v15m1 -16v17m1 -16v15m1 -17v19m1 -19v19m1 -18v17m1 -17v17m1 -15v13m1 -15v17m1 -17v17m1 -17v17m1 -17v17m1 -19v21m1 -20v19m1 -17v15m1 -17v19m1 -18v17m1 -18v19m1 -18v17m1 -18v19m1 -16v13m1 -17v21m1 -17v13m1 -16v19m1 -21v23m1 -21v19m1 -18v17m1 -16v15m1 -15v15m1 -15v15m1 -16v17m1 -19v21m1 -17v13m1 -14v15m1 -16v17m1 -16v15m1 -15v15m1 -13v11m1 -14v17m1 -18v19m1 -20v21m1 -19v17m1 -18v19m1 -18v17m1 -19v21m1 -18v15m1 -17v19m1 -19v19m1 -18v17m1 -17v17m1 -16v15m1 -14v13m1 -15v17m1 -18v19m1 -17v15m1 -18v21m1 -19v17m1 -22v27m1 -22v17m1 -15v13m1 -19v25m1 -21v17m1 -15v13m1 -16v19m1 -17v15m1 -17v19m1 -17v15m1 -15v15m1 -14v13m1 -15v17m1 -18v19m1 -18v17m1 -16v15m1 -21v27m1 -25v23m1 -21v19m1 -18v17m1 -16v15m1 -17v19m1 -15v11m1 -14v17m1 -17v17m1 -19v21m1 -18v15m1 -17v19m1 -18v17m1 -19v21m1 -19v17m1 -17v17m1 -22v27m1 -22v17m1 -17v17m1 -17v17m1 -17v17m1 -17v17m1 -17v17m1 -18v19m1 -18v17m1 -17v17m1 -17v17m1 -18v19m1 -21v23m1 -20v17m1 -16v15m1 -15v15m1 -15v15m1 -13v11m1 -14v17m1 -17v17m1 -17v17m1 -19v21m1 -20v19m1 -18v17m1 -18v19m1 -18v17m1 -16v15m1 -16v17m1 -17v17m1 -18v19m1 -15v11m1 -15v19m1 -20v21m1 -18v15m1 -15v15m1 -16v17m1 -17v17m1 -17v17m1 -18v19m1 -17v15m1 -16v17m1 -16v15m1 -15v15m1 -17v19m1 -17v15m1 -16v17m1 -17v17m1 -19v21m1 -23v25m1 -24v23m1 -19v15m1 -16v17m1 -20v23m1 -22v21m1 -19v17m1 -14v11m1 -13v15m1 -16v17m1 -21v25m1 -22v19m1 -19v19m1 -18v17m1 -17v17m1 -19v21m1 -20v19m1 -18v17m1 -16v15m1 -16v17m1 -17v17m1 -16v15m1 -16v17m1 -20v23m1 -20v17m1 -18v19m1 -18v17m1 -17v17m1 -18v19m1 -17v15m1 -17v19m1 -17v15m1 -15v15m1 -20v25m1 -21v17m1 -18v19m1 -20v21m1 -21v21m1 -16v11m1 -14v17m1 -18v19m1 -18v17m1 -19v21m1 -18v15m1 -14v13m1 -18v23m1 -24v25m1 -19v13m1 -15v17m1 -17v17m1 -17v17m1 -17v17m1 -18v19m1 -18v17m1 -19v21m1 -19v17m1 -17v17m1 -17v17m1 -18v19m1 -18v17m1 -17v17m1 -19v21m1 -21v21m1 -20v19m1 -22v25m1 -21v17m1 -16v15m1 -16v17m1 -18v19m1 -18v17m1 -17v17m1 -15v13m1 -14v15m1 -17v19m1 -19v19m1 -19v19m1 -20v21m1 -20v19m1 -19v19m1 -20v21m1 -19v17m1 -17v17m1 -17v17m1 -17v17m1 -19v21m1 -16v11m1 -14v17m1 -17v17m1 -18v19m1 -22v25m1 -22v19m1 -18v17m1 -15v13m1 -13v13m1 -15v17m1 -18v19m1 -16v13m1 -15v17m1 -18v19m1 -19v19m1 -19v19m1 -19v19m1 -18v17m1 -20v23m1 -20v17m1 -17v17m1 -21v25m1 -22v19m1 -18v17m1 -17v17m1 -17v17m1 -18v19m1 -20v21m1 -19v17m1 -17v17m1 -17v17m1 -14v11m1 -15v19m1 -17v15m1 -17v19m1 -21v23m1 -21v19m1 -19v19m1 -15v11m1 -11v11m1 -14v17m1 -16v15m1 -15v15m1 -16v17m1 -17v17m1 -15v13m1 -15v17m1 -21v25m1 -21v17m1 -16v15m1 -19v23m1 -22v21m1 -17v13m1 -18v23m1 -19v15m1 -16v17m1 -17v17m1 -17v17m1 -18v19m1 -19v19m1 -21v23m1 -19v15m1 -15v15m1 -20v25m1 -25v25m1 -21v17m1 -17v17m1 -17v17m1 -21v25m1 -21v17m1 -21v25m1 -21v17m1 -18v19m1 -18v17m1 -17v17m1 -17v17m1 -18v19m1 -17v15m1 -19v23m1 -18v13m1 -14v15m1 -16v17m1 -16v15m1 -16v17m1 -14v11m1 -14v17m1 -18v19m1 -21v23m1 -20v17m1 -16v15m1 -15v15m1 -14v13m1 -17v21m1 -20v19m1 -18v17m1 -17v17m1 -17v17m1 -15v13m1 -15v17m1 -18v19m1 -18v17m1 -22v27m1 -22v17m1 -21v25m1 -23v21m1 -20v19m1 -19v19m1 -19v19m1 -18v17m1 -17v17m1 -16v15m1 -16v17m1 -16v15m1 -17v19m1 -19v19m1 -18v17m1 -20v23m1 -18v13m1 -15v17m1 -18v19m1 -16v13m1 -15v17m1 -14v11m1 -15v19m1 -17v15m1 -17v19m1 -17v15m1 -17v19m1 -19v19m1 -16v13m1 -16v19m1 -18v17m1 -17v17m1 -20v23m1 -17v11m1 -15v19m1 -17v15m1 -13v11m1 -15v19m1 -19v19m1 -21v23m1 -21v19m1 -18v17m1 -17v17m1 -19v21m1 -19v17m1 -14v11m1 -12v13m1 -15v17m1 -16v15m1 -16v17m1 -16v15m1 -16v17m1 -17v17m1 -18v19m1 -16v13m1 -14v15m1 -16v17m1 -17v17m1 -17v17m1 -18v19m1 -17v15m1 -17v19m1 -19v19m1 -18v17m1 -16v15m1 -16v17m1 -17v17m1 -18v19m1 -19v19m1 -17v15m1 -17v19m1 -21v23m1 -21v19m1 -18v17m1 -17v17m1 -17v17m1 -18v19m1 -19v19m1 -18v17m1 -17v17m1 -17v17m1 -18v19m1 -21v23m1 -20v17m1 -17v17m1 -17v17m1 -17v17m1 -17v17m1 -19v21m1 -19v17m1 -18v19m1 -18v17m1 -17v17m1 -18v19m1 -21v23m1 -20v17m1 -21v25m1 -20v15m1 -13v11m1 -15v19m1 -16v13m1 -15v17m1 -18v19m1 -21v23m1 -20v17m1 -17v17m1 -20v23m1 -20v17m1 -17v17m1 -15v13m1 -16v19m1 -17v15m1 -16v17m1 -17v17m1 -17v17m1 -16v15m1 -17v19m1 -17v15m1 -14v13m1 -15v17m1 -17v17m1 -17v17m1 -18v19m1 -21v23m1 -20v17m1 -17v17m1 -16v15m1 -15v15m1 -17v19m1 -17v15m1 -15v15m1 -16v17m1 -20v23m1 -20v17m1 -16v15m1 -20v25m1 -20v15m1 -18v21m1 -21v21m1 -19v17m1 -18v19m1 -15v11m1 -17v23m1 -23v23m1 -22v21m1 -21v21m1 -17v13m1 -15v17m1 -16v15m1 -16v17m1 -17v17m1 -22v27m1 -25v23m1 -23v23m1 -19v15m1 -13v11m1 -15v19m1 -18v17m1 -18v19m1 -18v17m1 -17v17m1 -17v17m1 -10v3m1 -3v3m1 -3v3m1 -3v3m1 -8v13m1 -14v15m1 -16v17m1 -18v19m1 -17v15m1 -20v25m1 -22v19m1 -18v17m1 -17v17m1 -16v15m1 -14v13m1 -15v17m1 -18v19m1 -21v23m1 -19v15m1 -17v19m1 -18v17m1 -16v15m1 -16v17m1 -19v21m1 -20v19m1 -19v19m1 -18v17m1 -14v11m1 -16v21m1 -20v19m1 -18v17m1 -17v17m1 -18v19m1 -15v11m1 -14v17m1 -18v19m1 -19v19m1 -18v17m1 -17v17m1 -18v19m1 -18v17m1 -15v13m1 -19v25m1 -22v19m1 -19v19m1 -19v19m1 -17v15m1 -15v15m1 -15v15m1 -17v19m1 -18v17m1 -17v17m1 -22v27m1 -23v19m1 -22v25m1 -21v17m1 -14v11m1 -15v19m1 -19v19m1 -19v19m1 -18v17m1 -16v15m1 -17v19m1 -22v25m1 -21v17m1 -18v19m1 -19v19m1 -17v15m1 -15v15m1 -16v17m1 -17v17m1 -16v15m1 -18v21m1 -20v19m1 -18v17m1 -16v15m1 -17v19m1 -19v19m1 -19v19m1 -19v19m1 -18v17m1 -18v19m1 -19v19m1 -16v13m1 -15v17m1 -18v19m1 -18v17m1 -21v25m1 -21v17m1 -17v17m1 -18v19m1 -22v25m1 -26v27m1 -19v11m1 -14v17m1 -21v25m1 -22v19m1 -19v19m1 -19v19m1 -17v15m1 -18v21m1 -20v19m1 -16v13m1 -15v17m1 -17v17m1 -15v13m1 -15v17m1 -17v17m1 -17v17m1 -16v15m1 -16v17m1 -16v15m1 -15v15m1 -15v15m1 -14v13m1 -15v17m1 -20v23m1 -23v23m1 -22v21m1 -20v19m1 -19v19m1 -20v21m1 -17v13m1 -18v23m1 -20v17m1 -16v15m1 -17v19m1 -15v11m1 -15v19m1 -18v17m1 -18v19m1 -18v17m1 -18v19m1 -19v19m1 -18v17m1 -17v17m1 -17v17m1 -21v25m1 -21v17m1 -16v15m1 -17v19m1 -19v19m1 -16v13m1 -19v25m1 -20v15m1 -17v19m1 -19v19m1 -18v17m1 -17v17m1 -17v17m1 -16v15m1 -14v13m1 -16v19m1 -20v21m1 -20v19m1 -18v17m1 -18v19m1 -18v17m1 -18v19m1 -19v19m1 -19v19m1 -18v17m1 -16v15m1 -19v23m1 -21v19m1 -19v19m1 -19v19m1 -17v15m1 -20v25m1 -22v19m1 -18v17m1 -17v17m1 -17v17m1 -21v25m1 -22v19m1 -17v15m1 -18v21m1 -19v17m1 -17v17m1 -18v19m1 -19v19m1 -19v19m1 -15v11m1 -14v17m1 -17v17m1 -18v19m1 -17v15m1 -17v19m1 -18v17m1 -19v21m1 -19v17m1 -14v11m1 -13v15m1 -16v17m1 -17v17m1 -18v19m1 -17v15m1 -17v19m1 -17v15m1 -16v17m1 -18v19m1 -18v17m1 -16v15m1 -16v17m1 -19v21m1 -21v21m1 -19v17m1 -15v13m1 -16v19m1 -19v19m1 -18v17m1 -19v21m1 -19v17m1 -17v17m1 -23v29m1 -24v19m1 -20v21m1 -24v27m1 -22v17m1 -22v27m1 -22v17m1 -19v21m1 -20v19m1 -18v17m1 -17v17m1 -18v19m1 -17v15m1 -16v17m1 -19v21m1 -21v21m1 -19v17m1 -20v23m1 -21v19m1 -18v17m1 -17v17m1 -17v17m1 -17v17m1 -18v19m1 -20v21m1 -20v19m1 -18v17m1 -18v19m1 -19v19m1 -18v17m1 -17v17m1 -18v19m1 -19v19m1 -19v19m1 -17v15m1 -20v25m1 -21v17m1 -18v19m1 -19v19m1 -19v19m1 -22v25m1 -21v17m1 -22v27m1 -23v19m1 -18v17m1 -17v17m1 -17v17m1 -17v17m1 -17v17m1 -15v13m1 -15v17m1 -18v19m1 -19v19m1 -17v15m1 -17v19m1 -18v17m1 -16v15m1 -16v17m1 -17v17m1 -19v21m1 -20v19m1 -20v21m1 -17v13m1 -16v19m1 -19v19m1 -19v19m1 -19v19m1 -19v19m1 -18v17m1 -18v19m1 -19v19m1 -18v17m1 -22v27m1 -24v21m1 -19v17m1 -17v17m1 -17v17m1 -16v15m1 -16v17m1 -18v19m1 -19v19m1 -22v25m1 -18v11m1 -16v21m1 -19v17m1 -20v23m1 -19v15m1 -16v17m1 -16v15m1 -16v17m1 -17v17m1 -18v19m1 -18v17m1 -17v17m1 -21v25m1 -22v19m1 -19v19m1 -19v19m1 -22v25m1 -21v17m1 -20v23m1 -21v19m1 -17v15m1 -16v17m1 -16v15m1 -16v17m1 -17v17m1 -20v23m1 -20v17m1 -17v17m1 -22v27m1 -21v15m1 -17v19m1 -19v19m1 -18v17m1 -15v13m1 -16v19m1 -17v15m1 -16v17m1 -17v17m1 -18v19m1 -18v17m1 -17v17m1 -17v17m1 -18v19m1 -18v17m1 -19v21m1 -19v17m1 -19v21m1 -20v19m1 -17v15m1 -17v19m1 -19v19m1 -19v19m1 -19v19m1 -18v17m1 -17v17m1 -18v19m1 -19v19m1 -19v19m1 -15v11m1 -14v17m1 -19v21m1 -22v23m1 -20v17m1 -18v19m1 -18v17m1 -15v13m1 -17v21m1 -22v23m1 -20v17m1 -18v19m1 -18v17m1 -19v21m1 -20v19m1 -19v19m1 -17v15m1 -16v17m1 -17v17m1 -17v17m1 -20v23m1 -20v17m1 -17v17m1 -16v15m1 -15v15m1 -16v17m1 -18v19m1 -15v11m1 -12v13m1 -13v13m1 -15v17m1 -18v19m1 -21v23m1 -21v19m1 -18v17m1 -17v17m1 -17v17m1 -16v15m1 -16v17m1 -17v17m1 -18v19m1 -19v19m1 -20v21m1 -19v17m1 -20v23m1 -22v21m1 -20v19m1 -18v17m1 -16v15m1 -16v17m1 -19v21m1 -20v19m1 -18v17m1 -18v19m1 -19v19m1 -18v17m1 -18v19m1 -22v25m1 -19v13m1 -16v19m1 -18v17m1 -19v21m1 -21v21m1 -20v19m1 -21v23m1 -20v17m1 -16v15m1 -15v15m1 -15v15m1 -16v17m1 -19v21m1 -18v15m1 -17v19m1 -19v19m1 -16v13m1 -16v19m1 -20v21m1 -18v15m1 -14v13m1 -15v17m1 -17v17m1 -16v15m1 -17v19m1 -18v17m1 -19v21m1 -18v15m1 -17v19m1 -17v15m1 -16v17m1 -16v15m1 -18v21m1 -19v17m1 -17v17m1 -18v19m1 -18v17m1 -14v11m1 -14v17m1 -15v13m1 -16v19m1 -18v17m1 -17v17m1 -17v17m1 -15v13m1 -14v15m1 -20v25m1 -20v15m1 -16v17m1 -18v19m1 -19v19m1 -19v19m1 -19v19m1 -18v17m1 -18v19m1 -18v17m1 -17v17m1 -20v23m1 -20v17m1 -15v13m1 -16v19m1 -19v19m1 -18v17m1 -19v21m1 -18v15m1 -15v15m1 -15v15m1 -17v19m1 -17v15m1 -13v11m1 -15v19m1 -17v15m1 -16v17m1 -14v11m1 -15v19m1 -18v17m1 -17v17m1 -18v19m1 -17v15m1 -14v13m1 -15v17m1 -18v19m1 -19v19m1 -16v13m1 -16v19m1 -23v27m1 -22v17m1 -17v17m1 -16v15m1 -16v17m1 -16v15m1 -21v27m1 -23v19m1 -18v17m1 -17v17m1 -18v19m1 -17v15m1 -16v17m1 -18v19m1 -17v15m1 -16v17m1 -18v19m1 -15v11m1 -13v15m1 -17v19m1 -18v17m1 -16v15m1 -16v17m1 -18v19m1 -18v17m1 -17v17m1 -15v13m1 -13v13m1 -12v11m1 -15v19m1 -19v19m1 -18v17m1 -17v17m1 -17v17m1 -17v17m1 -15v13m1 -15v17m1 -18v19m1 -21v23m1 -20v17m1 -17v17m1 -17v17m1 -17v17m1 -17v17m1 -19v21m1 -20v19m1 -18v17m1 -19v21m1 -19v17m1 -18v19m1 -19v19m1 -19v19m1 -17v15m1 -17v19m1 -17v15m1 -18v21m1 -20v19m1 -22v25m1 -24v23m1 -21v19m1 -21v23m1 -20v17m1 -17v17m1 -17v17m1 -18v19m1 -17v15m1 -15v15m1 -13v11m1 -12v13m1 -15v17m1 -16v15m1 -16v17m1 -17v17m1 -17v17m1 -16v15m1 -17v19m1 -18v17m1 -18v19m1 -22v25m1 -22v19m1 -19v19m1 -22v25m1 -22v19m1 -19v19m1 -18v17m1 -16v15m1 -16v17m1 -16v15m1 -15v15m1 -17v19m1 -17v15m1 -17v19m1 -18v17m1 -16v15m1 -17v19m1 -19v19m1 -19v19m1 -19v19m1 -17v15m1 -16v17m1 -17v17m1 -17v17m1 -16v15m1 -13v11m1 -12v13m1 -16v19m1 -17v15m1 -17v19m1 -18v17m1 -18v19m1 -19v19m1 -20v21m1 -16v11m1 -17v23m1 -18v13m1 -15v17m1 -17v17m1 -18v19m1 -18v17m1 -21v25m1 -22v19m1 -18v17m1 -17v17m1 -21v25m1 -24v23m1 -22v21m1 -20v19m1 -21v23m1 -19v15m1 -16v17m1 -18v19m1 -20v21m1 -16v11m1 -14v17m1 -21v25m1 -21v17m1 -17v17m1 -16v15m1 -17v19m1 -22v25m1 -19v13m1 -14v15m1 -17v19m1 -19v19m1 -21v23m1 -20v17m1 -18v19m1 -18v17m1 -17v17m1 -17v17m1 -17v17m1 -14v11m1 -8v5m2 -6v7m1 -10v13m1 -16v19m1 -16v13m1 -15v17m1 -17v17m1 -17v17m1 -21v25m1 -21v17m1 -16v15m1 -17v19m1 -15v11m1 -13v15m1 -16v17m1 -22v27m1 -22v17m1 -16v15m1 -17v19m1 -15v11m1 -14v17m1 -17v17m1 -18v19m1 -19v19m1 -21v23m1 -20v17m1 -17v17m1 -14v11m1 -12v13m1 -15v17m1 -18v19m1 -18v17m1 -20v23m1 -19v15m1 -16v17m1 -17v17m1 -20v23m1 -19v15m1 -15v15m1 -18v21m1 -18v15m1 -15v15m1 -16v17m1 -18v19m1 -18v17m1 -17v17m1 -17v17m1 -20v23m1 -24v25m1 -21v17m1 -17v17m1 -17v17m1 -17v17m1 -18v19m1 -20v21m1 -19v17m1 -21v25m1 -18v11m1 -13v15m1 -15v15m1 -16v17m1 -17v17m1 -17v17m1 -14v11m1 -15v19m1 -17v15m1 -17v19m1 -19v19m1 -21v23m1 -24v25m1 -21v17m1 -17v17m1 -18v19m1 -22v25m1 -18v11m1 -15v19m1 -19v19m1 -15v11m1 -14v17m1 -20v23m1 -20v17m1 -18v19m1 -18v17m1 -17v17m1 -15v13m1 -13v13m1 -15v17m1 -16v15m1 -16v17m1 -17v17m1 -18v19m1 -22v25m1 -21v17m1 -16v15m1 -17v19m1 -20v21m1 -19v17m11 -17v17m1 -18v19m1 -17v15m1 -15v15m1 -16v17m1 -16v15m1 -16v17m1 -21v25m1 -21v17m1 -16v15m1 -17v19m1 -19v19m1 -17v15m1 -18v21m1 -19v17m1 -18v19m1 -17v15m1 -14v13m1 -15v17m1 -18v19m1 -17v15m1 -17v19m1 -18v17m1 -20v23m1 -20v17m1 -17v17m1 -18v19m1 -18v17m1 -19v21m1 -20v19m1 -15v11m1 -15v19m1 -21v23m1 -20v17m1 -19v21m1 -19v17m1 -14v11m1 -15v19m1 -18v17m1 -17v17m1 -15v13m1 -12v11m1 -13v15m1 -19v23m1 -20v17m1 -18v19m1 -19v19m1 -18v17m1 -17v17m1 -15v13m1 -12v11m1 -15v19m1 -19v19m1 -23v27m1 -22v17m1 -15v13m1 -16v19m1 -18v17m1 -15v13m1 -18v23m1 -19v15m1 -16v17m1 -16v15m1 -16v17m1 -18v19m1 -17v15m1 -17v19m1 -16v13m1 -20v27m1 -20v13m1 -15v17m1 -17v17m1 -15v13m1 -13v13m1 -15v17m1 -17v17m1 -17v17m1 -17v17m1 -18v19m1 -19v19m1 -19v19m1 -18v17m1 -18v19m1 -20v21m1 -21v21m1 -24v27m1 -22v17m1 -18v19m1 -17v15m1 -19v23m1 -21v19m1 -18v17m1 -17v17m1 -21v25m1 -20v15m1 -16v17m1 -16v15m1 -16v17m1 -17v17m1 -17v17m1 -16v15m1 -17v19m1 -15v11m1 -16v21m1 -21v21m1 -23v25m1 -22v19m1 -19v19m1 -19v19m1 -18v17m1 -14v11m1 -14v17m1 -14v11m1 -15v19m1 -17v15m1 -17v19m1 -18v17m1 -18v19m1 -18v17m1 -18v19m1 -16v13m1 -16v19m1 -22v25m1 -22v19m1 -19v19m1 -19v19m1 -18v17m1 -17v17m1 -18v19m1 -17v15m1 -16v17m1 -19v21m1 -20v19m1 -18v17m1 -17v17m1 -22v27m1 -22v17m1 -16v15m1 -19v23m1 -21v19m1 -15v11m1 -14v17m1 -19v21m1 -19v17m1 -17v17m1 -15v13m1 -13v13m1 -15v17m1 -18v19m1 -23v27m1 -23v19m1 -19v19m1 -16v13m1 -16v19m1 -18v17m1 -17v17m1 -17v17m1 -18v19m1 -21v23m1 -21v19m1 -21v23m1 -21v19m1 -17v15m1 -17v19m1 -22v25m1 -20v15m1 -19v23m1 -24v25m1 -21v17m1 -17v17m1 -17v17m1 -19v21m1 -20v19m1 -22v25m1 -20v15m1 -17v19m1 -17v15m1 -18v21m1 -16v11m1 -15v19m1 -18v17m1 -20v23m1 -20v17m1 -18v19m1 -19v19m1 -21v23m1 -20v17m1 -18v19m1 -17v15m1 -15v15m1 -16v17m1 -20v23m1 -23v23m1 -20v17m1 -17v17m1 -17v17m1 -16v15m1 -17v19m1 -21v23m1 -21v19m1 -19v19m1 -15v11m1 -15v19m1 -19v19m1 -18v17m1 -17v17m1 -16v15m1 -17v19m1 -19v19m1 -17v15m1 -16v17m1 -16v15m1 -16v17m1 -17v17m1 -17v17m1 -16v15m1 -17v19m1 -18v17m1 -17v17m1 -22v27m1 -22v17m1 -18v19m1 -17v15m1 -15v15m1 -14v13m1 -14v15m1 -16v17m1 -16v15m1 -17v19m1 -20v21m1 -17v13m1 -16v19m1 -18v17m1 -17v17m1 -17v17m1 -15v13m1 -18v23m1 -20v17m1 -19v21m1 -20v19m1 -19v19m1 -17v15m1 -16v17m1 -16v15m1 -17v19m1 -19v19m1 -19v19m1 -18v17m1 -17v17m1 -14v11m1 -14v17m1 -17v17m1 -18v19m1 -21v23m1 -19v15m1 -17v19m1 -19v19m1 -19v19m1 -17v15m1 -15v15m1 -14v13m1 -15v17m1 -15v13m1 -16v19m1 -22v25m1 -20v15m1 -16v17m1 -16v15m1 -16v17m1 -16v15m1 -16v17m1 -17v17m1 -18v19m1 -18v17m1 -17v17m1 -16v15m1 -17v19m1 -18v17m1 -16v15m1 -16v17m1 -16v15m1 -16v17m1 -16v15m1 -15v15m1 -16v17m1 -16v15m1 -16v17m1 -16v15m1 -13v11m1 -15v19m1 -17v15m1 -18v21m1 -21v21m1 -18v15m1 -19v23m1 -21v19m1 -17v15m1 -15v15m1 -17v19m1 -17v15m1 -18v21m1 -18v15m1 -17v19m1 -15v11m1 -13v15m1 -16v17m1 -16v15m1 -17v19m1 -18v17m1 -16v15m1 -19v23m1 -19v15m1 -16v17m1 -16v15m1 -16v17m1 -17v17m1 -19v21m1 -19v17m1 -17v17m1 -15v13m1 -15v17m1 -19v21m1 -20v19m1 -18v17m1 -21v25m1 -22v19m1 -17v15m1 -17v19m1 -17v15m1 -17v19m1 -22v25m1 -26v27m1 -22v17m1 -17v17m1 -17v17m1 -20v23m1 -21v19m1 -18v17m1 -20v23m1 -20v17m1 -22v27m1 -24v21m1 -19v17m1 -17v17m1 -14v11m1 -13v15m1 -16v17m1 -17v17m1 -17v17m1 -20v23m1 -23v23m1 -21v19m1 -18v17m1 -17v17m1 -17v17m1 -16v15m1 -15v15m1 -17v19m1 -17v15m1 -16v17m1 -19v21m1 -19v17m1 -17v17m1 -20v23m1 -21v19m1 -17v15m1 -16v17m1 -17v17m1 -21v25m1 -20v15m1 -20v25m1 -21v17m1 -19v21m1 -19v17m1 -18v19m1 -20v21m1 -16v11m1 -16v21m1 -20v19m1 -20v21m1 -18v15m1 -16v17m1 -16v15m1 -16v17m1 -17v17m1 -17v17m1 -17v17m1 -20v23m1 -20v17m1 -20v23m1 -22v21m1 -16v11m1 -13v15m1 -16v17m1 -18v19m1 -17v15m1 -16v17m1 -19v21m1 -20v19m1 -17v15m1 -16v17m1 -16v15m1 -19v23m1 -21v19m1 -18v17m1 -15v13m1 -14v15m1 -15v15m1 -13v11m1 -14v17m1 -17v17m1 -16v15m1 -16v17m1 -14v11m1 -14v17m1 -17v17m1 -16v15m1 -15v15m1 -16v17m1 -17v17m1 -16v15m1 -14v13m1 -15v17m1 -18v19m1 -19v19m1 -22v25m1 -22v19m1 -22v25m1 -20v15m1 -16v17m1 -19v21m1 -19v17m1 -17v17m1 -16v15m1 -13v11m1 -17v23m1 -22v21m1 -20v19m1 -18v17m1 -17v17m1 -18v19m1 -19v19m1 -19v19m1 -16v13m1 -16v19m1 -18v17m1 -16v15m1 -15v15m1 -19v23m1 -19v15m1 -15v15m1 -15v15m1 -16v17m1 -15v13m1 -15v17m1 -16v15m1 -17v19m1 -19v19m1 -18v17m1 -16v15m1 -14v13m1 -16v19m1 -21v23m1 -18v13m1 -16v19m1 -22v25m1 -21v17m1 -17v17m1 -18v19m1 -18v17m1 -21v25m1 -20v15m1 -17v19m1 -18v17m1 -16v15m1 -17v19m1 -21v23m1 -20v17m1 -18v19m1 -18v17m1 -16v15m1 -16v17m1 -17v17m1 -20v23m1 -21v19m1 -17v15m1 -15v15m1 -15v15m1 -18v21m1 -19v17m1 -15v13m1 -13v13m1 -16v19m1 -19v19m1 -17v15m1 -17v19m1 -19v19m1 -20v21m1 -19v17m1 -18v19m1 -22v25m1 -21v17" stroke="#6464dc" stroke-width="1" fill="none"/><path d="M139.5 509v93m1 -101v98m1 -92v93m1 -105v109m1 -103v95m1 -93v94m1 -91v99m1 -92v91m1 -103v99m1 -98v113m1 -103v87m1 -101v104m1 -106v112m1 -102v95m1 -96v91m1 -85v86m1 -96v98m1 -82v72m1 -77v79m1 -67v71m1 -74v73m1 -70v71m1 -74v72m1 -77v74m1 -71v74m1 -75v70m1 -69v69m1 -75v88m1 -104v128m1 -137v126m1 -123v120m1 -120v131m1 -127v121m1 -118v100m1 -109v131m1 -121v116m1 -119v119m1 -114v97m1 -91v106m1 -119v123m1 -121v115m1 -122v109m1 -112v109m1 -85v93m1 -90v97m1 -124v118m1 -98v92m1 -104v116m1 -114v120m1 -132v113m1 -92v91m1 -98v96m1 -89v101m1 -112v107m1 -101v105m1 -110v112m1 -98v99m1 -108v123m1 -123v100m1 -107v112m1 -99v104m1 -100v100m1 -117v107m1 -103v119m1 -117v104m1 -106v124m1 -121v102m1 -102v101m1 -89v85m1 -94v111m1 -113v112m1 -102v103m1 -129v128m1 -115v125m1 -109v89m1 -97v90m1 -96v112m1 -113v113m1 -111v123m1 -109v79m1 -91v90m1 -80v88m1 -93v112m1 -111v100m1 -109v110m1 -109v108m1 -97v95m1 -95v96m1 -107v123m1 -118v103m1 -93v83m1 -112v121m1 -99v111m1 -121v116m1 -127v116m1 -95v101m1 -99v97m1 -107v104m1 -122v143m1 -143v143m1 -143v143m1 -143v143m1 -143v143m1 -143v143m1 -143v143m1 -143v143m1 -143v143m1 -143v143m1 -143v143m1 -143v143m1 -143v143m1 -143v143m1 -143v143m1 -143v143m1 -143v143m1 -143v143m1 -143v143m1 -143v143m1 -143v143m1 -143v143m1 -143v143m1 -143v143m1 -143v143m1 -143v143m1 -143v143m1 -143v143m1 -143v143m1 -143v143m1 -143v143m1 -143v143m1 -143v143m1 -143v143m1 -143v143m1 -143v143m1 -143v143m1 -143v143m1 -143v143m1 -143v143m1 -143v143m1 -143v143m1 -143v143m1 -143v143m1 -143v143m1 -143v143m1 -143v143m1 -143v143m1 -143v143m1 -143v143m1 -143v143m1 -143v143m1 -143v143m1 -143v143m1 -143v143m1 -143v143m1 -143v143m1 -143v143m1 -143v143m1 -143v143m1 -143v143m1 -143v143m1 -143v143m1 -143v143m1 -139v139m1 -143v143m1 -143v143m1 -143v143m1 -143v143m1 -143v143m1 -143v143m1 -143v143m1 -143v143m1 -143v143m1 -143v143m1 -143v143m1 -143v143m1 -143v143m1 -143v143m1 -143v143m1 -143v143m1 -143v143m1 -143v143m1 -143v143m1 -143v143m1 -143v143m1 -143v143m1 -143v143m1 -143v143m1 -143v143m1 -143v143m1 -143v143m1 -143v143m1 -143v143m1 -143v143m1 -143v143m1 -143v143m1 -143v143m1 -143v143m1 -143v143m1 -143v143m1 -143v143m1 -143v143m1 -143v143m1 -143v143m1 -143v143m1 -143v143m1 -143v143m1 -143v143m1 -143v143m1 -143v143m1 -143v143m1 -143v143m1 -143v143m1 -143v143m1 -143v143m1 -143v143m1 -143v143m1 -143v143m1 -143v143m1 -143v143m1 -143v143m1 -143v143m1 -143v143m1 -143v143m1 -143v143m1 -143v143m1 -143v143m1 -143v143m1 -143v143m1 -143v143m1 -143v143m1 -143v143m1 -143v143m1 -143v143m1 -143v143m1 -143v143m1 -143v143m1 -143v143m1 -143v143m1 -143v143m1 -143v143m1 -143v143m1 -143v143m1 -95v56m1 -84v83m1 -72v64m1 -54v55m1 -55v57m1 -55v58m1 -55v63m1 -63v69m1 -70v67m1 -67v52m1 -64v85m1 -94v79m1 -81v75m1 -59v68m1 -62v61m1 -80v74m1 -53v70m1 -71v67m1 -41v1m1 -1v1m1 -1v1m1 -50v98m1 -87v65m1 -56v63m1 -60v53m1 -56v66m1 -66v64m1 -65v64m1 -63v73m1 -71v55m1 -59v65m1 -58v54m1 -60v66m1 -36v1m1 -24v55m1 -56v53m1 -81v93m1 -85v68m1 -56v65m1 -83v103m1 -85v59m1 -55v56m1 -28v1m1 -1v1m1 -72v140m1 -117v105m1 -128v143m1 -143v143m1 -116v116m1 -143v143m1 -143v143m1 -143v143m1 -131v131m1 -143v143m1 -143v143m1 -114v114m1 -112v112m1 -143v143m1 -143v143m1 -143v143m1 -143v143m1 -143v143m1 -143v143m1 -143v143m1 -143v143m1 -143v143m1 -126v103m1 -120v143m1 -143v143m1 -132v99m1 -110v143m1 -143v143m1 -143v143m1 -143v143m1 -143v143m1 -143v143m1 -143v137m1 -137v143m1 -118v118m1 -143v143m1 -123v123m1 -143v143m1 -143v143m1 -143v143m1 -143v143m1 -128v128m1 -143v143m1 -143v122m1 -122v143m1 -143v143m1 -143v143m1 -143v143m1 -143v143m1 -143v143m1 -143v143m1 -137v137m1 -143v110m1 -110v143m1 -143v143m1 -143v143m1 -133v133m1 -143v107m1 -93v129m1 -116v116m1 -143v143m1 -143v143m1 -143v143m1 -138v138m1 -109v109m1 -143v143m1 -143v143m1 -143v143m1 -143v143m1 -143v143m1 -143v143m1 -143v143m1 -143v143m1 -143v143m1 -143v143m1 -143v125m1 -125v143m1 -143v143m1 -143v143m1 -143v143m1 -143v143m1 -143v143m1 -143v143m1 -143v143m1 -143v143m1 -143v143m1 -143v143m1 -143v143m1 -143v143m1 -143v143m1 -143v125m1 -125v143m1 -143v143m1 -143v143m1 -143v143m1 -143v143m1 -143v143m1 -143v143m1 -143v143m1 -143v143m1 -105v80m1 -93v118m1 -143v143m1 -143v143m1 -143v143m1 -114v98m1 -127v143m1 -122v122m1 -143v143m1 -143v143m1 -143v143m1 -143v143m1 -143v143m1 -143v143m1 -143v121m1 -121v143m1 -125v125m1 -143v143m1 -143v139m1 -139v132m1 -132v143m1 -143v143m1 -143v127m1 -127v143m1 -143v111m1 -111v143m1 -143v143m1 -143v122m1 -95v116m1 -143v143m1 -143v143m1 -143v143m1 -116v116m1 -143v143m1 -143v143m1 -118v118m1 -143v143m1 -143v143m1 -116v116m1 -143v124m1 -124v143m1 -143v143m1 -143v143m1 -143v143m1 -136v136m1 -143v143m1 -143v143m1 -143v143m1 -143v143m1 -143v125m1 -125v143m1 -143v143m1 -143v122m1 -122v143m1 -143v143m1 -143v143m1 -143v143m1 -121v121m1 -143v143m1 -143v143m1 -143v143m1 -134v134m1 -143v143m1 -143v143m1 -143v143m1 -143v143m1 -143v136m1 -136v143m1 -143v143m1 -143v143m1 -143v143m1 -108v108m1 -143v143m1 -116v116m1 -143v143m1 -143v116m1 -116v143m1 -143v143m1 -139v139m1 -143v143m1 -117v117m1 -143v143m1 -132v132m1 -126v110m1 -127v143m1 -143v106m1 -106v143m1 -143v143m1 -143v143m1 -143v143m1 -143v143m1 -107v107m1 -143v141m1 -141v143m1 -143v127m1 -99v99m1 -93v109m1 -127v101m1 -117v143m1 -143v143m1 -143v143m1 -143v143m1 -143v143m1 -143v143m1 -143v143m1 -143v143m1 -143v143m1 -143v143m1 -143v143m1 -143v143m1 -143v143m1 -143v143m1 -143v143m1 -143v143m1 -143v143m1 -143v143m1 -143v143m1 -143v143m1 -143v143m1 -110v110m1 -143v143m1 -143v139m1 -139v143m1 -143v143m1 -143v143m1 -125v98m1 -116v143m1 -143v143m1 -143v143m1 -143v108m1 -86v121m1 -126v126m1 -124v124m1 -143v143m1 -120v111m1 -115v124m1 -143v143m1 -143v143m1 -111v111m1 -143v143m1 -143v143m1 -143v143m1 -143v129m1 -129v143m1 -143v143m1 -143v116m1 -97v119m1 -138v143m1 -143v143m1 -143v143m1 -143v143m1 -143v143m1 -143v118m1 -118v143m1 -143v143m1 -143v143m1 -122v122m1 -143v143m1 -143v143m1 -143v143m1 -143v143m1 -124v124m1 -143v143m1 -143v143m1 -143v143m1 -128v128m1 -143v121m1 -121v143m1 -143v143m1 -127v127m1 -123v123m1 -116v116m1 -143v107m1 -71v107m1 -143v143m1 -143v143m1 -143v143m1 -113v113m1 -143v143m1 -117v117m1 -143v143m1 -143v143m1 -110v110m1 -143v143m1 -143v143m1 -143v143m1 -143v143m1 -143v143m1 -143v143m1 -143v143m1 -143v111m1 -111v143m1 -143v143m1 -143v143m1 -143v143m1 -143v143m1 -105v105m1 -143v143m1 -143v143m1 -143v143m1 -143v143m1 -143v143m1 -143v143m1 -143v143m1 -143v143m1 -143v143m1 -143v143m1 -143v143m1 -143v143m1 -143v141m1 -125v127m1 -143v143m1 -143v143m1 -143v143m1 -109v109m1 -128v117m1 -132v141m1 -141v143m1 -143v143m1 -143v105m1 -105v143m1 -143v143m1 -123v123m1 -143v143m1 -143v143m1 -143v143m1 -143v143m1 -141v141m1 -143v137m1 -115v94m1 -99v126m1 -143v143m1 -130v130m1 -143v143m1 -140v140m1 -143v143m1 -143v143m1 -143v111m1 -94v126m1 -143v143m1 -143v143m1 -143v143m1 -143v143m1 -143v143m1 -143v143m1 -143v135m1 -135v143m1 -143v125m1 -125v143m1 -143v143m1 -143v143m1 -143v143m1 -143v111m1 -101v133m1 -143v143m1 -125v88m1 -106v143m1 -143v111m1 -111v143m1 -143v143m1 -143v143m1 -143v143m1 -143v143m1 -143v143m1 -143v143m1 -139v139m1 -143v143m1 -143v143m1 -143v143m1 -143v143m1 -143v143m1 -143v143m1 -143v143m1 -143v143m1 -143v131m1 -131v108m1 -108v108m1 -108v143m1 -110v110m1 -143v143m1 -143v143m1 -143v143m1 -143v143m1 -143v143m1 -143v143m1 -143v143m1 -143v143m1 -143v143m1 -143v143m1 -143v143m1 -143v143m1 -143v143m1 -143v143m1 -143v112m1 -112v143m1 -143v143m1 -143v122m1 -122v143m1 -143v143m1 -106v75m1 -80v78m1 -73v86m1 -100v95m1 -91v91m1 -90v93m1 -88v85m1 -47v1m1 -1v1m1 -50v105m1 -98v91m1 -98v103m1 -95v83m1 -86v99m1 -97v83m1 -97v112m1 -104v92m1 -44v1m1 -1v1m1 -42v79m1 -109v143m1 -143v113m1 -113v143m1 -143v143m1 -143v143m1 -143v143m1 -143v143m1 -143v143m1 -143v143m1 -143v143m1 -143v143m1 -143v143m1 -143v143m1 -143v143m1 -143v143m1 -143v123m1 -123v143m1 -143v143m1 -133v133m1 -143v143m1 -143v143m1 -143v143m1 -143v143m1 -143v143m1 -128v128m1 -143v143m1 -143v143m1 -143v143m1 -143v135m1 -135v143m1 -143v143m1 -143v143m1 -143v143m1 -143v143m1 -143v143m1 -143v143m1 -143v143m1 -143v143m1 -143v143m1 -139v139m1 -143v143m1 -143v143m1 -143v115m1 -115v143m1 -143v143m1 -143v115m1 -115v143m1 -143v143m1 -143v143m1 -115v115m1 -143v143m1 -143v143m1 -143v143m1 -143v143m1 -143v132m1 -132v143m1 -143v143m1 -113v113m1 -143v143m1 -143v143m1 -143v143m1 -143v143m1 -143v143m1 -143v143m1 -143v143m1 -143v143m1 -143v143m1 -143v143m1 -143v143m1 -143v143m1 -143v143m1 -143v143m1 -143v143m1 -143v143m1 -143v143m1 -143v143m1 -143v143m1 -143v143m1 -143v143m1 -143v143m1 -143v143m1 -131v104m1 -116v143m1 -143v143m1 -143v143m1 -143v143m1 -143v143m1 -143v143m1 -143v143m1 -143v143m1 -143v143m1 -143v143m1 -133v133m1 -143v143m1 -143v143m1 -143v143m1 -143v115m1 -115v131m1 -131v143m1 -143v143m1 -143v143m1 -143v143m1 -143v143m1 -143v143m1 -143v127m1 -127v143m1 -143v143m1 -143v143m1 -143v143m1 -143v143m1 -143v143m1 -143v143m1 -143v143m1 -143v143m1 -143v143m1 -143v143m1 -143v143m1 -143v143m1 -143v119m1 -119v134m1 -134v143m1 -143v143m1 -143v143m1 -143v143m1 -143v143m1 -143v143m1 -143v143m1 -143v143m1 -143v129m1 -129v143m1 -143v126m1 -126v125m1 -125v143m1 -143v143m1 -143v143m1 -143v143m1 -143v143m1 -143v143m1 -143v143m1 -143v143m1 -143v143m1 -143v143m1 -143v143m1 -143v143m1 -143v143m1 -143v143m1 -143v143m1 -143v143m1 -143v143m1 -143v143m1 -126v96m1 -91v121m1 -139v139m1 -143v143m1 -143v143m1 -143v143m1 -143v143m1 -121v121m1 -143v143m1 -143v143m1 -143v143m1 -143v143m1 -127v127m1 -143v143m1 -143v143m1 -143v143m1 -143v143m1 -143v143m1 -143v143m1 -143v143m1 -143v143m1 -143v143m1 -143v143m1 -143v134m1 -131v140m1 -143v143m1 -143v143m1 -143v143m1 -143v143m1 -143v143m1 -115v115m1 -143v143m1 -131v131m1 -143v143m1 -143v143m1 -143v143m1 -143v143m1 -143v143m1 -143v116m1 -116v143m1 -143v143m1 -143v143m1 -143v143m1 -143v143m1 -143v143m1 -143v143m1 -143v143m1 -143v125m1 -125v143m1 -143v113m1 -85v115m1 -143v143m1 -143v143m1 -123v123m1 -143v143m1 -143v143m1 -127v118m1 -134v143m1 -143v143m1 -143v143m1 -143v143m1 -128v128m1 -143v143m1 -143v131m1 -131v143m1 -143v143m1 -118v118m1 -143v143m1 -143v143m1 -143v143m1 -143v143m1 -143v143m1 -143v143m1 -143v143m1 -143v143m1 -143v131m1 -131v143m1 -143v143m1 -143v143m1 -143v143m1 -143v143m1 -143v143m1 -143v143m1 -123v123m1 -143v143m1 -143v143m1 -143v143m1 -143v143m1 -143v143m1 -122v122m1 -143v143m1 -143v143m1 -124v124m1 -143v143m1 -129v119m1 -133v143m1 -143v143m1 -143v143m1 -143v143m1 -143v132m1 -132v143m1 -143v143m1 -143v112m1 -112v143m1 -143v143m1 -131v131m1 -124v124m1 -143v143m1 -143v143m1 -143v143m1 -143v143m1 -143v143m1 -143v143m1 -143v143m1 -143v143m1 -143v143m1 -143v143m1 -143v143m1 -143v143m1 -143v143m1 -143v143m1 -143v143m1 -143v143m1 -143v143m1 -143v143m1 -143v143m1 -143v143m1 -143v143m1 -143v143m1 -143v143m1 -143v143m1 -143v143m1 -143v143m1 -143v143m1 -143v143m1 -143v143m1 -143v143m1 -143v143m1 -143v143m1 -143v143m1 -143v143m1 -143v143m1 -143v143m1 -143v143m1 -143v143m1 -143v143m1 -143v143m1 -143v143m1 -143v143m1 -143v143m1 -143v143m1 -143v143m1 -143v143m1 -143v137m1 -108v114m1 -143v143m1 -117v117m1 -143v143m1 -143v143m1 -143v143m1 -143v143m1 -143v140m1 -140v143m1 -143v143m1 -143v126m1 -126v143m1 -143v143m1 -143v143m1 -111v111m1 -143v143m1 -143v143m1 -143v143m1 -143v143m1 -143v126m1 -126v143m1 -143v143m1 -143v143m1 -143v143m1 -143v143m1 -143v143m1 -121v96m1 -118v143m1 -143v143m1 -143v143m1 -143v143m1 -143v143m1 -143v143m1 -143v143m1 -138v138m1 -143v124m1 -124v143m1 -143v143m1 -130v130m1 -143v143m1 -112v112m1 -143v143m1 -143v143m1 -133v133m1 -143v143m1 -143v143m1 -143v143m1 -143v143m1 -143v143m1 -143v140m1 -140v128m1 -128v143m1 -143v143m1 -143v143m1 -143v143m1 -143v143m1 -143v143m1 -143v143m1 -143v143m1 -143v143m1 -143v143m1 -143v143m1 -143v143m1 -143v143m1 -143v143m1 -143v143m1 -133v133m1 -143v143m1 -138v138m1 -143v143m1 -128v128m1 -143v143m1 -143v118m1 -118v143m1 -143v143m1 -143v143m1 -143v143m1 -143v143m1 -143v143m1 -143v143m1 -143v143m1 -143v119m1 -119v143m1 -143v143m1 -143v143m1 -138v138m1 -143v143m1 -143v143m1 -143v143m1 -143v139m1 -139v143m1 -143v143m1 -143v143m1 -143v143m1 -143v143m1 -143v143m1 -143v143m1 -143v143m1 -143v143m1 -143v143m1 -143v143m1 -143v143m1 -143v143m1 -143v143m1 -143v143m1 -143v143m1 -143v143m1 -143v143m1 -114v114m1 -143v143m1 -143v143m1 -143v143m1 -143v143m1 -143v143m1 -143v143m1 -143v143m1 -143v143m1 -143v143m1 -143v143m1 -143v143m1 -143v143m1 -143v143m1 -143v143m1 -143v143m1 -143v143m1 -143v143m1 -143v143m1 -143v143m1 -143v143m1 -143v143m1 -143v143m1 -143v143m1 -143v143m1 -143v143m1 -143v143m1 -143v143m1 -143v143m1 -143v143m1 -143v143m1 -143v143m1 -143v143m1 -143v143m1 -143v143m1 -143v143m1 -143v143m1 -143v143m1 -143v143m1 -143v143m1 -143v143m1 -143v143m1 -143v143m1 -143v143m1 -116v116m1 -143v143m1 -143v143m1 -143v143m1 -143v143m1 -143v143m1 -143v143m1 -143v143m1 -143v143m1 -143v143m1 -143v143m1 -143v119m1 -119v143m1 -143v143m1 -143v143m1 -143v143m1 -143v143m1 -143v143m1 -143v143m1 -143v143m1 -143v143m1 -143v143m1 -143v143m1 -143v143m1 -143v143m1 -143v143m1 -127v127m1 -143v143m1 -143v143m1 -143v143m1 -143v143m1 -143v143m1 -143v143m1 -143v143m1 -143v143m1 -143v143m1 -143v143m1 -143v143m1 -143v143m1 -143v143m1 -143v143m1 -139v139m1 -143v143m1 -143v143m1 -143v143m1 -143v143m1 -143v143m1 -143v143m1 -143v143m1 -143v143m1 -125v125m1 -143v143m1 -143v123m1 -123v143m1 -143v143m1 -143v143m1 -143v143m1 -143v143m1 -113v113m1 -143v143m1 -143v143m1 -143v143m1 -143v143m1 -143v143m1 -143v143m1 -143v143m1 -143v143m1 -143v124m1 -124v143m1 -143v143m1 -143v143m1 -120v120m1 -143v143m1 -143v143m1 -143v143m1 -143v143m1 -143v143m1 -130v130m1 -143v143m1 -143v143m1 -143v143m1 -143v143m1 -143v143m1 -143v143m1 -143v143m1 -143v143m1 -143v143m1 -143v143m1 -143v143m1 -143v127m1 -102v118m1 -143v143m1 -143v143m1 -143v143m1 -143v143m1 -143v143m1 -143v143m1 -143v143m1 -143v143m1 -143v143m1 -137v137m1 -143v143m1 -143v143m1 -143v143m1 -143v143m1 -143v143m1 -143v143m1 -143v143m1 -143v143m1 -143v143m1 -143v143m1 -143v143m1 -143v143m1 -143v143m1 -143v143m1 -143v143m1 -143v143m1 -143v143m1 -143v143m1 -143v143m1 -143v143m1 -143v143m1 -143v143m1 -143v143m1 -143v143m1 -143v143m1 -143v143m1 -143v143m1 -143v143m1 -143v143m1 -143v143m1 -143v143m1 -143v127m1 -127v143m1 -143v143m1 -143v143m1 -143v143m1 -137v134m1 -140v143m1 -143v143m1 -143v143m1 -143v143m1 -143v143m1 -143v119m1 -119v143m1 -143v143m1 -143v143m1 -143v143m1 -137v137m1 -104v104m1 -119v119m1 -124v118m1 -104v110m1 -143v143m1 -143v117m1 -70v96m1 -143v130m1 -115v128m1 -143v143m1 -122v122m1 -107v107m1 -143v143m1 -143v93m1 -93v143m1 -119v119m1 -143v143m1 -141v141m1 -95v79m1 -115v121m1 -133v104m1 -104v143m1 -110v110m1 -143v143m1 -103v103m1 -143v143m1 -104v104m1 -108v93m1 -114v129m1 -143v143m1 -143v143m1 -143v143m1 -143v143m1 -143v143m1 -124v124m1 -143v143m1 -143v118m1 -80v105m1 -143v143m1 -143v143m1 -143v143m1 -143v143m1 -143v143m1 -143v143m1 -116v116m1 -143v143m1 -118v118m1 -107v107m1 -143v143m1 -143v143m1 -143v143m1 -143v143m1 -130v130m1 -131v131m1 -108v108m1 -143v141m1 -141v143m1 -130v130m1 -119v119m1 -127v111m1 -127v122m1 -122v143m1 -143v116m1 -100v127m1 -143v143m1 -143v143m1 -143v143m1 -143v143m1 -143v143m1 -143v143m1 -143v128m1 -128v143m1 -117v117m1 -143v143m1 -138v138m1 -143v143m1 -143v143m1 -143v143m1 -128v128m1 -143v143m1 -143v143m1 -143v143m1 -136v136m1 -143v121m1 -121v143m1 -143v143m1 -143v143m1 -134v134m1 -111v80m1 -112v143m1 -143v125m1 -125v143m1 -143v143m1 -143v143m1 -143v143m1 -143v143m1 -108v108m1 -143v143m1 -143v143m1 -143v143m1 -143v143m1 -143v143m1 -129v129m1 -143v143m1 -143v143m1 -143v143m1 -143v143m1 -143v143m1 -143v143m1 -143v143m1 -143v143m1 -143v143m1 -143v143m1 -117v117m1 -143v143m1 -143v143m1 -143v143m1 -109v109m1 -143v143m1 -143v133m1 -133v143m1 -129v129m1 -109v109m1 -143v143m1 -143v143m1 -143v143m1 -118v118m1 -143v143m1 -143v143m1 -130v107m1 -120v143m1 -143v143m1 -143v143m1 -116v116m1 -143v143m1 -143v143m1 -143v143m1 -143v140m1 -140v143m1 -143v143m1 -143v143m1 -143v143m1 -143v143m1 -109v77m1 -111v121m1 -121v143m1 -143v143m1 -143v143m1 -143v105m1 -105v143m1 -143v143m1 -143v143m1 -143v143m1 -143v143m1 -143v143m1 -113v113m1 -143v109m1 -109v122m1 -122v143m1 -143v143m1 -143v143m1 -143v143m1 -122v122m1 -143v143m1 -143v143m1 -143v143m1 -143v143m1 -143v143m1 -143v143m1 -143v143m1 -143v139m1 -123v127m1 -143v143m1 -143v132m1 -132v143m1 -143v143m1 -143v143m1 -143v143m1 -127v127m1 -143v143m1 -120v120m1 -140v128m1 -116v128m1 -143v143m1 -143v143m1 -143v143m1 -143v134m1 -134v143m1 -117v117m1 -143v143m1 -143v143m1 -112v75m1 -82v119m1 -143v138m1 -138v143m1 -143v143m1 -143v143m1 -123v123m1 -143v143m1 -143v143m1 -143v143m1 -143v143m1 -143v143m1 -143v143m1 -143v143m1 -136v136m1 -143v115m1 -115v143m1 -108v108m1 -143v143m1 -143v143m1 -143v143m1 -143v143m1 -143v143m1 -143v143m1 -143v143m1 -143v143m1 -143v143m1 -143v143m1 -143v143m1 -143v143m1 -143v133m1 -133v143m1 -143v143m1 -143v143m1 -143v143m1 -143v143m1 -143v143m1 -143v143m1 -143v143m1 -143v143m1 -143v143m1 -143v143m1 -143v143m1 -143v143m1 -143v143m1 -143v143m1 -143v143m1 -143v143m1 -143v143m1 -143v143m1 -143v143m1 -143v143m1 -143v143m1 -143v143m1 -143v143m1 -143v143m1 -143v143m1 -143v143m1 -143v143m1 -143v143m1 -143v143m1 -143v143m1 -143v143m1 -143v143m1 -143v143m1 -143v143m1 -143v143m1 -143v143m1 -143v143m1 -143v143m1 -143v143m1 -143v143m1 -143v143m1 -143v143m1 -143v143m1 -143v143m1 -143v143m1 -143v143m1 -143v143m1 -143v143m1 -143v143m1 -143v143m1 -143v143m1 -143v143m1 -143v143m1 -143v143m1 -143v143m1 -143v143m1 -143v143m1 -143v143m1 -143v143m1 -143v143m1 -143v143m1 -143v143m1 -143v143m1 -143v143m1 -143v143m1 -143v143m1 -143v143m1 -143v143m1 -143v143m1 -143v143m1 -143v143m1 -143v143m1 -143v143m1 -143v143m1 -143v143m1 -143v143m1 -143v143m1 -143v143m1 -143v143m1 -143v143m1 -143v143m1 -143v143m1 -143v143m1 -143v143m1 -143v143m1 -143v143m1 -143v143m1 -143v143m1 -143v143m1 -143v143m1 -143v143m1 -143v143m1 -143v143m1 -143v143m1 -143v143m1 -143v143m1 -143v143m1 -143v143m1 -143v143m1 -143v143m1 -143v143m1 -143v143m1 -143v143m1 -143v143m1 -143v143m1 -143v143m1 -143v143m1 -143v143m1 -143v143m1 -143v143m1 -143v143m1 -143v143m1 -143v143m1 -143v143m1 -143v143m1 -143v143m1 -143v143m1 -143v143m1 -143v143m1 -143v143m1 -143v143m1 -143v143m1 -143v143m1 -143v143m1 -143v143m1 -143v143m1 -143v143m1 -143v143m1 -143v143m1 -143v143m1 -143v143m1 -143v143m1 -143v143m1 -143v143m1 -143v143m1 -143v143m1 -143v143m1 -143v143m1 -143v143m1 -143v143m1 -143v143m1 -143v143m1 -143v143m1 -143v143m1 -143v143m1 -143v143m1 -143v143m1 -143v143m1 -143v143m1 -143v143m1 -138v138m1 -143v143m1 -143v143m1 -143v143m1 -143v143m1 -143v143m1 -143v143m1 -143v143m1 -143v143m1 -143v143m1 -143v143m1 -143v143m1 -143v143m1 -143v143m1 -143v143m1 -143v143m1 -143v143m1 -143v143m1 -143v143m1 -143v143m1 -143v143m1 -143v143m1 -143v143m1 -143v143m1 -143v143m1 -143v143m1 -143v143m1 -143v143m1 -143v143m1 -143v143m1 -143v143m1 -143v143m1 -143v143m1 -143v143m1 -143v143m1 -143v143m1 -143v143m1 -143v137m1 -137v143m1 -143v143m1 -143v143m1 -143v143m1 -143v143m1 -143v143m1 -143v143m1 -143v143m1 -143v143m1 -143v143m1 -143v143m1 -143v143m1 -143v143m1 -143v143m1 -143v143m1 -143v143m1 -143v143m1 -143v143m1 -143v143m1 -143v143m1 -143v143m1 -143v143m1 -143v143m1 -143v143m1 -143v143m1 -143v143m1 -143v143m1 -143v143m1 -143v143m1 -143v143m1 -140v140m1 -143v143m1 -143v143m1 -143v143m1 -143v143m1 -143v143m1 -143v143m1 -143v143m1 -143v130m1 -130v143m1 -143v130m1 -130v143m1 -143v143m1 -143v143m1 -143v143m1 -143v143m1 -143v143m1 -143v143m1 -143v143m1 -143v143m1 -143v143m1 -143v143m1 -143v143m1 -143v143m1 -143v143m1 -143v143m1 -143v143m1 -143v143m1 -143v143m1 -143v143m1 -143v143m1 -143v143m1 -143v143m1 -143v143m1 -143v143m1 -143v143m1 -80v16m1 -79v143m1 -143v143m1 -80v16m1 -79v143m1 -143v143m1 -143v143m1 -143v143m1 -129v129m1 -143v143m1 -143v143m1 -143v143m1 -143v143m1 -143v143m1 -143v130m1 -130v143m1 -143v143m1 -143v143m1 -143v143m1 -143v143m1 -143v143m1 -143v143m1 -143v143m1 -143v143m1 -143v143m1 -143v143m1 -143v143m1 -143v143m1 -136v136m1 -143v143m1 -143v143m1 -143v143m1 -143v143m1 -143v143m1 -143v143m1 -143v143m1 -143v143m1 -143v143m1 -143v143m1 -143v143m1 -143v143m1 -143v143m1 -143v143m1 -143v143m1 -143v143m1 -143v143m1 -143v143m1 -143v143m1 -143v143m1 -143v143m1 -143v143m1 -143v143m1 -143v143m1 -143v143m1 -136v136m1 -143v143m1 -130v130m1 -143v143m1 -143v143m1 -143v143m1 -143v143m1 -143v143m1 -143v143m1 -140v140m1 -143v143m1 -143v143m1 -143v143m1 -143v143m1 -143v143m1 -143v143m1 -143v143m1 -143v143m1 -143v143m1 -143v143m1 -143v143m1 -143v143m1 -143v143m1 -143v143m1 -143v143m1 -143v143m1 -143v143m1 -143v143m1 -143v143m1 -143v143m1 -143v143m1 -143v143m1 -143v143m1 -143v143m1 -143v143m1 -143v143m1 -143v143m1 -143v143m1 -143v143m1 -143v143m1 -143v143m1 -143v143m1 -143v143m1 -143v143m1 -143v143m1 -143v143m1 -143v143m1 -143v143m1 -143v143m1 -143v143m1 -143v143m1 -143v143m1 -143v143m1 -143v143m1 -143v143m1 -143v143m1 -143v143m1 -143v143m1 -143v143m1 -143v143m1 -143v143m1 -143v143m1 -143v143m1 -143v143m1 -143v143m1 -143v143m1 -128v128m1 -143v143m1 -129v129m1 -143v143m1 -143v143m1 -143v135m1 -135v143m1 -143v143m1 -143v143m1 -143v143m1 -143v143m1 -143v143m1 -143v143m1 -143v143m1 -143v143m1 -143v143m1 -143v143m1 -143v143m1 -143v143m1 -143v143m1 -143v143m1 -143v143m1 -143v143m1 -143v143m1 -143v143m1 -143v143m1 -143v143m1 -143v143m1 -143v143m1 -143v143m1 -143v143m1 -143v143m1 -143v143m1 -143v128m1 -128v143m1 -143v143m1 -143v143m1 -143v143m1 -143v143m1 -143v143m1 -143v143m1 -143v143m1 -143v143m1 -143v143m1 -143v143m1 -143v143m1 -143v143m1 -143v143m1 -143v143m1 -143v143m1 -143v143m1 -143v143m1 -143v143m1 -143v143m1 -143v143m1 -143v143m1 -143v143m1 -143v143m1 -143v143m1 -143v143m1 -143v143m1 -143v143m1 -143v143m1 -143v143m1 -143v143m1 -143v143m1 -143v143m1 -143v143m1 -143v143m1 -143v143m1 -143v143m1 -143v143m1 -143v131m1 -131v143m1 -143v135m1 -135v143m1 -143v143m1 -143v143m1 -143v143m1 -143v143m1 -143v143m1 -143v143m1 -143v143m1 -143v143m1 -143v143m1 -143v143m1 -143v137m1 -137v143m1 -143v143m1 -143v143m1 -143v143m1 -133v133m1 -143v143m1 -143v143m1 -143v143m1 -143v143m1 -143v143m1 -143v143m1 -143v143m1 -143v143m1 -143v143m1 -143v143m1 -143v143m1 -143v143m1 -143v143m1 -143v143m1 -143v143m1 -143v143m1 -143v143m1 -143v143m1 -143v143m1 -143v143m1 -143v143m1 -143v143m1 -143v143m1 -143v143m1 -143v143m1 -143v143m1 -143v143m1 -143v143m1 -143v143m1 -143v143m1 -143v143m1 -143v143m1 -143v143m1 -143v143m1 -143v143m1 -143v143m1 -143v143m1 -132v132m1 -143v143m1 -143v143m1 -143v143m1 -143v143m1 -143v143m1 -143v143m1 -143v143m1 -143v143m1 -140v140m1 -143v143m1 -143v143m1 -143v143m1 -143v143m1 -143v143m1 -143v143m1 -143v143m1 -143v143m1 -143v143m1 -143v143m1 -143v143m1 -143v143m1 -143v143m1 -143v143m1 -143v143m1 -143v143m1 -143v143m1 -143v143m1 -143v143m1 -143v143m1 -143v143m1 -143v143m1 -143v143m1 -143v143m1 -143v143m1 -143v143m1 -143v143m1 -143v143m1 -143v143m1 -143v143m1 -134v134m1 -143v143m1 -143v143m1 -143v143m1 -143v143m1 -143v143m1 -143v143m1 -143v143m1 -143v143m1 -143v143m1 -143v143m1 -143v143m1 -143v143m1 -143v143m1 -143v143m1 -143v143m1 -143v143m1 -143v143m1 -143v143m1 -143v143m1 -143v143m1 -143v143m1 -143v143m1 -143v143m1 -143v143m1 -143v143m1 -143v143m1 -143v143m1 -143v143m1 -143v143m1 -143v143m1 -143v133m1 -133v143m1 -143v143m1 -143v143m1 -143v143m1 -143v143m1 -143v143m1 -143v143m1 -143v140m1 -140v143m1 -143v143m1 -143v143m1 -143v143m1 -143v143m1 -143v143m1 -143v143m1 -143v143m1 -140v140m1 -143v143m1 -128v128m1 -143v143m1 -143v143m1 -143v143m1 -143v128m1 -128v143m1 -143v143m1 -143v143m1 -143v143m1 -143v143m1 -143v143m1 -143v143m1 -143v143m1 -143v143m1 -143v143m1 -143v143m1 -143v143m1 -143v143m1 -143v143m1 -143v143m1 -143v143m1 -143v143m1 -143v143m1 -143v143m1 -143v143m1 -143v143m1 -143v143m1 -143v143m1 -143v143m1 -143v143m1 -143v143m1 -143v143m1 -143v143m1 -143v143m1 -143v143m1 -143v143m1 -143v143m1 -143v143m1 -143v143m1 -143v143m1 -143v143m1 -143v143m1 -143v143m1 -143v143m1 -143v143m1 -143v143m1 -143v143m1 -143v133m1 -133v143m1 -143v143m1 -143v143m1 -143v143m1 -143v143m1 -143v143m1 -143v143m1 -143v143m1 -143v143m1 -143v143m1 -143v143m1 -143v143m1 -143v143m1 -143v143m1 -143v143m1 -143v143m1 -143v143m1 -143v143m1 -143v143m1 -143v143m1 -143v143m1 -143v143m1 -143v143m1 -143v143m1 -143v143m1 -143v143m1 -143v143m1 -143v143m1 -143v143m1 -143v143m1 -143v143m1 -143v143m1 -143v143m1 -143v143m1 -143v143m1 -143v143m1 -143v143m1 -143v143m1 -143v143m1 -143v143m1 -143v143m1 -143v143m1 -143v138m1 -138v143m1 -143v143m1 -143v143m1 -143v143m1 -143v143m1 -143v143m1 -143v143m1 -143v143m1 -143v143m1 -143v143m1 -143v143m1 -143v143m1 -143v143m1 -143v143m1 -143v143m1 -143v143m1 -143v143m1 -143v143m1 -143v143m1 -143v143m1 -143v143m1 -143v143m1 -143v143m1 -143v143m1 -143v143m1 -143v143m1 -143v143m1 -143v143m1 -143v143m1 -143v143m1 -143v143m1 -143v143m1 -143v143m1 -143v143m1 -143v143m1 -143v143m1 -143v143m1 -143v143m1 -143v143m1 -143v143m1 -143v143m1 -143v143m1 -143v143m1 -143v143m1 -143v143m1 -143v143m1 -143v143m1 -143v143m1 -143v143m1 -143v143m1 -143v143m1 -143v143m1 -143v143m1 -143v143m1 -143v143m1 -143v143m1 -143v143m1 -143v143m1 -143v143m1 -143v143m1 -143v143m1 -143v143m1 -143v143m1 -143v143m1 -143v143m1 -143v143m1 -143v143m1 -143v138m1 -138v143m1 -143v143m1 -143v143m1 -143v143m1 -143v143m1 -143v143m1 -143v143m1 -143v143m1 -143v143m1 -143v143m1 -143v143m1 -143v143m1 -143v143m1 -143v143m1 -143v139m1 -139v143m1 -143v143m1 -143v143m1 -143v143m1 -143v143m1 -143v143m1 -143v143m1 -143v143m1 -143v143m1 -143v143m1 -143v143m1 -143v143m1 -143v143m1 -143v143m1 -143v143m1 -143v143m1 -143v143m1 -143v143m1 -143v143m1 -143v143m1 -143v143m1 -143v143m1 -135v135m1 -143v143m1 -143v143m1 -143v143m1 -143v143m1 -143v143m1 -143v143m1 -143v143m1 -143v143m1 -110v77m1 -60v43m1 -35v27m1 -22v17m1 -13v9m1 -7v5" stroke="#3232c8" stroke-width="1" fill="none"/><path d="M139.5 531v47m1 -49v51m1 -52v53m1 -53v53m1 -45v37m1 -42v47m1 -46v45m1 -42v39m1 -39v39m1 -40v41m1 -42v43m1 -39v35m1 -39v43m1 -44v45m1 -35v25m1 -30v35m1 -36v37m1 -39v41m1 -41v41m1 -40v39m1 -41v43m1 -39v35m1 -37v39m1 -38v37m1 -40v43m1 -39v35m1 -37v39m1 -36v33m1 -30v27m1 -34v41m1 -39v37m1 -39v41m1 -40v39m1 -38v37m1 -36v35m1 -37v39m1 -39v39m1 -35v31m1 -35v39m1 -35v31m1 -33v35m1 -33v31m1 -32v33m1 -34v35m1 -30v25m1 -30v35m1 -31v27m1 -31v35m1 -33v31m1 -34v37m1 -36v35m1 -32v29m1 -29v29m1 -29v29m1 -29v29m1 -28v27m1 -28v29m1 -25v21m1 -24v27m1 -30v33m1 -29v25m1 -25v25m1 -29v33m1 -31v29m1 -30v31m1 -25v19m1 -25v31m1 -29v27m1 -28v29m1 -31v33m1 -31v29m1 -32v35m1 -33v31m1 -35v39m1 -35v31m1 -35v39m1 -39v39m1 -38v37m1 -38v39m1 -38v37m1 -39v41m1 -39v37m1 -38v39m1 -40v41m1 -42v43m1 -43v43m1 -40v37m1 -37v37m1 -32v27m1 -34v41m1 -44v47m1 -45v43m1 -45v47m1 -47v47m1 -40v33m1 -40v47m1 -49v51m1 -49v47m1 -47v47m1 -47v47m1 -54v61m1 -57v53m1 -51v49m1 -50v51m1 -51v51m1 -40v29m1 -36v43m1 -48v53m1 -50v47m1 -50v53m1 -48v43m1 -56v69m1 -61v53m1 -60v67m1 -60v53m1 -51v49m1 -49v49m1 -53v57m1 -55v53m1 -63v73m1 -63v53m1 -45v37m1 -46v55m1 -58v61m1 -59v57m1 -53v49m1 -56v63m1 -60v57m1 -70v83m1 -68v53m1 -55v57m1 -55v53m1 -61v69m1 -63v57m1 -58v59m1 -59v59m1 -57v55m1 -55v55m1 -54v53m1 -57v61m1 -59v57m1 -59v61m1 -68v75m1 -62v49m1 -50v51m1 -53v55m1 -55v55m1 -58v61m1 -62v63m1 -64v65m1 -60v55m1 -55v55m1 -52v49m1 -43v37m1 -51v65m1 -63v61m1 -62v63m1 -62v61m1 -60v59m1 -56v53m1 -65v77m1 -57v37m1 -47v57m1 -62v67m1 -60v53m1 -66v79m1 -77v75m1 -65v55m1 -70v85m1 -76v67m1 -61v55m1 -45v35m1 -48v61m1 -69v77m1 -73v69m1 -65v61m1 -58v55m1 -56v57m1 -61v65m1 -63v61m1 -76v91m1 -71v51m1 -51v51m1 -55v59m1 -59v59m1 -60v61m1 -58v55m1 -59v63m1 -50v37m1 -60v83m1 -71v59m1 -50v41m1 -52v63m1 -59v55m1 -56v57m1 -60v63m1 -62v61m1 -58v55m1 -66v77m1 -65v53m1 -56v59m1 -60v61m1 -67v73m1 -66v59m1 -58v57m1 -67v77m1 -66v55m1 -55v55m1 -51v47m1 -50v53m1 -58v63m1 -59v55m1 -69v83m1 -61v39m1 -43v47m1 -48v49m1 -53v57m1 -50v43m1 -53v63m1 -60v57m1 -65v73m1 -67v61m1 -57v53m1 -54v55m1 -52v49m1 -62v75m1 -66v57m1 -57v57m1 -56v55m1 -52v49m1 -48v47m1 -52v57m1 -53v49m1 -54v59m1 -52v45m1 -47v49m1 -52v55m1 -61v67m1 -52v37m1 -49v61m1 -59v57m1 -56v55m1 -51v47m1 -34v21m1 -19v17m1 -19v21m1 -20v19m1 -19v19m1 -19v19m1 -20v21m1 -22v23m1 -22v21m1 -19v17m1 -16v15m1 -18v21m1 -21v21m1 -20v19m1 -19v19m1 -20v21m1 -21v21m4 -20v19m1 -20v21m1 -20v19m1 -20v21m1 -21v21m1 -21v21m1 -22v23m1 -23v23m1 -24v25m1 -24v23m1 -20v17m1 -16v15m2 -21v27m1 -24v21m1 -24v27m1 -27v27m1 -27v27m1 -27v27m1 -25v23m1 -23v23m3 -32v41m1 -47v53m1 -44v35m1 -47v59m1 -50v41m1 -42v43m1 -42v41m1 -43v45m1 -43v41m1 -41v41m1 -44v47m1 -42v37m1 -39v41m1 -40v39m1 -38v37m1 -44v51m1 -51v51m1 -41v31m1 -40v49m1 -37v25m1 -32v39m1 -41v43m1 -41v39m1 -42v45m1 -45v45m1 -45v45m1 -42v39m1 -41v43m1 -45v47m1 -45v43m1 -49v55m1 -54v53m1 -46v39m1 -40v41m1 -40v39m1 -42v45m1 -46v47m1 -45v43m1 -39v35m1 -40v45m1 -48v51m1 -46v41m1 -46v51m1 -44v37m1 -44v51m1 -44v37m1 -46v55m1 -49v43m1 -40v37m1 -39v41m1 -51v61m1 -49v37m1 -46v55m1 -46v37m1 -37v37m1 -37v37m1 -41v45m1 -45v45m1 -42v39m1 -49v59m1 -48v37m1 -39v41m1 -42v43m1 -42v41m1 -43v45m1 -45v45m1 -45v45m1 -45v45m1 -42v39m1 -40v41m1 -39v37m1 -34v31m1 -38v45m1 -37v29m1 -34v39m1 -42v45m1 -42v39m1 -41v43m1 -42v41m1 -49v57m1 -51v45m1 -45v45m1 -48v51m1 -47v43m1 -40v37m1 -34v31m1 -39v47m1 -36v25m1 -32v39m1 -32v25m1 -35v45m1 -44v43m1 -46v49m1 -43v37m1 -44v51m1 -41v31m1 -37v43m1 -41v39m1 -32v25m1 -33v41m1 -42v43m1 -39v35m1 -37v39m1 -39v39m1 -43v47m1 -55v63m1 -50v37m1 -38v39m1 -39v39m1 -39v39m1 -44v49m1 -47v45m1 -43v41m1 -43v45m1 -58v71m1 -57v43m1 -55v67m1 -56v45m1 -48v51m1 -49v47m1 -46v45m1 -40v35m1 -41v47m1 -48v49m1 -53v57m1 -46v35m1 -41v47m1 -46v45m1 -45v45m1 -52v59m1 -49v39m1 -32v25m1 -34v43m1 -42v41m1 -34v27m1 -37v47m1 -46v45m1 -46v47m1 -43v39m1 -37v35m1 -42v49m1 -49v49m1 -49v49m1 -49v49m1 -49v49m1 -48v47m1 -54v61m1 -55v49m1 -43v37m1 -43v49m1 -54v59m1 -59v59m1 -51v43m1 -39v35m1 -41v47m1 -46v45m1 -57v69m1 -56v43m1 -46v49m1 -47v45m1 -42v39m1 -40v41m1 -41v41m1 -44v47m1 -59v71m1 -58v45m1 -43v41m1 -46v51m1 -49v47m1 -49v51m1 -49v47m1 -45v43m1 -47v51m1 -47v43m1 -44v45m1 -50v55m1 -53v51m1 -51v51m1 -49v47m1 -49v51m1 -52v53m1 -56v59m1 -51v43m1 -45v47m1 -45v43m1 -46v49m1 -45v41m1 -46v51m1 -60v69m1 -49v29m1 -38v47m1 -44v41m1 -60v79m1 -58v37m1 -43v49m1 -51v53m1 -58v63m1 -58v53m1 -51v49m1 -51v53m1 -54v55m1 -59v63m1 -60v57m1 -53v49m1 -47v45m1 -50v55m1 -52v49m1 -52v55m1 -55v55m1 -61v67m1 -58v49m1 -51v53m1 -54v55m1 -56v57m1 -56v55m1 -55v55m1 -56v57m1 -55v53m1 -55v57m1 -54v51m1 -53v55m1 -56v57m1 -53v49m1 -45v41m1 -47v53m1 -56v59m1 -55v51m1 -59v67m1 -59v51m1 -50v49m1 -46v43m1 -49v55m1 -55v55m1 -52v49m1 -48v47m1 -47v47m1 -49v51m1 -45v39m1 -47v55m1 -62v69m1 -63v57m1 -69v81m1 -56v31m1 -44v57m1 -55v53m1 -53v53m1 -46v39m1 -49v59m1 -54v49m1 -49v49m1 -51v53m1 -52v51m1 -49v47m1 -49v51m1 -50v49m1 -52v55m1 -61v67m1 -48v29m1 -42v55m1 -51v47m1 -51v55m1 -51v47m1 -50v53m1 -53v53m1 -51v49m1 -50v51m1 -50v49m1 -60v71m1 -62v53m1 -56v59m1 -57v55m1 -56v57m1 -52v47m1 -47v47m1 -42v37m1 -46v55m1 -54v53m1 -57v61m1 -58v55m1 -52v49m1 -54v59m1 -56v53m1 -52v51m1 -54v57m1 -57v57m1 -56v55m1 -53v51m1 -53v55m1 -57v59m1 -62v65m1 -61v57m1 -55v53m1 -53v53m1 -51v49m1 -66v83m1 -69v55m1 -54v53m1 -52v51m1 -54v57m1 -52v47m1 -49v51m1 -51v51m1 -52v53m1 -52v51m1 -50v49m1 -51v53m1 -63v73m1 -64v55m1 -51v47m1 -52v57m1 -47v37m1 -45v53m1 -53v53m1 -44v35m1 -43v51m1 -56v61m1 -56v51m1 -50v49m1 -54v59m1 -53v47m1 -51v55m1 -51v47m1 -48v49m1 -52v55m1 -51v47m1 -48v49m1 -49v49m1 -57v65m1 -56v47m1 -51v55m1 -49v43m1 -44v45m1 -41v37m1 -44v51m1 -54v57m1 -56v55m1 -45v35m1 -42v49m1 -52v55m1 -56v57m1 -54v51m1 -48v45m1 -49v53m1 -54v55m1 -56v57m1 -69v81m1 -58v35m1 -45v55m1 -46v37m1 -46v55m1 -58v61m1 -68v75m1 -64v53m1 -51v49m1 -48v47m1 -49v51m1 -54v57m1 -53v49m1 -52v55m1 -51v47m1 -46v45m1 -48v51m1 -51v51m1 -52v53m1 -60v67m1 -60v53m1 -52v51m1 -57v63m1 -56v49m1 -51v53m1 -51v49m1 -54v59m1 -63v67m1 -58v49m1 -50v51m1 -53v55m1 -54v53m1 -56v59m1 -57v55m1 -47v39m1 -46v53m1 -59v65m1 -59v53m1 -52v51m1 -64v77m1 -75v73m1 -61v49m1 -48v47m1 -48v49m1 -51v53m1 -51v49m1 -51v53m1 -52v51m1 -45v39m1 -43v47m1 -51v55m1 -50v45m1 -49v53m1 -49v45m1 -30v15m1 -17v19m1 -17v15m1 -16v17m1 -17v17m1 -17v17m1 -18v19m3 -20v21m1 -19v17m1 -18v19m1 -19v19m1 -18v17m1 -17v17m1 -18v19m1 -20v21m3 -15v9m1 -26v43m1 -42v41m1 -43v45m1 -46v47m1 -46v45m1 -46v47m1 -49v51m1 -52v53m1 -49v45m1 -47v49m1 -51v53m1 -58v63m1 -55v47m1 -47v47m1 -45v43m1 -55v67m1 -59v51m1 -52v53m1 -49v45m1 -45v45m1 -48v51m1 -52v53m1 -51v49m1 -54v59m1 -51v43m1 -47v51m1 -52v53m1 -57v61m1 -54v47m1 -44v41m1 -44v47m1 -56v65m1 -53v41m1 -44v47m1 -50v53m1 -46v39m1 -40v41m1 -45v49m1 -49v49m1 -53v57m1 -49v41m1 -56v71m1 -59v47m1 -46v45m1 -38v31m1 -40v49m1 -50v51m1 -41v31m1 -40v49m1 -48v47m1 -57v67m1 -52v37m1 -43v49m1 -42v35m1 -44v53m1 -55v57m1 -51v45m1 -46v47m1 -50v53m1 -50v47m1 -48v49m1 -49v49m1 -38v27m1 -38v49m1 -48v47m1 -48v49m1 -46v43m1 -42v41m1 -45v49m1 -55v61m1 -51v41m1 -44v47m1 -47v47m1 -51v55m1 -49v43m1 -42v41m1 -41v41m1 -50v59m1 -51v43m1 -48v53m1 -43v33m1 -37v41m1 -46v51m1 -48v45m1 -40v35m1 -40v45m1 -48v51m1 -50v49m1 -45v41m1 -52v63m1 -53v43m1 -39v35m1 -48v61m1 -54v47m1 -47v47m1 -46v45m1 -43v41m1 -45v49m1 -45v41m1 -41v41m1 -45v49m1 -46v43m1 -42v41m1 -35v29m1 -38v47m1 -43v39m1 -40v41m1 -53v65m1 -58v51m1 -46v41m1 -37v33m1 -40v47m1 -47v47m1 -49v51m1 -47v43m1 -54v65m1 -58v51m1 -52v53m1 -51v49m1 -57v65m1 -60v55m1 -51v47m1 -46v45m1 -43v41m1 -53v65m1 -55v45m1 -47v49m1 -49v49m1 -44v39m1 -43v47m1 -46v45m1 -44v43m1 -41v39m1 -40v41m1 -45v49m1 -49v49m1 -48v47m1 -40v33m1 -39v45m1 -55v65m1 -55v45m1 -47v49m1 -46v43m1 -36v29m1 -38v47m1 -48v49m1 -45v41m1 -44v47m1 -38v29m1 -36v43m1 -44v45m1 -44v43m1 -43v43m1 -44v45m1 -45v45m1 -42v39m1 -41v43m1 -47v51m1 -48v45m1 -41v37m1 -47v57m1 -48v39m1 -39v39m1 -41v43m1 -39v35m1 -46v57m1 -51v45m1 -41v37m1 -38v39m1 -41v43m1 -47v51m1 -54v57m1 -57v57m1 -53v49m1 -48v47m1 -44v41m1 -51v61m1 -56v51m1 -50v49m1 -48v47m1 -48v49m1 -50v51m1 -47v43m1 -47v51m1 -51v51m1 -47v43m1 -44v45m1 -45v45m1 -54v63m1 -61v59m1 -49v39m1 -40v41m1 -43v45m1 -45v45m1 -45v45m1 -43v41m1 -45v49m1 -45v41m1 -46v51m1 -46v41m1 -45v49m1 -45v41m1 -43v45m1 -45v45m1 -43v41m1 -46v51m1 -42v33m1 -43v53m1 -52v51m1 -44v37m1 -43v49m1 -48v47m1 -48v49m1 -46v43m1 -48v53m1 -51v49m1 -46v43m1 -43v43m1 -44v45m1 -45v45m1 -45v45m1 -45v45m1 -44v43m1 -48v53m1 -47v41m1 -41v41m1 -45v49m1 -44v39m1 -51v63m1 -53v43m1 -50v57m1 -52v47m1 -47v47m1 -43v39m1 -42v45m1 -44v43m1 -42v41m1 -51v61m1 -48v35m1 -33v31m1 -40v49m1 -49v49m1 -55v61m1 -52v43m1 -44v45m1 -47v49m1 -50v51m1 -51v51m1 -50v49m1 -47v45m1 -53v61m1 -52v43m1 -44v45m1 -53v61m1 -44v27m1 -38v49m1 -50v51m1 -49v47m1 -59v71m1 -59v47m1 -47v47m1 -53v59m1 -54v49m1 -51v53m1 -45v37m1 -40v43m1 -43v43m1 -44v45m1 -44v43m1 -42v41m1 -43v45m1 -39v33m1 -43v53m1 -44v35m1 -32v29m1 -38v47m1 -46v45m1 -47v49m1 -59v69m1 -63v57m1 -56v55m1 -56v57m1 -52v47m1 -50v53m1 -50v47m1 -48v49m1 -50v51m1 -50v49m1 -51v53m1 -55v57m1 -53v49m1 -50v51m1 -48v45m1 -48v51m1 -51v51m1 -49v47m1 -51v55m1 -60v65m1 -64v63m1 -58v53m1 -48v43m1 -55v67m1 -58v49m1 -43v37m1 -43v49m1 -50v51m1 -50v49m1 -50v51m1 -55v59m1 -55v51m1 -54v57m1 -52v47m1 -52v57m1 -48v39m1 -43v47m1 -49v51m1 -41v31m1 -41v51m1 -55v59m1 -66v73m1 -64v55m1 -57v59m1 -58v57m1 -57v57m1 -61v65m1 -62v59m1 -56v53m1 -57v61m1 -58v55m1 -58v61m1 -60v59m1 -58v57m1 -53v49m1 -46v43m1 -46v49m1 -49v49m1 -52v55m1 -57v59m1 -48v37m1 -37v37m1 -43v49m1 -50v51m1 -46v41m1 -43v45m1 -49v53m1 -56v59m1 -57v55m1 -55v55m1 -55v55m1 -55v55m1 -63v71m1 -71v71m1 -65v59m1 -50v41m1 -49v57m1 -57v57m1 -58v59m1 -56v53m1 -54v55m1 -59v63m1 -61v59m1 -59v59m1 -55v51m1 -50v49m1 -45v41m1 -45v49m1 -57v65m1 -63v61m1 -56v51m1 -50v49m1 -51v53m1 -59v65m1 -58v51m1 -54v57m1 -55v53m1 -51v49m1 -50v51m1 -49v47m1 -52v57m1 -56v55m1 -59v63m1 -60v57m1 -48v39m1 -49v59m1 -54v49m1 -51v53m1 -59v65m1 -59v53m1 -57v61m1 -57v53m1 -52v51m1 -53v55m1 -57v59m1 -55v51m1 -52v53m1 -45v37m1 -42v47m1 -50v53m1 -59v65m1 -61v57m1 -60v63m1 -58v53m1 -50v47m1 -46v45m1 -61v77m1 -65v53m1 -61v69m1 -58v47m1 -52v57m1 -57v57m1 -64v71m1 -62v53m1 -54v55m1 -54v53m1 -56v59m1 -45v31m1 -45v59m1 -57v55m1 -58v61m1 -61v61m1 -61v61m1 -60v59m1 -59v59m1 -58v57m1 -55v53m1 -52v51m1 -54v57m1 -56v55m1 -44v33m1 -42v51m1 -52v53m1 -55v57m1 -43v29m1 -40v51m1 -53v55m1 -47v39m1 -48v57m1 -52v47m1 -48v49m1 -50v51m1 -42v33m1 -34v35m1 -38v41m1 -56v71m1 -64v57m1 -59v61m1 -60v59m1 -49v39m1 -44v49m1 -45v41m1 -45v49m1 -60v71m1 -63v55m1 -58v61m1 -57v53m1 -55v57m1 -54v51m1 -54v57m1 -53v49m1 -55v61m1 -57v53m1 -64v75m1 -69v63m1 -57v51m1 -54v57m1 -53v49m1 -50v51m1 -53v55m1 -64v73m1 -63v53m1 -51v49m1 -52v55m1 -46v37m1 -44v51m1 -54v57m1 -53v49m1 -66v83m1 -63v43m1 -52v61m1 -61v61m1 -57v53m1 -55v57m1 -59v61m1 -59v57m1 -59v61m1 -52v43m1 -40v37m1 -48v59m1 -72v85m1 -78v71m1 -61v51m1 -44v37m1 -48v59m1 -56v53m1 -55v57m1 -58v59m1 -49v39m1 -46v53m1 -54v55m1 -53v51m1 -53v55m1 -67v79m1 -69v59m1 -68v77m1 -64v51m1 -63v75m1 -66v57m1 -57v57m1 -57v57m1 -54v51m1 -48v45m1 -49v53m1 -45v37m1 -45v53m1 -50v47m1 -51v55m1 -50v45m1 -52v59m1 -61v63m1 -61v59m1 -53v47m1 -51v55m1 -56v57m1 -54v51m1 -52v53m1 -54v55m1 -52v49m1 -54v59m1 -55v51m1 -55v59m1 -54v49m1 -61v73m1 -63v53m1 -48v43m1 -47v51m1 -53v55m1 -57v59m1 -56v53m1 -54v55m1 -56v57m1 -56v55m1 -54v53m1 -55v57m1 -55v53m1 -53v53m1 -55v57m1 -53v49m1 -51v53m1 -42v31m1 -45v59m1 -67v75m1 -66v57m1 -55v53m1 -51v49m1 -56v63m1 -60v57m1 -48v39m1 -47v55m1 -57v59m1 -62v65m1 -56v47m1 -48v49m1 -51v53m1 -52v51m1 -49v47m1 -51v55m1 -48v41m1 -45v49m1 -52v55m1 -51v47m1 -50v53m1 -52v51m1 -55v59m1 -56v53m1 -56v59m1 -58v57m1 -55v53m1 -51v49m1 -52v55m1 -54v53m1 -55v57m1 -56v55m1 -51v47m1 -50v53m1 -45v37m1 -45v53m1 -54v55m1 -53v51m1 -50v49m1 -55v61m1 -55v49m1 -49v49m1 -55v61m1 -45v29m1 -29v29m1 -29v29m1 -33v37m1 -41v45m1 -35v25m1 -26v27m1 -28v29m1 -27v25m1 -27v29m1 -27v25m1 -26v27m1 -27v27m1 -32v37m1 -31v25m1 -30v35m1 -33v31m1 -37v43m1 -37v31m1 -31v31m1 -30v29m1 -30v31m1 -28v25m1 -27v29m1 -34v39m1 -35v31m1 -29v27m1 -23v19m1 -31v43m1 -41v39m1 -35v31m1 -30v29m1 -37v45m1 -36v27m1 -28v29m1 -30v31m1 -36v41m1 -35v29m1 -36v43m1 -49v55m1 -54v53m1 -51v49m1 -51v53m1 -51v49m1 -53v57m1 -68v79m1 -76v73m1 -63v53m1 -51v49m1 -50v51m1 -46v41m1 -40v39m1 -38v37m1 -39v41m1 -41v41m1 -42v43m1 -50v57m1 -47v37m1 -37v37m1 -46v55m1 -42v29m1 -33v37m1 -40v43m1 -40v37m1 -38v39m1 -39v39m1 -36v33m1 -32v31m1 -36v41m1 -40v39m1 -41v43m1 -43v43m1 -46v49m1 -46v43m1 -39v35m1 -32v29m1 -35v41m1 -45v49m1 -42v35m1 -41v47m1 -44v41m1 -38v35m1 -37v39m1 -40v41m1 -38v35m1 -37v39m1 -38v37m1 -39v41m1 -37v33m1 -37v41m1 -38v35m1 -34v33m1 -35v37m1 -35v33m1 -33v33m1 -35v37m1 -35v33m1 -38v43m1 -42v41m1 -41v41m1 -41v41m1 -41v41m1 -41v41m1 -38v35m1 -38v41m1 -39v37m1 -37v37m1 -38v39m1 -31v23m1 -29v35m1 -32v29m1 -27v25m1 -34v43m1 -35v27m1 -31v35m1 -39v43m1 -39v35m1 -37v39m1 -40v41m1 -40v39m1 -33v27m1 -42v57m1 -47v37m1 -39v41m1 -42v43m1 -44v45m1 -42v39m1 -45v51m1 -47v43m1 -43v43m1 -52v61m1 -52v43m1 -40v37m1 -49v61m1 -45v29m1 -36v43m1 -39v35m1 -35v35m1 -39v43m1 -43v43m1 -46v49m1 -54v59m1 -52v45m1 -40v35m1 -37v39m1 -46v53m1 -45v37m1 -47v57m1 -54v51m1 -44v37m1 -31v25m1 -32v39m1 -38v37m1 -39v41m1 -41v41m1 -46v51m1 -44v37m1 -40v43m1 -45v47m1 -47v47m1 -45v43m1 -49v55m1 -47v39m1 -38v37m1 -38v39m1 -40v41m1 -38v35m1 -37v39m1 -36v33m1 -34v35m1 -37v39m1 -40v41m1 -36v31m1 -35v39m1 -42v45m1 -41v37m1 -40v43m1 -42v41m1 -40v39m1 -42v45m1 -45v45m1 -36v27m1 -36v45m1 -41v37m1 -40v43m1 -45v47m1 -39v31m1 -46v61m1 -48v35m1 -37v39m1 -42v45m1 -39v33m1 -34v35m1 -37v39m1 -40v41m1 -40v39m1 -43v47m1 -38v29m1 -43v57m1 -48v39m1 -41v43m1 -39v35m1 -36v37m1 -36v35m1 -29v23m1 -31v39m1 -37v35m1 -36v37m1 -33v29m1 -34v39m1 -50v61m1 -49v37m1 -39v41m1 -42v43m1 -39v35m1 -38v41m1 -41v41m1 -42v43m1 -41v39m1 -39v39m1 -34v29m1 -34v39m1 -48v57m1 -47v37m1 -45v53m1 -45v37m1 -39v41m1 -45v49m1 -44v39m1 -45v51m1 -57v63m1 -65v67m1 -60v53m1 -46v39m1 -49v59m1 -56v53m1 -60v67m1 -57v47m1 -58v69m1 -58v47m1 -50v53m1 -61v69m1 -64v59m1 -49v39m1 -52v65m1 -60v55m1 -58v61m1 -54v47m1 -41v35m1 -47v59m1 -54v49m1 -49v49m1 -49v49m1 -48v47m1 -52v57m1 -56v55m1 -51v47m1 -46v45m1 -45v45m1 -47v49m1 -62v75m1 -59v43m1 -44v45m1 -46v47m1 -46v45m1 -45v45m1 -47v49m1 -48v47m1 -47v47m1 -58v69m1 -57v45m1 -47v49m1 -52v55m1 -62v69m1 -60v51m1 -53v55m1 -55v55m1 -54v53m1 -56v59m1 -59v59m1 -56v53m1 -53v53m1 -54v55m1 -43v31m1 -54v77m1 -62v47m1 -47v47m1 -60v73m1 -61v49m1 -50v51m1 -59v67m1 -59v51m1 -54v57m1 -54v51m1 -51v51m1 -50v49m1 -54v59m1 -64v69m1 -64v59m1 -54v49m1 -49v49m1 -50v51m1 -43v35m1 -48v61m1 -63v65m1 -59v53m1 -64v75m1 -64v53m1 -51v49m1 -49v49m1 -64v79m1 -70v61m1 -60v59m1 -57v55m1 -46v37m1 -49v61m1 -61v61m1 -60v59m1 -66v73m1 -64v55m1 -55v55m1 -55v55m1 -58v61m1 -56v51m1 -56v61m1 -61v61m1 -61v61m1 -59v57m1 -58v59m1 -63v67m1 -58v49m1 -54v59m1 -55v51m1 -42v33m1 -35v37m1 -45v53m1 -51v49m1 -48v47m1 -49v51m1 -40v29m1 -40v51m1 -52v53m1 -53v53m1 -45v37m1 -52v67m1 -50v33m1 -42v51m1 -44v37m1 -47v57m1 -52v47m1 -42v37m1 -43v49m1 -48v47m1 -48v49m1 -48v47m1 -49v51m1 -40v29m1 -43v57m1 -56v55m1 -61v67m1 -62v57m1 -55v53m1 -53v53m1 -63v73m1 -63v53m1 -54v55m1 -53v51m1 -51v51m1 -58v65m1 -60v55m1 -52v49m1 -51v53m1 -49v45m1 -50v55m1 -56v57m1 -53v49m1 -48v47m1 -50v53m1 -54v55m1 -57v59m1 -52v45m1 -50v55m1 -62v69m1 -59v49m1 -54v59m1 -58v57m1 -56v55m1 -53v51m1 -51v51m1 -55v59m1 -54v49m1 -52v55m1 -48v41m1 -59v77m1 -65v53m1 -43v33m1 -43v53m1 -56v59m1 -55v51m1 -49v47m1 -53v59m1 -58v57m1 -61v65m1 -55v45m1 -49v53m1 -49v45m1 -52v59m1 -56v53m1 -52v51m1 -48v45m1 -47v49m1 -52v55m1 -55v55m1 -58v61m1 -54v47m1 -48v49m1 -50v51m1 -56v61m1 -55v49m1 -51v53m1 -57v61m1 -55v49m1 -51v53m1 -53v53m1 -52v51m1 -53v55m1 -51v47m1 -48v49m1 -49v49m1 -50v51m1 -61v71m1 -59v47m1 -46v45m1 -48v51m1 -52v53m1 -54v55m1 -53v51m1 -49v47m1 -49v51m1 -54v57m1 -59v61m1 -59v57m1 -57v57m1 -55v53m1 -51v49m1 -51v53m1 -56v59m1 -58v57m1 -54v51m1 -56v61m1 -56v51m1 -56v61m1 -56v51m1 -43v35m1 -41v47m1 -56v65m1 -56v47m1 -48v49m1 -52v55m1 -46v37m1 -44v51m1 -51v51m1 -52v53m1 -54v55m1 -55v55m1 -46v37m1 -46v55m1 -48v41m1 -46v51m1 -45v39m1 -44v49m1 -54v59m1 -57v55m1 -54v53m1 -53v53m1 -55v57m1 -57v57m1 -54v51m1 -48v45m1 -57v69m1 -63v57m1 -53v49m1 -62v75m1 -62v49m1 -48v47m1 -51v55m1 -54v53m1 -52v51m1 -62v73m1 -44v15m1 -32v49m1 -50v51m1 -33v15m1 -30v45m1 -55v65m1 -55v45m1 -47v49m1 -50v51m1 -53v55m1 -50v45m1 -48v51m1 -47v43m1 -37v31m1 -46v61m1 -58v55m1 -50v45m1 -55v65m1 -64v63m1 -55v47m1 -48v49m1 -53v57m1 -49v41m1 -54v67m1 -63v59m1 -53v47m1 -51v55m1 -44v33m1 -40v47m1 -51v55m1 -50v45m1 -48v51m1 -48v45m1 -46v47m1 -47v47m1 -51v55m1 -52v49m1 -46v43m1 -51v59m1 -66v73m1 -63v53m1 -58v63m1 -59v55m1 -58v61m1 -54v47m1 -47v47m1 -51v55m1 -55v55m1 -56v57m1 -56v55m1 -54v53m1 -51v49m1 -52v55m1 -65v75m1 -72v69m1 -62v55m1 -57v59m1 -57v55m1 -54v53m1 -51v49m1 -62v75m1 -64v53m1 -53v53m1 -60v67m1 -59v51m1 -55v59m1 -62v65m1 -59v53m1 -53v53m1 -51v49m1 -51v53m1 -49v45m1 -49v53m1 -53v53m1 -48v43m1 -44v45m1 -50v55m1 -51v47m1 -53v59m1 -54v49m1 -52v55m1 -52v49m1 -48v47m1 -40v33m1 -42v51m1 -55v59m1 -52v45m1 -47v49m1 -48v47m1 -51v55m1 -50v45m1 -40v35m1 -47v59m1 -53v47m1 -51v55m1 -52v49m1 -49v49m1 -51v53m1 -50v47m1 -47v47m1 -52v57m1 -57v57m1 -47v37m1 -43v49m1 -51v53m1 -49v45m1 -48v51m1 -48v45m1 -51v57m1 -51v45m1 -49v53m1 -53v53m1 -55v57m1 -54v51m1 -54v57m1 -53v49m1 -54v59m1 -55v51m1 -56v61m1 -60v59m1 -57v55m1 -63v71m1 -68v65m1 -60v55m1 -55v55m1 -58v61m1 -57v53m1 -56v59m1 -59v59m1 -54v49m1 -50v51m1 -53v55m1 -57v59m1 -55v51m1 -54v57m1 -50v43m1 -51v59m1 -58v57m1 -53v49m1 -61v73m1 -65v57m1 -56v55m1 -54v53m1 -51v49m1 -54v59m1 -62v65m1 -61v57m1 -53v49m1 -59v69m1 -55v41m1 -50v59m1 -54v49m1 -49v49m1 -51v53m1 -66v79m1 -63v47m1 -52v57m1 -53v49m1 -48v47m1 -49v51m1 -50v49m1 -53v57m1 -52v47m1 -50v53m1 -50v47m1 -49v51m1 -48v45m1 -49v53m1 -63v73m1 -63v53m1 -51v49m1 -47v45m1 -53v61m1 -55v49m1 -48v47m1 -63v79m1 -66v53m1 -59v65m1 -54v43m1 -49v55m1 -52v49m1 -49v49m1 -49v49m1 -53v57m1 -51v45m1 -50v55m1 -50v45m1 -50v55m1 -56v57m1 -50v43m1 -49v55m1 -56v57m1 -53v49m1 -58v67m1 -61v55m1 -56v57m1 -63v69m1 -60v51m1 -59v67m1 -57v47m1 -56v65m1 -59v53m1 -47v41m1 -50v59m1 -53v47m1 -53v59m1 -50v41m1 -41v41m1 -54v67m1 -63v59m1 -59v59m1 -57v55m1 -53v51m1 -49v47m1 -48v49m1 -53v57m1 -56v55m1 -64v73m1 -61v49m1 -53v57m1 -44v31m1 -53v75m1 -70v65m1 -60v55m1 -56v57m1 -56v55m1 -53v51m1 -52v53m1 -52v51m1 -48v45m1 -46v47m1 -46v45m1 -46v47m1 -52v57m1 -56v55m1 -64v73m1 -60v47m1 -47v47m1 -46v45m1 -48v51m1 -52v53m1 -55v57m1 -49v41m1 -44v47m1 -48v49m1 -40v31m1 -43v55m1 -67v79m1 -59v39m1 -48v57m1 -45v33m1 -42v51m1 -45v39m1 -49v59m1 -53v47m1 -39v31m1 -54v77m1 -62v47m1 -42v37m1 -47v57m1 -57v57m1 -53v49m1 -48v47m1 -58v69m1 -52v35m1 -53v71m1 -61v51m1 -59v67m1 -61v55m1 -51v47m1 -46v45m1 -50v55m1 -55v55m1 -50v45m1 -49v53m1 -50v47m1 -44v41m1 -43v45m1 -47v49m1 -49v49m1 -47v45m1 -58v71m1 -63v55m1 -53v51m1 -53v55m1 -54v53m1 -51v49m1 -50v51m1 -50v49m1 -50v51m1 -49v47m1 -51v55m1 -51v47m1 -47v47m1 -42v37m1 -46v55m1 -53v51m1 -45v39m1 -44v49m1 -50v51m1 -49v47m1 -51v55m1 -58v61m1 -55v49m1 -53v57m1 -57v57m1 -55v53m1 -51v49m1 -51v53m1 -41v29m1 -38v47m1 -42v37m1 -35v33m1 -40v47m1 -48v49m1 -52v55m1 -54v53m1 -55v57m1 -56v55m1 -54v53m1 -53v53m1 -53v53m1 -49v45m1 -40v35m1 -45v55m1 -63v71m1 -65v59m1 -57v55m1 -52v49m1 -47v45m1 -50v55m1 -55v55m1 -54v53m1 -51v49m1 -40v31m1 -40v49m1 -49v49m1 -52v55m1 -56v57m1 -53v49m1 -48v47m1 -47v47m1 -45v43m1 -49v55m1 -58v61m1 -59v57m1 -54v51m1 -49v47m1 -48v49m1 -50v51m1 -56v61m1 -54v47m1 -46v45m1 -41v37m1 -35v33m1 -39v45m1 -37v29m1 -37v45m1 -50v55m1 -45v35m1 -42v49m1 -54v59m1 -62v65m1 -58v51m1 -49v47m1 -47v47m1 -45v43m1 -44v45m1 -48v51m1 -49v47m1 -51v55m1 -52v49m1 -49v49m1 -50v51m1 -51v51m1 -52v53m1 -60v67m1 -51v35m1 -43v51m1 -51v51m1 -52v53m1 -52v51m1 -46v41m1 -56v71m1 -64v57m1 -55v53m1 -50v47m1 -62v77m1 -65v53m1 -51v49m1 -52v55m1 -54v53m1 -67v81m1 -66v51m1 -59v67m1 -58v49m1 -51v53m1 -52v51m1 -52v53m1 -60v67m1 -59v51m1 -59v67m1 -74v81m1 -70v59m1 -57v55m1 -54v53m1 -61v69m1 -70v71m1 -63v55m1 -54v53m1 -55v57m1 -57v57m1 -52v47m1 -49v51m1 -49v47m1 -52v57m1 -64v71m1 -61v51m1 -49v47m1 -50v53m1 -43v33m1 -34v35m1 -51v67m1 -60v53m1 -55v57m1 -55v53m1 -56v59m1 -58v57m1 -57v57m1 -54v51m1 -52v53m1 -52v51m1 -52v53m1 -50v47m1 -49v51m1 -52v53m1 -51v49m1 -45v41m1 -54v67m1 -62v57m1 -47v37m1 -41v45m1 -51v57m1 -56v55m1 -45v35m1 -43v51m1 -49v47m1 -51v55m1 -53v51m1 -53v55m1 -55v55m1 -55v55m1 -43v31m1 -41v51m1 -50v49m1 -51v53m1 -54v55m1 -52v49m1 -52v55m1 -55v55m1 -50v45m1 -45v45m1 -45v45m1 -50v55m1 -55v55m1 -53v51m1 -54v57m1 -55v53m1 -43v33m1 -40v47m1 -48v49m1 -52v55m1 -59v63m1 -58v53m1 -55v57m1 -56v55m1 -51v47m1 -50v53m1 -55v57m1 -52v47m1 -49v51m1 -48v45m1 -45v45m1 -42v39m1 -35v31m1 -43v55m1 -54v53m1 -49v45m1 -47v49m1 -56v63m1 -58v53m1 -49v45m1 -45v45m1 -48v51m1 -52v53m1 -52v51m1 -52v53m1 -54v55m1 -51v47m1 -47v47m1 -41v35m1 -41v47m1 -53v59m1 -58v57m1 -56v55m1 -49v43m1 -56v69m1 -58v47m1 -52v57m1 -52v47m1 -52v57m1 -55v53m1 -59v65m1 -60v55m1 -50v45m1 -43v41m1 -47v53m1 -59v65m1 -60v55m1 -52v49m1 -42v35m1 -45v55m1 -50v45m1 -49v53m1 -54v55m1 -50v45m1 -50v55m1 -43v31m1 -36v41m1 -45v49m1 -46v43m1 -47v51m1 -50v49m1 -47v45m1 -56v67m1 -60v53m1 -50v47m1 -51v55m1 -44v33m1 -40v47m1 -61v75m1 -61v47m1 -49v51m1 -49v47m1 -61v75m1 -58v41m1 -33v25m1 -20v15m1 -11v7m1 -5v3" stroke="#6464dc" stroke-width="1" fill="none"/><path d="M139.5 659v93m1 -101v98m1 -92v93m1 -105v109m1 -103v95m1 -93v94m1 -91v99m1 -92v91m1 -103v99m1 -98v113m1 -103v87m1 -101v104m1 -106v112m1 -102v95m1 -96v91m1 -85v86m1 -96v98m1 -82v72m1 -77v79m1 -67v71m1 -74v73m1 -70v71m1 -74v72m1 -77v74m1 -71v74m1 -75v70m1 -69v69m1 -75v88m1 -104v128m1 -137v126m1 -123v120m1 -120v131m1 -127v121m1 -118v100m1 -109v131m1 -121v116m1 -119v119m1 -114v97m1 -91v106m1 -119v123m1 -121v115m1 -122v109m1 -112v109m1 -85v93m1 -90v97m1 -124v118m1 -98v92m1 -104v116m1 -114v120m1 -132v113m1 -92v91m1 -98v96m1 -89v101m1 -112v107m1 -101v105m1 -110v112m1 -98v99m1 -108v123m1 -123v100m1 -107v112m1 -99v104m1 -100v100m1 -117v107m1 -103v119m1 -117v104m1 -106v124m1 -121v102m1 -102v101m1 -89v85m1 -94v111m1 -113v112m1 -102v103m1 -129v128m1 -115v125m1 -109v89m1 -97v90m1 -96v112m1 -113v113m1 -111v123m1 -109v79m1 -91v90m1 -80v88m1 -93v112m1 -111v100m1 -109v110m1 -109v108m1 -97v95m1 -95v96m1 -107v123m1 -118v103m1 -93v83m1 -112v121m1 -99v111m1 -121v116m1 -127v116m1 -95v101m1 -99v97m1 -107v104m1 -122v143m1 -143v143m1 -143v143m1 -143v143m1 -143v143m1 -143v143m1 -143v143m1 -143v143m1 -143v143m1 -143v143m1 -143v143m1 -143v143m1 -143v143m1 -143v143m1 -143v143m1 -143v143m1 -143v143m1 -143v143m1 -143v143m1 -143v143m1 -143v143m1 -143v143m1 -143v143m1 -143v143m1 -143v143m1 -143v143m1 -143v143m1 -143v143m1 -143v143m1 -143v143m1 -143v143m1 -143v143m1 -143v143m1 -143v143m1 -143v143m1 -143v143m1 -143v143m1 -143v143m1 -143v143m1 -143v143m1 -143v143m1 -143v143m1 -143v143m1 -143v143m1 -143v143m1 -143v143m1 -143v143m1 -143v143m1 -143v143m1 -143v143m1 -143v143m1 -143v143m1 -143v143m1 -143v143m1 -143v143m1 -143v143m1 -143v143m1 -143v143m1 -143v143m1 -143v143m1 -143v143m1 -143v143m1 -143v143m1 -143v143m1 -139v139m1 -143v143m1 -143v143m1 -143v143m1 -143v143m1 -143v143m1 -143v143m1 -143v143m1 -143v143m1 -143v143m1 -143v143m1 -143v143m1 -143v143m1 -143v143m1 -143v143m1 -143v143m1 -143v143m1 -143v143m1 -143v143m1 -143v143m1 -143v143m1 -143v143m1 -143v143m1 -143v143m1 -143v143m1 -143v143m1 -143v143m1 -143v143m1 -143v143m1 -143v143m1 -143v143m1 -143v143m1 -143v143m1 -143v143m1 -143v143m1 -143v143m1 -143v143m1 -143v143m1 -143v143m1 -143v143m1 -143v143m1 -143v143m1 -143v143m1 -143v143m1 -143v143m1 -143v143m1 -143v143m1 -143v143m1 -143v143m1 -143v143m1 -143v143m1 -143v143m1 -143v143m1 -143v143m1 -143v143m1 -143v143m1 -143v143m1 -143v143m1 -143v143m1 -143v143m1 -143v143m1 -143v143m1 -143v143m1 -143v143m1 -143v143m1 -143v143m1 -143v143m1 -143v143m1 -143v143m1 -143v143m1 -143v143m1 -143v143m1 -143v143m1 -143v143m1 -143v143m1 -143v143m1 -143v143m1 -143v143m1 -143v143m1 -143v143m1 -95v56m1 -84v83m1 -72v64m1 -54v55m1 -55v57m1 -55v58m1 -55v63m1 -63v69m1 -70v67m1 -67v52m1 -64v85m1 -94v79m1 -81v75m1 -59v68m1 -62v61m1 -80v74m1 -53v70m1 -71v67m1 -41v1m1 -1v1m1 -1v1m1 -50v98m1 -87v65m1 -56v63m1 -60v53m1 -56v66m1 -66v64m1 -65v64m1 -63v73m1 -71v55m1 -59v65m1 -58v54m1 -60v66m1 -36v1m1 -24v55m1 -56v53m1 -81v93m1 -85v68m1 -56v65m1 -83v103m1 -85v59m1 -55v56m1 -28v1m1 -1v1m1 -72v140m1 -117v105m1 -128v143m1 -143v143m1 -116v116m1 -143v143m1 -143v143m1 -143v143m1 -131v131m1 -143v143m1 -143v143m1 -114v114m1 -112v112m1 -143v143m1 -143v143m1 -143v143m1 -143v143m1 -143v143m1 -143v143m1 -143v143m1 -143v143m1 -143v143m1 -126v103m1 -120v143m1 -143v143m1 -132v99m1 -110v143m1 -143v143m1 -143v143m1 -143v143m1 -143v143m1 -143v143m1 -143v137m1 -137v143m1 -118v118m1 -143v143m1 -123v123m1 -143v143m1 -143v143m1 -143v143m1 -143v143m1 -128v128m1 -143v143m1 -143v122m1 -122v143m1 -143v143m1 -143v143m1 -143v143m1 -143v143m1 -143v143m1 -143v143m1 -137v137m1 -143v110m1 -110v143m1 -143v143m1 -143v143m1 -133v133m1 -143v107m1 -93v129m1 -116v116m1 -143v143m1 -143v143m1 -143v143m1 -138v138m1 -109v109m1 -143v143m1 -143v143m1 -143v143m1 -143v143m1 -143v143m1 -143v143m1 -143v143m1 -143v143m1 -143v143m1 -143v143m1 -143v125m1 -125v143m1 -143v143m1 -143v143m1 -143v143m1 -143v143m1 -143v143m1 -143v143m1 -143v143m1 -143v143m1 -143v143m1 -143v143m1 -143v143m1 -143v143m1 -143v143m1 -143v125m1 -125v143m1 -143v143m1 -143v143m1 -143v143m1 -143v143m1 -143v143m1 -143v143m1 -143v143m1 -143v143m1 -105v80m1 -93v118m1 -143v143m1 -143v143m1 -143v143m1 -114v98m1 -127v143m1 -122v122m1 -143v143m1 -143v143m1 -143v143m1 -143v143m1 -143v143m1 -143v143m1 -143v121m1 -121v143m1 -125v125m1 -143v143m1 -143v139m1 -139v132m1 -132v143m1 -143v143m1 -143v127m1 -127v143m1 -143v111m1 -111v143m1 -143v143m1 -143v122m1 -95v116m1 -143v143m1 -143v143m1 -143v143m1 -116v116m1 -143v143m1 -143v143m1 -118v118m1 -143v143m1 -143v143m1 -116v116m1 -143v124m1 -124v143m1 -143v143m1 -143v143m1 -143v143m1 -136v136m1 -143v143m1 -143v143m1 -143v143m1 -143v143m1 -143v125m1 -125v143m1 -143v143m1 -143v122m1 -122v143m1 -143v143m1 -143v143m1 -143v143m1 -121v121m1 -143v143m1 -143v143m1 -143v143m1 -134v134m1 -143v143m1 -143v143m1 -143v143m1 -143v143m1 -143v136m1 -136v143m1 -143v143m1 -143v143m1 -143v143m1 -108v108m1 -143v143m1 -116v116m1 -143v143m1 -143v116m1 -116v143m1 -143v143m1 -139v139m1 -143v143m1 -117v117m1 -143v143m1 -132v132m1 -126v110m1 -127v143m1 -143v106m1 -106v143m1 -143v143m1 -143v143m1 -143v143m1 -143v143m1 -107v107m1 -143v141m1 -141v143m1 -143v127m1 -99v99m1 -93v109m1 -127v101m1 -117v143m1 -143v143m1 -143v143m1 -143v143m1 -143v143m1 -143v143m1 -143v143m1 -143v143m1 -143v143m1 -143v143m1 -143v143m1 -143v143m1 -143v143m1 -143v143m1 -143v143m1 -143v143m1 -143v143m1 -143v143m1 -143v143m1 -143v143m1 -143v143m1 -110v110m1 -143v143m1 -143v139m1 -139v143m1 -143v143m1 -143v143m1 -125v98m1 -116v143m1 -143v143m1 -143v143m1 -143v108m1 -86v121m1 -126v126m1 -124v124m1 -143v143m1 -120v111m1 -115v124m1 -143v143m1 -143v143m1 -111v111m1 -143v143m1 -143v143m1 -143v143m1 -143v129m1 -129v143m1 -143v143m1 -143v116m1 -97v119m1 -138v143m1 -143v143m1 -143v143m1 -143v143m1 -143v143m1 -143v118m1 -118v143m1 -143v143m1 -143v143m1 -122v122m1 -143v143m1 -143v143m1 -143v143m1 -143v143m1 -124v124m1 -143v143m1 -143v143m1 -143v143m1 -128v128m1 -143v121m1 -121v143m1 -143v143m1 -127v127m1 -123v123m1 -116v116m1 -143v107m1 -71v107m1 -143v143m1 -143v143m1 -143v143m1 -113v113m1 -143v143m1 -117v117m1 -143v143m1 -143v143m1 -110v110m1 -143v143m1 -143v143m1 -143v143m1 -143v143m1 -143v143m1 -143v143m1 -143v143m1 -143v111m1 -111v143m1 -143v143m1 -143v143m1 -143v143m1 -143v143m1 -105v105m1 -143v143m1 -143v143m1 -143v143m1 -143v143m1 -143v143m1 -143v143m1 -143v143m1 -143v143m1 -143v143m1 -143v143m1 -143v143m1 -143v143m1 -143v141m1 -125v127m1 -143v143m1 -143v143m1 -143v143m1 -109v109m1 -128v117m1 -132v141m1 -141v143m1 -143v143m1 -143v105m1 -105v143m1 -143v143m1 -123v123m1 -143v143m1 -143v143m1 -143v143m1 -143v143m1 -141v141m1 -143v137m1 -115v94m1 -99v126m1 -143v143m1 -130v130m1 -143v143m1 -140v140m1 -143v143m1 -143v143m1 -143v111m1 -94v126m1 -143v143m1 -143v143m1 -143v143m1 -143v143m1 -143v143m1 -143v143m1 -143v135m1 -135v143m1 -143v125m1 -125v143m1 -143v143m1 -143v143m1 -143v143m1 -143v111m1 -101v133m1 -143v143m1 -125v88m1 -106v143m1 -143v111m1 -111v143m1 -143v143m1 -143v143m1 -143v143m1 -143v143m1 -143v143m1 -143v143m1 -139v139m1 -143v143m1 -143v143m1 -143v143m1 -143v143m1 -143v143m1 -143v143m1 -143v143m1 -143v143m1 -143v131m1 -131v108m1 -108v108m1 -108v143m1 -110v110m1 -143v143m1 -143v143m1 -143v143m1 -143v143m1 -143v143m1 -143v143m1 -143v143m1 -143v143m1 -143v143m1 -143v143m1 -143v143m1 -143v143m1 -143v143m1 -143v143m1 -143v112m1 -112v143m1 -143v143m1 -143v122m1 -122v143m1 -143v143m1 -106v75m1 -80v78m1 -73v86m1 -100v95m1 -91v91m1 -90v93m1 -88v85m1 -47v1m1 -1v1m1 -50v105m1 -98v91m1 -98v103m1 -95v83m1 -86v99m1 -97v83m1 -97v112m1 -104v92m1 -44v1m1 -1v1m1 -42v79m1 -109v143m1 -143v113m1 -113v143m1 -143v143m1 -143v143m1 -143v143m1 -143v143m1 -143v143m1 -143v143m1 -143v143m1 -143v143m1 -143v143m1 -143v143m1 -143v143m1 -143v143m1 -143v123m1 -123v143m1 -143v143m1 -133v133m1 -143v143m1 -143v143m1 -143v143m1 -143v143m1 -143v143m1 -128v128m1 -143v143m1 -143v143m1 -143v143m1 -143v135m1 -135v143m1 -143v143m1 -143v143m1 -143v143m1 -143v143m1 -143v143m1 -143v143m1 -143v143m1 -143v143m1 -143v143m1 -139v139m1 -143v143m1 -143v143m1 -143v115m1 -115v143m1 -143v143m1 -143v115m1 -115v143m1 -143v143m1 -143v143m1 -115v115m1 -143v143m1 -143v143m1 -143v143m1 -143v143m1 -143v132m1 -132v143m1 -143v143m1 -113v113m1 -143v143m1 -143v143m1 -143v143m1 -143v143m1 -143v143m1 -143v143m1 -143v143m1 -143v143m1 -143v143m1 -143v143m1 -143v143m1 -143v143m1 -143v143m1 -143v143m1 -143v143m1 -143v143m1 -143v143m1 -143v143m1 -143v143m1 -143v143m1 -143v143m1 -143v143m1 -143v143m1 -131v104m1 -116v143m1 -143v143m1 -143v143m1 -143v143m1 -143v143m1 -143v143m1 -143v143m1 -143v143m1 -143v143m1 -143v143m1 -133v133m1 -143v143m1 -143v143m1 -143v143m1 -143v115m1 -115v131m1 -131v143m1 -143v143m1 -143v143m1 -143v143m1 -143v143m1 -143v143m1 -143v127m1 -127v143m1 -143v143m1 -143v143m1 -143v143m1 -143v143m1 -143v143m1 -143v143m1 -143v143m1 -143v143m1 -143v143m1 -143v143m1 -143v143m1 -143v143m1 -143v119m1 -119v134m1 -134v143m1 -143v143m1 -143v143m1 -143v143m1 -143v143m1 -143v143m1 -143v143m1 -143v143m1 -143v129m1 -129v143m1 -143v126m1 -126v125m1 -125v143m1 -143v143m1 -143v143m1 -143v143m1 -143v143m1 -143v143m1 -143v143m1 -143v143m1 -143v143m1 -143v143m1 -143v143m1 -143v143m1 -143v143m1 -143v143m1 -143v143m1 -143v143m1 -143v143m1 -143v143m1 -126v96m1 -91v121m1 -139v139m1 -143v143m1 -143v143m1 -143v143m1 -143v143m1 -121v121m1 -143v143m1 -143v143m1 -143v143m1 -143v143m1 -127v127m1 -143v143m1 -143v143m1 -143v143m1 -143v143m1 -143v143m1 -143v143m1 -143v143m1 -143v143m1 -143v143m1 -143v143m1 -143v134m1 -131v140m1 -143v143m1 -143v143m1 -143v143m1 -143v143m1 -143v143m1 -115v115m1 -143v143m1 -131v131m1 -143v143m1 -143v143m1 -143v143m1 -143v143m1 -143v143m1 -143v116m1 -116v143m1 -143v143m1 -143v143m1 -143v143m1 -143v143m1 -143v143m1 -143v143m1 -143v143m1 -143v125m1 -125v143m1 -143v113m1 -85v115m1 -143v143m1 -143v143m1 -123v123m1 -143v143m1 -143v143m1 -127v118m1 -134v143m1 -143v143m1 -143v143m1 -143v143m1 -128v128m1 -143v143m1 -143v131m1 -131v143m1 -143v143m1 -118v118m1 -143v143m1 -143v143m1 -143v143m1 -143v143m1 -143v143m1 -143v143m1 -143v143m1 -143v143m1 -143v131m1 -131v143m1 -143v143m1 -143v143m1 -143v143m1 -143v143m1 -143v143m1 -143v143m1 -123v123m1 -143v143m1 -143v143m1 -143v143m1 -143v143m1 -143v143m1 -122v122m1 -143v143m1 -143v143m1 -124v124m1 -143v143m1 -129v119m1 -133v143m1 -143v143m1 -143v143m1 -143v143m1 -143v132m1 -132v143m1 -143v143m1 -143v112m1 -112v143m1 -143v143m1 -131v131m1 -124v124m1 -143v143m1 -143v143m1 -143v143m1 -143v143m1 -143v143m1 -143v143m1 -143v143m1 -143v143m1 -143v143m1 -143v143m1 -143v143m1 -143v143m1 -143v143m1 -143v143m1 -143v143m1 -143v143m1 -143v143m1 -143v143m1 -143v143m1 -143v143m1 -143v143m1 -143v143m1 -143v143m1 -143v143m1 -143v143m1 -143v143m1 -143v143m1 -143v143m1 -143v143m1 -143v143m1 -143v143m1 -143v143m1 -143v143m1 -143v143m1 -143v143m1 -143v143m1 -143v143m1 -143v143m1 -143v143m1 -143v143m1 -143v143m1 -143v143m1 -143v143m1 -143v143m1 -143v143m1 -143v143m1 -143v137m1 -108v114m1 -143v143m1 -117v117m1 -143v143m1 -143v143m1 -143v143m1 -143v143m1 -143v140m1 -140v143m1 -143v143m1 -143v126m1 -126v143m1 -143v143m1 -143v143m1 -111v111m1 -143v143m1 -143v143m1 -143v143m1 -143v143m1 -143v126m1 -126v143m1 -143v143m1 -143v143m1 -143v143m1 -143v143m1 -143v143m1 -121v96m1 -118v143m1 -143v143m1 -143v143m1 -143v143m1 -143v143m1 -143v143m1 -143v143m1 -138v138m1 -143v124m1 -124v143m1 -143v143m1 -130v130m1 -143v143m1 -112v112m1 -143v143m1 -143v143m1 -133v133m1 -143v143m1 -143v143m1 -143v143m1 -143v143m1 -143v143m1 -143v140m1 -140v128m1 -128v143m1 -143v143m1 -143v143m1 -143v143m1 -143v143m1 -143v143m1 -143v143m1 -143v143m1 -143v143m1 -143v143m1 -143v143m1 -143v143m1 -143v143m1 -143v143m1 -143v143m1 -133v133m1 -143v143m1 -138v138m1 -143v143m1 -128v128m1 -143v143m1 -143v118m1 -118v143m1 -143v143m1 -143v143m1 -143v143m1 -143v143m1 -143v143m1 -143v143m1 -143v143m1 -143v119m1 -119v143m1 -143v143m1 -143v143m1 -138v138m1 -143v143m1 -143v143m1 -143v143m1 -143v139m1 -139v143m1 -143v143m1 -143v143m1 -143v143m1 -143v143m1 -143v143m1 -143v143m1 -143v143m1 -143v143m1 -143v143m1 -143v143m1 -143v143m1 -143v143m1 -143v143m1 -143v143m1 -143v143m1 -143v143m1 -143v143m1 -114v114m1 -143v143m1 -143v143m1 -143v143m1 -143v143m1 -143v143m1 -143v143m1 -143v143m1 -143v143m1 -143v143m1 -143v143m1 -143v143m1 -143v143m1 -143v143m1 -143v143m1 -143v143m1 -143v143m1 -143v143m1 -143v143m1 -143v143m1 -143v143m1 -143v143m1 -143v143m1 -143v143m1 -143v143m1 -143v143m1 -143v143m1 -143v143m1 -143v143m1 -143v143m1 -143v143m1 -143v143m1 -143v143m1 -143v143m1 -143v143m1 -143v143m1 -143v143m1 -143v143m1 -143v143m1 -143v143m1 -143v143m1 -143v143m1 -143v143m1 -143v143m1 -116v116m1 -143v143m1 -143v143m1 -143v143m1 -143v143m1 -143v143m1 -143v143m1 -143v143m1 -143v143m1 -143v143m1 -143v143m1 -143v119m1 -119v143m1 -143v143m1 -143v143m1 -143v143m1 -143v143m1 -143v143m1 -143v143m1 -143v143m1 -143v143m1 -143v143m1 -143v143m1 -143v143m1 -143v143m1 -143v143m1 -127v127m1 -143v143m1 -143v143m1 -143v143m1 -143v143m1 -143v143m1 -143v143m1 -143v143m1 -143v143m1 -143v143m1 -143v143m1 -143v143m1 -143v143m1 -143v143m1 -143v143m1 -139v139m1 -143v143m1 -143v143m1 -143v143m1 -143v143m1 -143v143m1 -143v143m1 -143v143m1 -143v143m1 -125v125m1 -143v143m1 -143v123m1 -123v143m1 -143v143m1 -143v143m1 -143v143m1 -143v143m1 -113v113m1 -143v143m1 -143v143m1 -143v143m1 -143v143m1 -143v143m1 -143v143m1 -143v143m1 -143v143m1 -143v124m1 -124v143m1 -143v143m1 -143v143m1 -120v120m1 -143v143m1 -143v143m1 -143v143m1 -143v143m1 -143v143m1 -130v130m1 -143v143m1 -143v143m1 -143v143m1 -143v143m1 -143v143m1 -143v143m1 -143v143m1 -143v143m1 -143v143m1 -143v143m1 -143v143m1 -143v127m1 -102v118m1 -143v143m1 -143v143m1 -143v143m1 -143v143m1 -143v143m1 -143v143m1 -143v143m1 -143v143m1 -143v143m1 -137v137m1 -143v143m1 -143v143m1 -143v143m1 -143v143m1 -143v143m1 -143v143m1 -143v143m1 -143v143m1 -143v143m1 -143v143m1 -143v143m1 -143v143m1 -143v143m1 -143v143m1 -143v143m1 -143v143m1 -143v143m1 -143v143m1 -143v143m1 -143v143m1 -143v143m1 -143v143m1 -143v143m1 -143v143m1 -143v143m1 -143v143m1 -143v143m1 -143v143m1 -143v143m1 -143v143m1 -143v143m1 -143v127m1 -127v143m1 -143v143m1 -143v143m1 -143v143m1 -137v134m1 -140v143m1 -143v143m1 -143v143m1 -143v143m1 -143v143m1 -143v119m1 -119v143m1 -143v143m1 -143v143m1 -143v143m1 -137v137m1 -104v104m1 -119v119m1 -124v118m1 -104v110m1 -143v143m1 -143v117m1 -70v96m1 -143v130m1 -115v128m1 -143v143m1 -122v122m1 -107v107m1 -143v143m1 -143v93m1 -93v143m1 -119v119m1 -143v143m1 -141v141m1 -95v79m1 -115v121m1 -133v104m1 -104v143m1 -110v110m1 -143v143m1 -103v103m1 -143v143m1 -104v104m1 -108v93m1 -114v129m1 -143v143m1 -143v143m1 -143v143m1 -143v143m1 -143v143m1 -124v124m1 -143v143m1 -143v118m1 -80v105m1 -143v143m1 -143v143m1 -143v143m1 -143v143m1 -143v143m1 -143v143m1 -116v116m1 -143v143m1 -118v118m1 -107v107m1 -143v143m1 -143v143m1 -143v143m1 -143v143m1 -130v130m1 -131v131m1 -108v108m1 -143v141m1 -141v143m1 -130v130m1 -119v119m1 -127v111m1 -127v122m1 -122v143m1 -143v116m1 -100v127m1 -143v143m1 -143v143m1 -143v143m1 -143v143m1 -143v143m1 -143v143m1 -143v128m1 -128v143m1 -117v117m1 -143v143m1 -138v138m1 -143v143m1 -143v143m1 -143v143m1 -128v128m1 -143v143m1 -143v143m1 -143v143m1 -136v136m1 -143v121m1 -121v143m1 -143v143m1 -143v143m1 -134v134m1 -111v80m1 -112v143m1 -143v125m1 -125v143m1 -143v143m1 -143v143m1 -143v143m1 -143v143m1 -108v108m1 -143v143m1 -143v143m1 -143v143m1 -143v143m1 -143v143m1 -129v129m1 -143v143m1 -143v143m1 -143v143m1 -143v143m1 -143v143m1 -143v143m1 -143v143m1 -143v143m1 -143v143m1 -143v143m1 -117v117m1 -143v143m1 -143v143m1 -143v143m1 -109v109m1 -143v143m1 -143v133m1 -133v143m1 -129v129m1 -109v109m1 -143v143m1 -143v143m1 -143v143m1 -118v118m1 -143v143m1 -143v143m1 -130v107m1 -120v143m1 -143v143m1 -143v143m1 -116v116m1 -143v143m1 -143v143m1 -143v143m1 -143v140m1 -140v143m1 -143v143m1 -143v143m1 -143v143m1 -143v143m1 -109v77m1 -111v121m1 -121v143m1 -143v143m1 -143v143m1 -143v105m1 -105v143m1 -143v143m1 -143v143m1 -143v143m1 -143v143m1 -143v143m1 -113v113m1 -143v109m1 -109v122m1 -122v143m1 -143v143m1 -143v143m1 -143v143m1 -122v122m1 -143v143m1 -143v143m1 -143v143m1 -143v143m1 -143v143m1 -143v143m1 -143v143m1 -143v139m1 -123v127m1 -143v143m1 -143v132m1 -132v143m1 -143v143m1 -143v143m1 -143v143m1 -127v127m1 -143v143m1 -120v120m1 -140v128m1 -116v128m1 -143v143m1 -143v143m1 -143v143m1 -143v134m1 -134v143m1 -117v117m1 -143v143m1 -143v143m1 -112v75m1 -82v119m1 -143v138m1 -138v143m1 -143v143m1 -143v143m1 -123v123m1 -143v143m1 -143v143m1 -143v143m1 -143v143m1 -143v143m1 -143v143m1 -143v143m1 -136v136m1 -143v115m1 -115v143m1 -108v108m1 -143v143m1 -143v143m1 -143v143m1 -143v143m1 -143v143m1 -143v143m1 -143v143m1 -143v143m1 -143v143m1 -143v143m1 -143v143m1 -143v143m1 -143v133m1 -133v143m1 -143v143m1 -143v143m1 -143v143m1 -143v143m1 -143v143m1 -143v143m1 -143v143m1 -143v143m1 -143v143m1 -143v143m1 -143v143m1 -143v143m1 -143v143m1 -143v143m1 -143v143m1 -143v143m1 -143v143m1 -143v143m1 -143v143m1 -143v143m1 -143v143m1 -143v143m1 -143v143m1 -143v143m1 -143v143m1 -143v143m1 -143v143m1 -143v143m1 -143v143m1 -143v143m1 -143v143m1 -143v143m1 -143v143m1 -143v143m1 -143v143m1 -143v143m1 -143v143m1 -143v143m1 -143v143m1 -143v143m1 -143v143m1 -143v143m1 -143v143m1 -143v143m1 -143v143m1 -143v143m1 -143v143m1 -143v143m1 -143v143m1 -143v143m1 -143v143m1 -143v143m1 -143v143m1 -143v143m1 -143v143m1 -143v143m1 -143v143m1 -143v143m1 -143v143m1 -143v143m1 -143v143m1 -143v143m1 -143v143m1 -143v143m1 -143v143m1 -143v143m1 -143v143m1 -143v143m1 -143v143m1 -143v143m1 -143v143m1 -143v143m1 -143v143m1 -143v143m1 -143v143m1 -143v143m1 -143v143m1 -143v143m1 -143v143m1 -143v143m1 -143v143m1 -143v143m1 -143v143m1 -143v143m1 -143v143m1 -143v143m1 -143v143m1 -143v143m1 -143v143m1 -143v143m1 -143v143m1 -143v143m1 -143v143m1 -143v143m1 -143v143m1 -143v143m1 -143v143m1 -143v143m1 -143v143m1 -143v143m1 -143v143m1 -143v143m1 -143v143m1 -143v143m1 -143v143m1 -143v143m1 -143v143m1 -143v143m1 -143v143m1 -143v143m1 -143v143m1 -143v143m1 -143v143m1 -143v143m1 -143v143m1 -143v143m1 -143v143m1 -143v143m1 -143v143m1 -143v143m1 -143v143m1 -143v143m1 -143v143m1 -143v143m1 -143v143m1 -143v143m1 -143v143m1 -143v143m1 -143v143m1 -143v143m1 -143v143m1 -143v143m1 -143v143m1 -143v143m1 -143v143m1 -143v143m1 -143v143m1 -143v143m1 -143v143m1 -143v143m1 -143v143m1 -143v143m1 -143v143m1 -143v143m1 -143v143m1 -143v143m1 -143v143m1 -143v143m1 -143v143m1 -143v143m1 -138v138m1 -143v143m1 -143v143m1 -143v143m1 -143v143m1 -143v143m1 -143v143m1 -143v143m1 -143v143m1 -143v143m1 -143v143m1 -143v143m1 -143v143m1 -143v143m1 -143v143m1 -143v143m1 -143v143m1 -143v143m1 -143v143m1 -143v143m1 -143v143m1 -143v143m1 -143v143m1 -143v143m1 -143v143m1 -143v143m1 -143v143m1 -143v143m1 -143v143m1 -143v143m1 -143v143m1 -143v143m1 -143v143m1 -143v143m1 -143v143m1 -143v143m1 -143v143m1 -143v137m1 -137v143m1 -143v143m1 -143v143m1 -143v143m1 -143v143m1 -143v143m1 -143v143m1 -143v143m1 -143v143m1 -143v143m1 -143v143m1 -143v143m1 -143v143m1 -143v143m1 -143v143m1 -143v143m1 -143v143m1 -143v143m1 -143v143m1 -143v143m1 -143v143m1 -143v143m1 -143v143m1 -143v143m1 -143v143m1 -143v143m1 -143v143m1 -143v143m1 -143v143m1 -143v143m1 -140v140m1 -143v143m1 -143v143m1 -143v143m1 -143v143m1 -143v143m1 -143v143m1 -143v143m1 -143v130m1 -130v143m1 -143v130m1 -130v143m1 -143v143m1 -143v143m1 -143v143m1 -143v143m1 -143v143m1 -143v143m1 -143v143m1 -143v143m1 -143v143m1 -143v143m1 -143v143m1 -143v143m1 -143v143m1 -143v143m1 -143v143m1 -143v143m1 -143v143m1 -143v143m1 -143v143m1 -143v143m1 -143v143m1 -143v143m1 -143v143m1 -143v143m1 -80v16m1 -79v143m1 -143v143m1 -80v16m1 -79v143m1 -143v143m1 -143v143m1 -143v143m1 -129v129m1 -143v143m1 -143v143m1 -143v143m1 -143v143m1 -143v143m1 -143v130m1 -130v143m1 -143v143m1 -143v143m1 -143v143m1 -143v143m1 -143v143m1 -143v143m1 -143v143m1 -143v143m1 -143v143m1 -143v143m1 -143v143m1 -143v143m1 -136v136m1 -143v143m1 -143v143m1 -143v143m1 -143v143m1 -143v143m1 -143v143m1 -143v143m1 -143v143m1 -143v143m1 -143v143m1 -143v143m1 -143v143m1 -143v143m1 -143v143m1 -143v143m1 -143v143m1 -143v143m1 -143v143m1 -143v143m1 -143v143m1 -143v143m1 -143v143m1 -143v143m1 -143v143m1 -143v143m1 -136v136m1 -143v143m1 -130v130m1 -143v143m1 -143v143m1 -143v143m1 -143v143m1 -143v143m1 -143v143m1 -140v140m1 -143v143m1 -143v143m1 -143v143m1 -143v143m1 -143v143m1 -143v143m1 -143v143m1 -143v143m1 -143v143m1 -143v143m1 -143v143m1 -143v143m1 -143v143m1 -143v143m1 -143v143m1 -143v143m1 -143v143m1 -143v143m1 -143v143m1 -143v143m1 -143v143m1 -143v143m1 -143v143m1 -143v143m1 -143v143m1 -143v143m1 -143v143m1 -143v143m1 -143v143m1 -143v143m1 -143v143m1 -143v143m1 -143v143m1 -143v143m1 -143v143m1 -143v143m1 -143v143m1 -143v143m1 -143v143m1 -143v143m1 -143v143m1 -143v143m1 -143v143m1 -143v143m1 -143v143m1 -143v143m1 -143v143m1 -143v143m1 -143v143m1 -143v143m1 -143v143m1 -143v143m1 -143v143m1 -143v143m1 -143v143m1 -143v143m1 -128v128m1 -143v143m1 -129v129m1 -143v143m1 -143v143m1 -143v135m1 -135v143m1 -143v143m1 -143v143m1 -143v143m1 -143v143m1 -143v143m1 -143v143m1 -143v143m1 -143v143m1 -143v143m1 -143v143m1 -143v143m1 -143v143m1 -143v143m1 -143v143m1 -143v143m1 -143v143m1 -143v143m1 -143v143m1 -143v143m1 -143v143m1 -143v143m1 -143v143m1 -143v143m1 -143v143m1 -143v143m1 -143v143m1 -143v128m1 -128v143m1 -143v143m1 -143v143m1 -143v143m1 -143v143m1 -143v143m1 -143v143m1 -143v143m1 -143v143m1 -143v143m1 -143v143m1 -143v143m1 -143v143m1 -143v143m1 -143v143m1 -143v143m1 -143v143m1 -143v143m1 -143v143m1 -143v143m1 -143v143m1 -143v143m1 -143v143m1 -143v143m1 -143v143m1 -143v143m1 -143v143m1 -143v143m1 -143v143m1 -143v143m1 -143v143m1 -143v143m1 -143v143m1 -143v143m1 -143v143m1 -143v143m1 -143v143m1 -143v143m1 -143v131m1 -131v143m1 -143v135m1 -135v143m1 -143v143m1 -143v143m1 -143v143m1 -143v143m1 -143v143m1 -143v143m1 -143v143m1 -143v143m1 -143v143m1 -143v143m1 -143v137m1 -137v143m1 -143v143m1 -143v143m1 -143v143m1 -133v133m1 -143v143m1 -143v143m1 -143v143m1 -143v143m1 -143v143m1 -143v143m1 -143v143m1 -143v143m1 -143v143m1 -143v143m1 -143v143m1 -143v143m1 -143v143m1 -143v143m1 -143v143m1 -143v143m1 -143v143m1 -143v143m1 -143v143m1 -143v143m1 -143v143m1 -143v143m1 -143v143m1 -143v143m1 -143v143m1 -143v143m1 -143v143m1 -143v143m1 -143v143m1 -143v143m1 -143v143m1 -143v143m1 -143v143m1 -143v143m1 -143v143m1 -143v143m1 -143v143m1 -132v132m1 -143v143m1 -143v143m1 -143v143m1 -143v143m1 -143v143m1 -143v143m1 -143v143m1 -143v143m1 -140v140m1 -143v143m1 -143v143m1 -143v143m1 -143v143m1 -143v143m1 -143v143m1 -143v143m1 -143v143m1 -143v143m1 -143v143m1 -143v143m1 -143v143m1 -143v143m1 -143v143m1 -143v143m1 -143v143m1 -143v143m1 -143v143m1 -143v143m1 -143v143m1 -143v143m1 -143v143m1 -143v143m1 -143v143m1 -143v143m1 -143v143m1 -143v143m1 -143v143m1 -143v143m1 -143v143m1 -134v134m1 -143v143m1 -143v143m1 -143v143m1 -143v143m1 -143v143m1 -143v143m1 -143v143m1 -143v143m1 -143v143m1 -143v143m1 -143v143m1 -143v143m1 -143v143m1 -143v143m1 -143v143m1 -143v143m1 -143v143m1 -143v143m1 -143v143m1 -143v143m1 -143v143m1 -143v143m1 -143v143m1 -143v143m1 -143v143m1 -143v143m1 -143v143m1 -143v143m1 -143v143m1 -143v143m1 -143v133m1 -133v143m1 -143v143m1 -143v143m1 -143v143m1 -143v143m1 -143v143m1 -143v143m1 -143v140m1 -140v143m1 -143v143m1 -143v143m1 -143v143m1 -143v143m1 -143v143m1 -143v143m1 -143v143m1 -140v140m1 -143v143m1 -128v128m1 -143v143m1 -143v143m1 -143v143m1 -143v128m1 -128v143m1 -143v143m1 -143v143m1 -143v143m1 -143v143m1 -143v143m1 -143v143m1 -143v143m1 -143v143m1 -143v143m1 -143v143m1 -143v143m1 -143v143m1 -143v143m1 -143v143m1 -143v143m1 -143v143m1 -143v143m1 -143v143m1 -143v143m1 -143v143m1 -143v143m1 -143v143m1 -143v143m1 -143v143m1 -143v143m1 -143v143m1 -143v143m1 -143v143m1 -143v143m1 -143v143m1 -143v143m1 -143v143m1 -143v143m1 -143v143m1 -143v143m1 -143v143m1 -143v143m1 -143v143m1 -143v143m1 -143v143m1 -143v143m1 -143v133m1 -133v143m1 -143v143m1 -143v143m1 -143v143m1 -143v143m1 -143v143m1 -143v143m1 -143v143m1 -143v143m1 -143v143m1 -143v143m1 -143v143m1 -143v143m1 -143v143m1 -143v143m1 -143v143m1 -143v143m1 -143v143m1 -143v143m1 -143v143m1 -143v143m1 -143v143m1 -143v143m1 -143v143m1 -143v143m1 -143v143m1 -143v143m1 -143v143m1 -143v143m1 -143v143m1 -143v143m1 -143v143m1 -143v143m1 -143v143m1 -143v143m1 -143v143m1 -143v143m1 -143v143m1 -143v143m1 -143v143m1 -143v143m1 -143v143m1 -143v138m1 -138v143m1 -143v143m1 -143v143m1 -143v143m1 -143v143m1 -143v143m1 -143v143m1 -143v143m1 -143v143m1 -143v143m1 -143v143m1 -143v143m1 -143v143m1 -143v143m1 -143v143m1 -143v143m1 -143v143m1 -143v143m1 -143v143m1 -143v143m1 -143v143m1 -143v143m1 -143v143m1 -143v143m1 -143v143m1 -143v143m1 -143v143m1 -143v143m1 -143v143m1 -143v143m1 -143v143m1 -143v143m1 -143v143m1 -143v143m1 -143v143m1 -143v143m1 -143v143m1 -143v143m1 -143v143m1 -143v143m1 -143v143m1 -143v143m1 -143v143m1 -143v143m1 -143v143m1 -143v143m1 -143v143m1 -143v143m1 -143v143m1 -143v143m1 -143v143m1 -143v143m1 -143v143m1 -143v143m1 -143v143m1 -143v143m1 -143v143m1 -143v143m1 -143v143m1 -143v143m1 -143v143m1 -143v143m1 -143v143m1 -143v143m1 -143v143m1 -143v143m1 -143v143m1 -143v138m1 -138v143m1 -143v143m1 -143v143m1 -143v143m1 -143v143m1 -143v143m1 -143v143m1 -143v143m1 -143v143m1 -143v143m1 -143v143m1 -143v143m1 -143v143m1 -143v143m1 -143v139m1 -139v143m1 -143v143m1 -143v143m1 -143v143m1 -143v143m1 -143v143m1 -143v143m1 -143v143m1 -143v143m1 -143v143m1 -143v143m1 -143v143m1 -143v143m1 -143v143m1 -143v143m1 -143v143m1 -143v143m1 -143v143m1 -143v143m1 -143v143m1 -143v143m1 -143v143m1 -135v135m1 -143v143m1 -143v143m1 -143v143m1 -143v143m1 -143v143m1 -143v143m1 -143v143m1 -143v143m1 -110v77m1 -60v43m1 -35v27m1 -22v17m1 -13v9m1 -7v5" stroke="#3232c8" stroke-width="1" fill="none"/><path d="M139.5 681v47m1 -49v51m1 -52v53m1 -53v53m1 -45v37m1 -42v47m1 -46v45m1 -42v39m1 -39v39m1 -40v41m1 -42v43m1 -39v35m1 -39v43m1 -44v45m1 -35v25m1 -30v35m1 -36v37m1 -39v41m1 -41v41m1 -40v39m1 -41v43m1 -39v35m1 -37v39m1 -38v37m1 -40v43m1 -39v35m1 -37v39m1 -36v33m1 -30v27m1 -34v41m1 -39v37m1 -39v41m1 -40v39m1 -38v37m1 -36v35m1 -37v39m1 -39v39m1 -35v31m1 -35v39m1 -35v31m1 -33v35m1 -33v31m1 -32v33m1 -34v35m1 -30v25m1 -30v35m1 -31v27m1 -31v35m1 -33v31m1 -34v37m1 -36v35m1 -32v29m1 -29v29m1 -29v29m1 -29v29m1 -28v27m1 -28v29m1 -25v21m1 -24v27m1 -30v33m1 -29v25m1 -25v25m1 -29v33m1 -31v29m1 -30v31m1 -25v19m1 -25v31m1 -29v27m1 -28v29m1 -31v33m1 -31v29m1 -32v35m1 -33v31m1 -35v39m1 -35v31m1 -35v39m1 -39v39m1 -38v37m1 -38v39m1 -38v37m1 -39v41m1 -39v37m1 -38v39m1 -40v41m1 -42v43m1 -43v43m1 -40v37m1 -37v37m1 -32v27m1 -34v41m1 -44v47m1 -45v43m1 -45v47m1 -47v47m1 -40v33m1 -40v47m1 -49v51m1 -49v47m1 -47v47m1 -47v47m1 -54v61m1 -57v53m1 -51v49m1 -50v51m1 -51v51m1 -40v29m1 -36v43m1 -48v53m1 -50v47m1 -50v53m1 -48v43m1 -56v69m1 -61v53m1 -60v67m1 -60v53m1 -51v49m1 -49v49m1 -53v57m1 -55v53m1 -63v73m1 -63v53m1 -45v37m1 -46v55m1 -58v61m1 -59v57m1 -53v49m1 -56v63m1 -60v57m1 -70v83m1 -68v53m1 -55v57m1 -55v53m1 -61v69m1 -63v57m1 -58v59m1 -59v59m1 -57v55m1 -55v55m1 -54v53m1 -57v61m1 -59v57m1 -59v61m1 -68v75m1 -62v49m1 -50v51m1 -53v55m1 -55v55m1 -58v61m1 -62v63m1 -64v65m1 -60v55m1 -55v55m1 -52v49m1 -43v37m1 -51v65m1 -63v61m1 -62v63m1 -62v61m1 -60v59m1 -56v53m1 -65v77m1 -57v37m1 -47v57m1 -62v67m1 -60v53m1 -66v79m1 -77v75m1 -65v55m1 -70v85m1 -76v67m1 -61v55m1 -45v35m1 -48v61m1 -69v77m1 -73v69m1 -65v61m1 -58v55m1 -56v57m1 -61v65m1 -63v61m1 -76v91m1 -71v51m1 -51v51m1 -55v59m1 -59v59m1 -60v61m1 -58v55m1 -59v63m1 -50v37m1 -60v83m1 -71v59m1 -50v41m1 -52v63m1 -59v55m1 -56v57m1 -60v63m1 -62v61m1 -58v55m1 -66v77m1 -65v53m1 -56v59m1 -60v61m1 -67v73m1 -66v59m1 -58v57m1 -67v77m1 -66v55m1 -55v55m1 -51v47m1 -50v53m1 -58v63m1 -59v55m1 -69v83m1 -61v39m1 -43v47m1 -48v49m1 -53v57m1 -50v43m1 -53v63m1 -60v57m1 -65v73m1 -67v61m1 -57v53m1 -54v55m1 -52v49m1 -62v75m1 -66v57m1 -57v57m1 -56v55m1 -52v49m1 -48v47m1 -52v57m1 -53v49m1 -54v59m1 -52v45m1 -47v49m1 -52v55m1 -61v67m1 -52v37m1 -49v61m1 -59v57m1 -56v55m1 -51v47m1 -34v21m1 -19v17m1 -19v21m1 -20v19m1 -19v19m1 -19v19m1 -20v21m1 -22v23m1 -22v21m1 -19v17m1 -16v15m1 -18v21m1 -21v21m1 -20v19m1 -19v19m1 -20v21m1 -21v21m4 -20v19m1 -20v21m1 -20v19m1 -20v21m1 -21v21m1 -21v21m1 -22v23m1 -23v23m1 -24v25m1 -24v23m1 -20v17m1 -16v15m2 -21v27m1 -24v21m1 -24v27m1 -27v27m1 -27v27m1 -27v27m1 -25v23m1 -23v23m3 -32v41m1 -47v53m1 -44v35m1 -47v59m1 -50v41m1 -42v43m1 -42v41m1 -43v45m1 -43v41m1 -41v41m1 -44v47m1 -42v37m1 -39v41m1 -40v39m1 -38v37m1 -44v51m1 -51v51m1 -41v31m1 -40v49m1 -37v25m1 -32v39m1 -41v43m1 -41v39m1 -42v45m1 -45v45m1 -45v45m1 -42v39m1 -41v43m1 -45v47m1 -45v43m1 -49v55m1 -54v53m1 -46v39m1 -40v41m1 -40v39m1 -42v45m1 -46v47m1 -45v43m1 -39v35m1 -40v45m1 -48v51m1 -46v41m1 -46v51m1 -44v37m1 -44v51m1 -44v37m1 -46v55m1 -49v43m1 -40v37m1 -39v41m1 -51v61m1 -49v37m1 -46v55m1 -46v37m1 -37v37m1 -37v37m1 -41v45m1 -45v45m1 -42v39m1 -49v59m1 -48v37m1 -39v41m1 -42v43m1 -42v41m1 -43v45m1 -45v45m1 -45v45m1 -45v45m1 -42v39m1 -40v41m1 -39v37m1 -34v31m1 -38v45m1 -37v29m1 -34v39m1 -42v45m1 -42v39m1 -41v43m1 -42v41m1 -49v57m1 -51v45m1 -45v45m1 -48v51m1 -47v43m1 -40v37m1 -34v31m1 -39v47m1 -36v25m1 -32v39m1 -32v25m1 -35v45m1 -44v43m1 -46v49m1 -43v37m1 -44v51m1 -41v31m1 -37v43m1 -41v39m1 -32v25m1 -33v41m1 -42v43m1 -39v35m1 -37v39m1 -39v39m1 -43v47m1 -55v63m1 -50v37m1 -38v39m1 -39v39m1 -39v39m1 -44v49m1 -47v45m1 -43v41m1 -43v45m1 -58v71m1 -57v43m1 -55v67m1 -56v45m1 -48v51m1 -49v47m1 -46v45m1 -40v35m1 -41v47m1 -48v49m1 -53v57m1 -46v35m1 -41v47m1 -46v45m1 -45v45m1 -52v59m1 -49v39m1 -32v25m1 -34v43m1 -42v41m1 -34v27m1 -37v47m1 -46v45m1 -46v47m1 -43v39m1 -37v35m1 -42v49m1 -49v49m1 -49v49m1 -49v49m1 -49v49m1 -48v47m1 -54v61m1 -55v49m1 -43v37m1 -43v49m1 -54v59m1 -59v59m1 -51v43m1 -39v35m1 -41v47m1 -46v45m1 -57v69m1 -56v43m1 -46v49m1 -47v45m1 -42v39m1 -40v41m1 -41v41m1 -44v47m1 -59v71m1 -58v45m1 -43v41m1 -46v51m1 -49v47m1 -49v51m1 -49v47m1 -45v43m1 -47v51m1 -47v43m1 -44v45m1 -50v55m1 -53v51m1 -51v51m1 -49v47m1 -49v51m1 -52v53m1 -56v59m1 -51v43m1 -45v47m1 -45v43m1 -46v49m1 -45v41m1 -46v51m1 -60v69m1 -49v29m1 -38v47m1 -44v41m1 -60v79m1 -58v37m1 -43v49m1 -51v53m1 -58v63m1 -58v53m1 -51v49m1 -51v53m1 -54v55m1 -59v63m1 -60v57m1 -53v49m1 -47v45m1 -50v55m1 -52v49m1 -52v55m1 -55v55m1 -61v67m1 -58v49m1 -51v53m1 -54v55m1 -56v57m1 -56v55m1 -55v55m1 -56v57m1 -55v53m1 -55v57m1 -54v51m1 -53v55m1 -56v57m1 -53v49m1 -45v41m1 -47v53m1 -56v59m1 -55v51m1 -59v67m1 -59v51m1 -50v49m1 -46v43m1 -49v55m1 -55v55m1 -52v49m1 -48v47m1 -47v47m1 -49v51m1 -45v39m1 -47v55m1 -62v69m1 -63v57m1 -69v81m1 -56v31m1 -44v57m1 -55v53m1 -53v53m1 -46v39m1 -49v59m1 -54v49m1 -49v49m1 -51v53m1 -52v51m1 -49v47m1 -49v51m1 -50v49m1 -52v55m1 -61v67m1 -48v29m1 -42v55m1 -51v47m1 -51v55m1 -51v47m1 -50v53m1 -53v53m1 -51v49m1 -50v51m1 -50v49m1 -60v71m1 -62v53m1 -56v59m1 -57v55m1 -56v57m1 -52v47m1 -47v47m1 -42v37m1 -46v55m1 -54v53m1 -57v61m1 -58v55m1 -52v49m1 -54v59m1 -56v53m1 -52v51m1 -54v57m1 -57v57m1 -56v55m1 -53v51m1 -53v55m1 -57v59m1 -62v65m1 -61v57m1 -55v53m1 -53v53m1 -51v49m1 -66v83m1 -69v55m1 -54v53m1 -52v51m1 -54v57m1 -52v47m1 -49v51m1 -51v51m1 -52v53m1 -52v51m1 -50v49m1 -51v53m1 -63v73m1 -64v55m1 -51v47m1 -52v57m1 -47v37m1 -45v53m1 -53v53m1 -44v35m1 -43v51m1 -56v61m1 -56v51m1 -50v49m1 -54v59m1 -53v47m1 -51v55m1 -51v47m1 -48v49m1 -52v55m1 -51v47m1 -48v49m1 -49v49m1 -57v65m1 -56v47m1 -51v55m1 -49v43m1 -44v45m1 -41v37m1 -44v51m1 -54v57m1 -56v55m1 -45v35m1 -42v49m1 -52v55m1 -56v57m1 -54v51m1 -48v45m1 -49v53m1 -54v55m1 -56v57m1 -69v81m1 -58v35m1 -45v55m1 -46v37m1 -46v55m1 -58v61m1 -68v75m1 -64v53m1 -51v49m1 -48v47m1 -49v51m1 -54v57m1 -53v49m1 -52v55m1 -51v47m1 -46v45m1 -48v51m1 -51v51m1 -52v53m1 -60v67m1 -60v53m1 -52v51m1 -57v63m1 -56v49m1 -51v53m1 -51v49m1 -54v59m1 -63v67m1 -58v49m1 -50v51m1 -53v55m1 -54v53m1 -56v59m1 -57v55m1 -47v39m1 -46v53m1 -59v65m1 -59v53m1 -52v51m1 -64v77m1 -75v73m1 -61v49m1 -48v47m1 -48v49m1 -51v53m1 -51v49m1 -51v53m1 -52v51m1 -45v39m1 -43v47m1 -51v55m1 -50v45m1 -49v53m1 -49v45m1 -30v15m1 -17v19m1 -17v15m1 -16v17m1 -17v17m1 -17v17m1 -18v19m3 -20v21m1 -19v17m1 -18v19m1 -19v19m1 -18v17m1 -17v17m1 -18v19m1 -20v21m3 -15v9m1 -26v43m1 -42v41m1 -43v45m1 -46v47m1 -46v45m1 -46v47m1 -49v51m1 -52v53m1 -49v45m1 -47v49m1 -51v53m1 -58v63m1 -55v47m1 -47v47m1 -45v43m1 -55v67m1 -59v51m1 -52v53m1 -49v45m1 -45v45m1 -48v51m1 -52v53m1 -51v49m1 -54v59m1 -51v43m1 -47v51m1 -52v53m1 -57v61m1 -54v47m1 -44v41m1 -44v47m1 -56v65m1 -53v41m1 -44v47m1 -50v53m1 -46v39m1 -40v41m1 -45v49m1 -49v49m1 -53v57m1 -49v41m1 -56v71m1 -59v47m1 -46v45m1 -38v31m1 -40v49m1 -50v51m1 -41v31m1 -40v49m1 -48v47m1 -57v67m1 -52v37m1 -43v49m1 -42v35m1 -44v53m1 -55v57m1 -51v45m1 -46v47m1 -50v53m1 -50v47m1 -48v49m1 -49v49m1 -38v27m1 -38v49m1 -48v47m1 -48v49m1 -46v43m1 -42v41m1 -45v49m1 -55v61m1 -51v41m1 -44v47m1 -47v47m1 -51v55m1 -49v43m1 -42v41m1 -41v41m1 -50v59m1 -51v43m1 -48v53m1 -43v33m1 -37v41m1 -46v51m1 -48v45m1 -40v35m1 -40v45m1 -48v51m1 -50v49m1 -45v41m1 -52v63m1 -53v43m1 -39v35m1 -48v61m1 -54v47m1 -47v47m1 -46v45m1 -43v41m1 -45v49m1 -45v41m1 -41v41m1 -45v49m1 -46v43m1 -42v41m1 -35v29m1 -38v47m1 -43v39m1 -40v41m1 -53v65m1 -58v51m1 -46v41m1 -37v33m1 -40v47m1 -47v47m1 -49v51m1 -47v43m1 -54v65m1 -58v51m1 -52v53m1 -51v49m1 -57v65m1 -60v55m1 -51v47m1 -46v45m1 -43v41m1 -53v65m1 -55v45m1 -47v49m1 -49v49m1 -44v39m1 -43v47m1 -46v45m1 -44v43m1 -41v39m1 -40v41m1 -45v49m1 -49v49m1 -48v47m1 -40v33m1 -39v45m1 -55v65m1 -55v45m1 -47v49m1 -46v43m1 -36v29m1 -38v47m1 -48v49m1 -45v41m1 -44v47m1 -38v29m1 -36v43m1 -44v45m1 -44v43m1 -43v43m1 -44v45m1 -45v45m1 -42v39m1 -41v43m1 -47v51m1 -48v45m1 -41v37m1 -47v57m1 -48v39m1 -39v39m1 -41v43m1 -39v35m1 -46v57m1 -51v45m1 -41v37m1 -38v39m1 -41v43m1 -47v51m1 -54v57m1 -57v57m1 -53v49m1 -48v47m1 -44v41m1 -51v61m1 -56v51m1 -50v49m1 -48v47m1 -48v49m1 -50v51m1 -47v43m1 -47v51m1 -51v51m1 -47v43m1 -44v45m1 -45v45m1 -54v63m1 -61v59m1 -49v39m1 -40v41m1 -43v45m1 -45v45m1 -45v45m1 -43v41m1 -45v49m1 -45v41m1 -46v51m1 -46v41m1 -45v49m1 -45v41m1 -43v45m1 -45v45m1 -43v41m1 -46v51m1 -42v33m1 -43v53m1 -52v51m1 -44v37m1 -43v49m1 -48v47m1 -48v49m1 -46v43m1 -48v53m1 -51v49m1 -46v43m1 -43v43m1 -44v45m1 -45v45m1 -45v45m1 -45v45m1 -44v43m1 -48v53m1 -47v41m1 -41v41m1 -45v49m1 -44v39m1 -51v63m1 -53v43m1 -50v57m1 -52v47m1 -47v47m1 -43v39m1 -42v45m1 -44v43m1 -42v41m1 -51v61m1 -48v35m1 -33v31m1 -40v49m1 -49v49m1 -55v61m1 -52v43m1 -44v45m1 -47v49m1 -50v51m1 -51v51m1 -50v49m1 -47v45m1 -53v61m1 -52v43m1 -44v45m1 -53v61m1 -44v27m1 -38v49m1 -50v51m1 -49v47m1 -59v71m1 -59v47m1 -47v47m1 -53v59m1 -54v49m1 -51v53m1 -45v37m1 -40v43m1 -43v43m1 -44v45m1 -44v43m1 -42v41m1 -43v45m1 -39v33m1 -43v53m1 -44v35m1 -32v29m1 -38v47m1 -46v45m1 -47v49m1 -59v69m1 -63v57m1 -56v55m1 -56v57m1 -52v47m1 -50v53m1 -50v47m1 -48v49m1 -50v51m1 -50v49m1 -51v53m1 -55v57m1 -53v49m1 -50v51m1 -48v45m1 -48v51m1 -51v51m1 -49v47m1 -51v55m1 -60v65m1 -64v63m1 -58v53m1 -48v43m1 -55v67m1 -58v49m1 -43v37m1 -43v49m1 -50v51m1 -50v49m1 -50v51m1 -55v59m1 -55v51m1 -54v57m1 -52v47m1 -52v57m1 -48v39m1 -43v47m1 -49v51m1 -41v31m1 -41v51m1 -55v59m1 -66v73m1 -64v55m1 -57v59m1 -58v57m1 -57v57m1 -61v65m1 -62v59m1 -56v53m1 -57v61m1 -58v55m1 -58v61m1 -60v59m1 -58v57m1 -53v49m1 -46v43m1 -46v49m1 -49v49m1 -52v55m1 -57v59m1 -48v37m1 -37v37m1 -43v49m1 -50v51m1 -46v41m1 -43v45m1 -49v53m1 -56v59m1 -57v55m1 -55v55m1 -55v55m1 -55v55m1 -63v71m1 -71v71m1 -65v59m1 -50v41m1 -49v57m1 -57v57m1 -58v59m1 -56v53m1 -54v55m1 -59v63m1 -61v59m1 -59v59m1 -55v51m1 -50v49m1 -45v41m1 -45v49m1 -57v65m1 -63v61m1 -56v51m1 -50v49m1 -51v53m1 -59v65m1 -58v51m1 -54v57m1 -55v53m1 -51v49m1 -50v51m1 -49v47m1 -52v57m1 -56v55m1 -59v63m1 -60v57m1 -48v39m1 -49v59m1 -54v49m1 -51v53m1 -59v65m1 -59v53m1 -57v61m1 -57v53m1 -52v51m1 -53v55m1 -57v59m1 -55v51m1 -52v53m1 -45v37m1 -42v47m1 -50v53m1 -59v65m1 -61v57m1 -60v63m1 -58v53m1 -50v47m1 -46v45m1 -61v77m1 -65v53m1 -61v69m1 -58v47m1 -52v57m1 -57v57m1 -64v71m1 -62v53m1 -54v55m1 -54v53m1 -56v59m1 -45v31m1 -45v59m1 -57v55m1 -58v61m1 -61v61m1 -61v61m1 -60v59m1 -59v59m1 -58v57m1 -55v53m1 -52v51m1 -54v57m1 -56v55m1 -44v33m1 -42v51m1 -52v53m1 -55v57m1 -43v29m1 -40v51m1 -53v55m1 -47v39m1 -48v57m1 -52v47m1 -48v49m1 -50v51m1 -42v33m1 -34v35m1 -38v41m1 -56v71m1 -64v57m1 -59v61m1 -60v59m1 -49v39m1 -44v49m1 -45v41m1 -45v49m1 -60v71m1 -63v55m1 -58v61m1 -57v53m1 -55v57m1 -54v51m1 -54v57m1 -53v49m1 -55v61m1 -57v53m1 -64v75m1 -69v63m1 -57v51m1 -54v57m1 -53v49m1 -50v51m1 -53v55m1 -64v73m1 -63v53m1 -51v49m1 -52v55m1 -46v37m1 -44v51m1 -54v57m1 -53v49m1 -66v83m1 -63v43m1 -52v61m1 -61v61m1 -57v53m1 -55v57m1 -59v61m1 -59v57m1 -59v61m1 -52v43m1 -40v37m1 -48v59m1 -72v85m1 -78v71m1 -61v51m1 -44v37m1 -48v59m1 -56v53m1 -55v57m1 -58v59m1 -49v39m1 -46v53m1 -54v55m1 -53v51m1 -53v55m1 -67v79m1 -69v59m1 -68v77m1 -64v51m1 -63v75m1 -66v57m1 -57v57m1 -57v57m1 -54v51m1 -48v45m1 -49v53m1 -45v37m1 -45v53m1 -50v47m1 -51v55m1 -50v45m1 -52v59m1 -61v63m1 -61v59m1 -53v47m1 -51v55m1 -56v57m1 -54v51m1 -52v53m1 -54v55m1 -52v49m1 -54v59m1 -55v51m1 -55v59m1 -54v49m1 -61v73m1 -63v53m1 -48v43m1 -47v51m1 -53v55m1 -57v59m1 -56v53m1 -54v55m1 -56v57m1 -56v55m1 -54v53m1 -55v57m1 -55v53m1 -53v53m1 -55v57m1 -53v49m1 -51v53m1 -42v31m1 -45v59m1 -67v75m1 -66v57m1 -55v53m1 -51v49m1 -56v63m1 -60v57m1 -48v39m1 -47v55m1 -57v59m1 -62v65m1 -56v47m1 -48v49m1 -51v53m1 -52v51m1 -49v47m1 -51v55m1 -48v41m1 -45v49m1 -52v55m1 -51v47m1 -50v53m1 -52v51m1 -55v59m1 -56v53m1 -56v59m1 -58v57m1 -55v53m1 -51v49m1 -52v55m1 -54v53m1 -55v57m1 -56v55m1 -51v47m1 -50v53m1 -45v37m1 -45v53m1 -54v55m1 -53v51m1 -50v49m1 -55v61m1 -55v49m1 -49v49m1 -55v61m1 -45v29m1 -29v29m1 -29v29m1 -33v37m1 -41v45m1 -35v25m1 -26v27m1 -28v29m1 -27v25m1 -27v29m1 -27v25m1 -26v27m1 -27v27m1 -32v37m1 -31v25m1 -30v35m1 -33v31m1 -37v43m1 -37v31m1 -31v31m1 -30v29m1 -30v31m1 -28v25m1 -27v29m1 -34v39m1 -35v31m1 -29v27m1 -23v19m1 -31v43m1 -41v39m1 -35v31m1 -30v29m1 -37v45m1 -36v27m1 -28v29m1 -30v31m1 -36v41m1 -35v29m1 -36v43m1 -49v55m1 -54v53m1 -51v49m1 -51v53m1 -51v49m1 -53v57m1 -68v79m1 -76v73m1 -63v53m1 -51v49m1 -50v51m1 -46v41m1 -40v39m1 -38v37m1 -39v41m1 -41v41m1 -42v43m1 -50v57m1 -47v37m1 -37v37m1 -46v55m1 -42v29m1 -33v37m1 -40v43m1 -40v37m1 -38v39m1 -39v39m1 -36v33m1 -32v31m1 -36v41m1 -40v39m1 -41v43m1 -43v43m1 -46v49m1 -46v43m1 -39v35m1 -32v29m1 -35v41m1 -45v49m1 -42v35m1 -41v47m1 -44v41m1 -38v35m1 -37v39m1 -40v41m1 -38v35m1 -37v39m1 -38v37m1 -39v41m1 -37v33m1 -37v41m1 -38v35m1 -34v33m1 -35v37m1 -35v33m1 -33v33m1 -35v37m1 -35v33m1 -38v43m1 -42v41m1 -41v41m1 -41v41m1 -41v41m1 -41v41m1 -38v35m1 -38v41m1 -39v37m1 -37v37m1 -38v39m1 -31v23m1 -29v35m1 -32v29m1 -27v25m1 -34v43m1 -35v27m1 -31v35m1 -39v43m1 -39v35m1 -37v39m1 -40v41m1 -40v39m1 -33v27m1 -42v57m1 -47v37m1 -39v41m1 -42v43m1 -44v45m1 -42v39m1 -45v51m1 -47v43m1 -43v43m1 -52v61m1 -52v43m1 -40v37m1 -49v61m1 -45v29m1 -36v43m1 -39v35m1 -35v35m1 -39v43m1 -43v43m1 -46v49m1 -54v59m1 -52v45m1 -40v35m1 -37v39m1 -46v53m1 -45v37m1 -47v57m1 -54v51m1 -44v37m1 -31v25m1 -32v39m1 -38v37m1 -39v41m1 -41v41m1 -46v51m1 -44v37m1 -40v43m1 -45v47m1 -47v47m1 -45v43m1 -49v55m1 -47v39m1 -38v37m1 -38v39m1 -40v41m1 -38v35m1 -37v39m1 -36v33m1 -34v35m1 -37v39m1 -40v41m1 -36v31m1 -35v39m1 -42v45m1 -41v37m1 -40v43m1 -42v41m1 -40v39m1 -42v45m1 -45v45m1 -36v27m1 -36v45m1 -41v37m1 -40v43m1 -45v47m1 -39v31m1 -46v61m1 -48v35m1 -37v39m1 -42v45m1 -39v33m1 -34v35m1 -37v39m1 -40v41m1 -40v39m1 -43v47m1 -38v29m1 -43v57m1 -48v39m1 -41v43m1 -39v35m1 -36v37m1 -36v35m1 -29v23m1 -31v39m1 -37v35m1 -36v37m1 -33v29m1 -34v39m1 -50v61m1 -49v37m1 -39v41m1 -42v43m1 -39v35m1 -38v41m1 -41v41m1 -42v43m1 -41v39m1 -39v39m1 -34v29m1 -34v39m1 -48v57m1 -47v37m1 -45v53m1 -45v37m1 -39v41m1 -45v49m1 -44v39m1 -45v51m1 -57v63m1 -65v67m1 -60v53m1 -46v39m1 -49v59m1 -56v53m1 -60v67m1 -57v47m1 -58v69m1 -58v47m1 -50v53m1 -61v69m1 -64v59m1 -49v39m1 -52v65m1 -60v55m1 -58v61m1 -54v47m1 -41v35m1 -47v59m1 -54v49m1 -49v49m1 -49v49m1 -48v47m1 -52v57m1 -56v55m1 -51v47m1 -46v45m1 -45v45m1 -47v49m1 -62v75m1 -59v43m1 -44v45m1 -46v47m1 -46v45m1 -45v45m1 -47v49m1 -48v47m1 -47v47m1 -58v69m1 -57v45m1 -47v49m1 -52v55m1 -62v69m1 -60v51m1 -53v55m1 -55v55m1 -54v53m1 -56v59m1 -59v59m1 -56v53m1 -53v53m1 -54v55m1 -43v31m1 -54v77m1 -62v47m1 -47v47m1 -60v73m1 -61v49m1 -50v51m1 -59v67m1 -59v51m1 -54v57m1 -54v51m1 -51v51m1 -50v49m1 -54v59m1 -64v69m1 -64v59m1 -54v49m1 -49v49m1 -50v51m1 -43v35m1 -48v61m1 -63v65m1 -59v53m1 -64v75m1 -64v53m1 -51v49m1 -49v49m1 -64v79m1 -70v61m1 -60v59m1 -57v55m1 -46v37m1 -49v61m1 -61v61m1 -60v59m1 -66v73m1 -64v55m1 -55v55m1 -55v55m1 -58v61m1 -56v51m1 -56v61m1 -61v61m1 -61v61m1 -59v57m1 -58v59m1 -63v67m1 -58v49m1 -54v59m1 -55v51m1 -42v33m1 -35v37m1 -45v53m1 -51v49m1 -48v47m1 -49v51m1 -40v29m1 -40v51m1 -52v53m1 -53v53m1 -45v37m1 -52v67m1 -50v33m1 -42v51m1 -44v37m1 -47v57m1 -52v47m1 -42v37m1 -43v49m1 -48v47m1 -48v49m1 -48v47m1 -49v51m1 -40v29m1 -43v57m1 -56v55m1 -61v67m1 -62v57m1 -55v53m1 -53v53m1 -63v73m1 -63v53m1 -54v55m1 -53v51m1 -51v51m1 -58v65m1 -60v55m1 -52v49m1 -51v53m1 -49v45m1 -50v55m1 -56v57m1 -53v49m1 -48v47m1 -50v53m1 -54v55m1 -57v59m1 -52v45m1 -50v55m1 -62v69m1 -59v49m1 -54v59m1 -58v57m1 -56v55m1 -53v51m1 -51v51m1 -55v59m1 -54v49m1 -52v55m1 -48v41m1 -59v77m1 -65v53m1 -43v33m1 -43v53m1 -56v59m1 -55v51m1 -49v47m1 -53v59m1 -58v57m1 -61v65m1 -55v45m1 -49v53m1 -49v45m1 -52v59m1 -56v53m1 -52v51m1 -48v45m1 -47v49m1 -52v55m1 -55v55m1 -58v61m1 -54v47m1 -48v49m1 -50v51m1 -56v61m1 -55v49m1 -51v53m1 -57v61m1 -55v49m1 -51v53m1 -53v53m1 -52v51m1 -53v55m1 -51v47m1 -48v49m1 -49v49m1 -50v51m1 -61v71m1 -59v47m1 -46v45m1 -48v51m1 -52v53m1 -54v55m1 -53v51m1 -49v47m1 -49v51m1 -54v57m1 -59v61m1 -59v57m1 -57v57m1 -55v53m1 -51v49m1 -51v53m1 -56v59m1 -58v57m1 -54v51m1 -56v61m1 -56v51m1 -56v61m1 -56v51m1 -43v35m1 -41v47m1 -56v65m1 -56v47m1 -48v49m1 -52v55m1 -46v37m1 -44v51m1 -51v51m1 -52v53m1 -54v55m1 -55v55m1 -46v37m1 -46v55m1 -48v41m1 -46v51m1 -45v39m1 -44v49m1 -54v59m1 -57v55m1 -54v53m1 -53v53m1 -55v57m1 -57v57m1 -54v51m1 -48v45m1 -57v69m1 -63v57m1 -53v49m1 -62v75m1 -62v49m1 -48v47m1 -51v55m1 -54v53m1 -52v51m1 -62v73m1 -44v15m1 -32v49m1 -50v51m1 -33v15m1 -30v45m1 -55v65m1 -55v45m1 -47v49m1 -50v51m1 -53v55m1 -50v45m1 -48v51m1 -47v43m1 -37v31m1 -46v61m1 -58v55m1 -50v45m1 -55v65m1 -64v63m1 -55v47m1 -48v49m1 -53v57m1 -49v41m1 -54v67m1 -63v59m1 -53v47m1 -51v55m1 -44v33m1 -40v47m1 -51v55m1 -50v45m1 -48v51m1 -48v45m1 -46v47m1 -47v47m1 -51v55m1 -52v49m1 -46v43m1 -51v59m1 -66v73m1 -63v53m1 -58v63m1 -59v55m1 -58v61m1 -54v47m1 -47v47m1 -51v55m1 -55v55m1 -56v57m1 -56v55m1 -54v53m1 -51v49m1 -52v55m1 -65v75m1 -72v69m1 -62v55m1 -57v59m1 -57v55m1 -54v53m1 -51v49m1 -62v75m1 -64v53m1 -53v53m1 -60v67m1 -59v51m1 -55v59m1 -62v65m1 -59v53m1 -53v53m1 -51v49m1 -51v53m1 -49v45m1 -49v53m1 -53v53m1 -48v43m1 -44v45m1 -50v55m1 -51v47m1 -53v59m1 -54v49m1 -52v55m1 -52v49m1 -48v47m1 -40v33m1 -42v51m1 -55v59m1 -52v45m1 -47v49m1 -48v47m1 -51v55m1 -50v45m1 -40v35m1 -47v59m1 -53v47m1 -51v55m1 -52v49m1 -49v49m1 -51v53m1 -50v47m1 -47v47m1 -52v57m1 -57v57m1 -47v37m1 -43v49m1 -51v53m1 -49v45m1 -48v51m1 -48v45m1 -51v57m1 -51v45m1 -49v53m1 -53v53m1 -55v57m1 -54v51m1 -54v57m1 -53v49m1 -54v59m1 -55v51m1 -56v61m1 -60v59m1 -57v55m1 -63v71m1 -68v65m1 -60v55m1 -55v55m1 -58v61m1 -57v53m1 -56v59m1 -59v59m1 -54v49m1 -50v51m1 -53v55m1 -57v59m1 -55v51m1 -54v57m1 -50v43m1 -51v59m1 -58v57m1 -53v49m1 -61v73m1 -65v57m1 -56v55m1 -54v53m1 -51v49m1 -54v59m1 -62v65m1 -61v57m1 -53v49m1 -59v69m1 -55v41m1 -50v59m1 -54v49m1 -49v49m1 -51v53m1 -66v79m1 -63v47m1 -52v57m1 -53v49m1 -48v47m1 -49v51m1 -50v49m1 -53v57m1 -52v47m1 -50v53m1 -50v47m1 -49v51m1 -48v45m1 -49v53m1 -63v73m1 -63v53m1 -51v49m1 -47v45m1 -53v61m1 -55v49m1 -48v47m1 -63v79m1 -66v53m1 -59v65m1 -54v43m1 -49v55m1 -52v49m1 -49v49m1 -49v49m1 -53v57m1 -51v45m1 -50v55m1 -50v45m1 -50v55m1 -56v57m1 -50v43m1 -49v55m1 -56v57m1 -53v49m1 -58v67m1 -61v55m1 -56v57m1 -63v69m1 -60v51m1 -59v67m1 -57v47m1 -56v65m1 -59v53m1 -47v41m1 -50v59m1 -53v47m1 -53v59m1 -50v41m1 -41v41m1 -54v67m1 -63v59m1 -59v59m1 -57v55m1 -53v51m1 -49v47m1 -48v49m1 -53v57m1 -56v55m1 -64v73m1 -61v49m1 -53v57m1 -44v31m1 -53v75m1 -70v65m1 -60v55m1 -56v57m1 -56v55m1 -53v51m1 -52v53m1 -52v51m1 -48v45m1 -46v47m1 -46v45m1 -46v47m1 -52v57m1 -56v55m1 -64v73m1 -60v47m1 -47v47m1 -46v45m1 -48v51m1 -52v53m1 -55v57m1 -49v41m1 -44v47m1 -48v49m1 -40v31m1 -43v55m1 -67v79m1 -59v39m1 -48v57m1 -45v33m1 -42v51m1 -45v39m1 -49v59m1 -53v47m1 -39v31m1 -54v77m1 -62v47m1 -42v37m1 -47v57m1 -57v57m1 -53v49m1 -48v47m1 -58v69m1 -52v35m1 -53v71m1 -61v51m1 -59v67m1 -61v55m1 -51v47m1 -46v45m1 -50v55m1 -55v55m1 -50v45m1 -49v53m1 -50v47m1 -44v41m1 -43v45m1 -47v49m1 -49v49m1 -47v45m1 -58v71m1 -63v55m1 -53v51m1 -53v55m1 -54v53m1 -51v49m1 -50v51m1 -50v49m1 -50v51m1 -49v47m1 -51v55m1 -51v47m1 -47v47m1 -42v37m1 -46v55m1 -53v51m1 -45v39m1 -44v49m1 -50v51m1 -49v47m1 -51v55m1 -58v61m1 -55v49m1 -53v57m1 -57v57m1 -55v53m1 -51v49m1 -51v53m1 -41v29m1 -38v47m1 -42v37m1 -35v33m1 -40v47m1 -48v49m1 -52v55m1 -54v53m1 -55v57m1 -56v55m1 -54v53m1 -53v53m1 -53v53m1 -49v45m1 -40v35m1 -45v55m1 -63v71m1 -65v59m1 -57v55m1 -52v49m1 -47v45m1 -50v55m1 -55v55m1 -54v53m1 -51v49m1 -40v31m1 -40v49m1 -49v49m1 -52v55m1 -56v57m1 -53v49m1 -48v47m1 -47v47m1 -45v43m1 -49v55m1 -58v61m1 -59v57m1 -54v51m1 -49v47m1 -48v49m1 -50v51m1 -56v61m1 -54v47m1 -46v45m1 -41v37m1 -35v33m1 -39v45m1 -37v29m1 -37v45m1 -50v55m1 -45v35m1 -42v49m1 -54v59m1 -62v65m1 -58v51m1 -49v47m1 -47v47m1 -45v43m1 -44v45m1 -48v51m1 -49v47m1 -51v55m1 -52v49m1 -49v49m1 -50v51m1 -51v51m1 -52v53m1 -60v67m1 -51v35m1 -43v51m1 -51v51m1 -52v53m1 -52v51m1 -46v41m1 -56v71m1 -64v57m1 -55v53m1 -50v47m1 -62v77m1 -65v53m1 -51v49m1 -52v55m1 -54v53m1 -67v81m1 -66v51m1 -59v67m1 -58v49m1 -51v53m1 -52v51m1 -52v53m1 -60v67m1 -59v51m1 -59v67m1 -74v81m1 -70v59m1 -57v55m1 -54v53m1 -61v69m1 -70v71m1 -63v55m1 -54v53m1 -55v57m1 -57v57m1 -52v47m1 -49v51m1 -49v47m1 -52v57m1 -64v71m1 -61v51m1 -49v47m1 -50v53m1 -43v33m1 -34v35m1 -51v67m1 -60v53m1 -55v57m1 -55v53m1 -56v59m1 -58v57m1 -57v57m1 -54v51m1 -52v53m1 -52v51m1 -52v53m1 -50v47m1 -49v51m1 -52v53m1 -51v49m1 -45v41m1 -54v67m1 -62v57m1 -47v37m1 -41v45m1 -51v57m1 -56v55m1 -45v35m1 -43v51m1 -49v47m1 -51v55m1 -53v51m1 -53v55m1 -55v55m1 -55v55m1 -43v31m1 -41v51m1 -50v49m1 -51v53m1 -54v55m1 -52v49m1 -52v55m1 -55v55m1 -50v45m1 -45v45m1 -45v45m1 -50v55m1 -55v55m1 -53v51m1 -54v57m1 -55v53m1 -43v33m1 -40v47m1 -48v49m1 -52v55m1 -59v63m1 -58v53m1 -55v57m1 -56v55m1 -51v47m1 -50v53m1 -55v57m1 -52v47m1 -49v51m1 -48v45m1 -45v45m1 -42v39m1 -35v31m1 -43v55m1 -54v53m1 -49v45m1 -47v49m1 -56v63m1 -58v53m1 -49v45m1 -45v45m1 -48v51m1 -52v53m1 -52v51m1 -52v53m1 -54v55m1 -51v47m1 -47v47m1 -41v35m1 -41v47m1 -53v59m1 -58v57m1 -56v55m1 -49v43m1 -56v69m1 -58v47m1 -52v57m1 -52v47m1 -52v57m1 -55v53m1 -59v65m1 -60v55m1 -50v45m1 -43v41m1 -47v53m1 -59v65m1 -60v55m1 -52v49m1 -42v35m1 -45v55m1 -50v45m1 -49v53m1 -54v55m1 -50v45m1 -50v55m1 -43v31m1 -36v41m1 -45v49m1 -46v43m1 -47v51m1 -50v49m1 -47v45m1 -56v67m1 -60v53m1 -50v47m1 -51v55m1 -44v33m1 -40v47m1 -61v75m1 -61v47m1 -49v51m1 -49v47m1 -61v75m1 -58v41m1 -33v25m1 -20v15m1 -11v7m1 -5v3" stroke="#6464dc" stroke-width="1" fill="none"/><path d="M2476 554.5H2490M2476 704.5H2490M137 254.5H195M137 404.5H195M2032 254.5H2042M2032 404.5H2042" stroke="#3232c8" stroke-width="1"/></svg></body></html>
